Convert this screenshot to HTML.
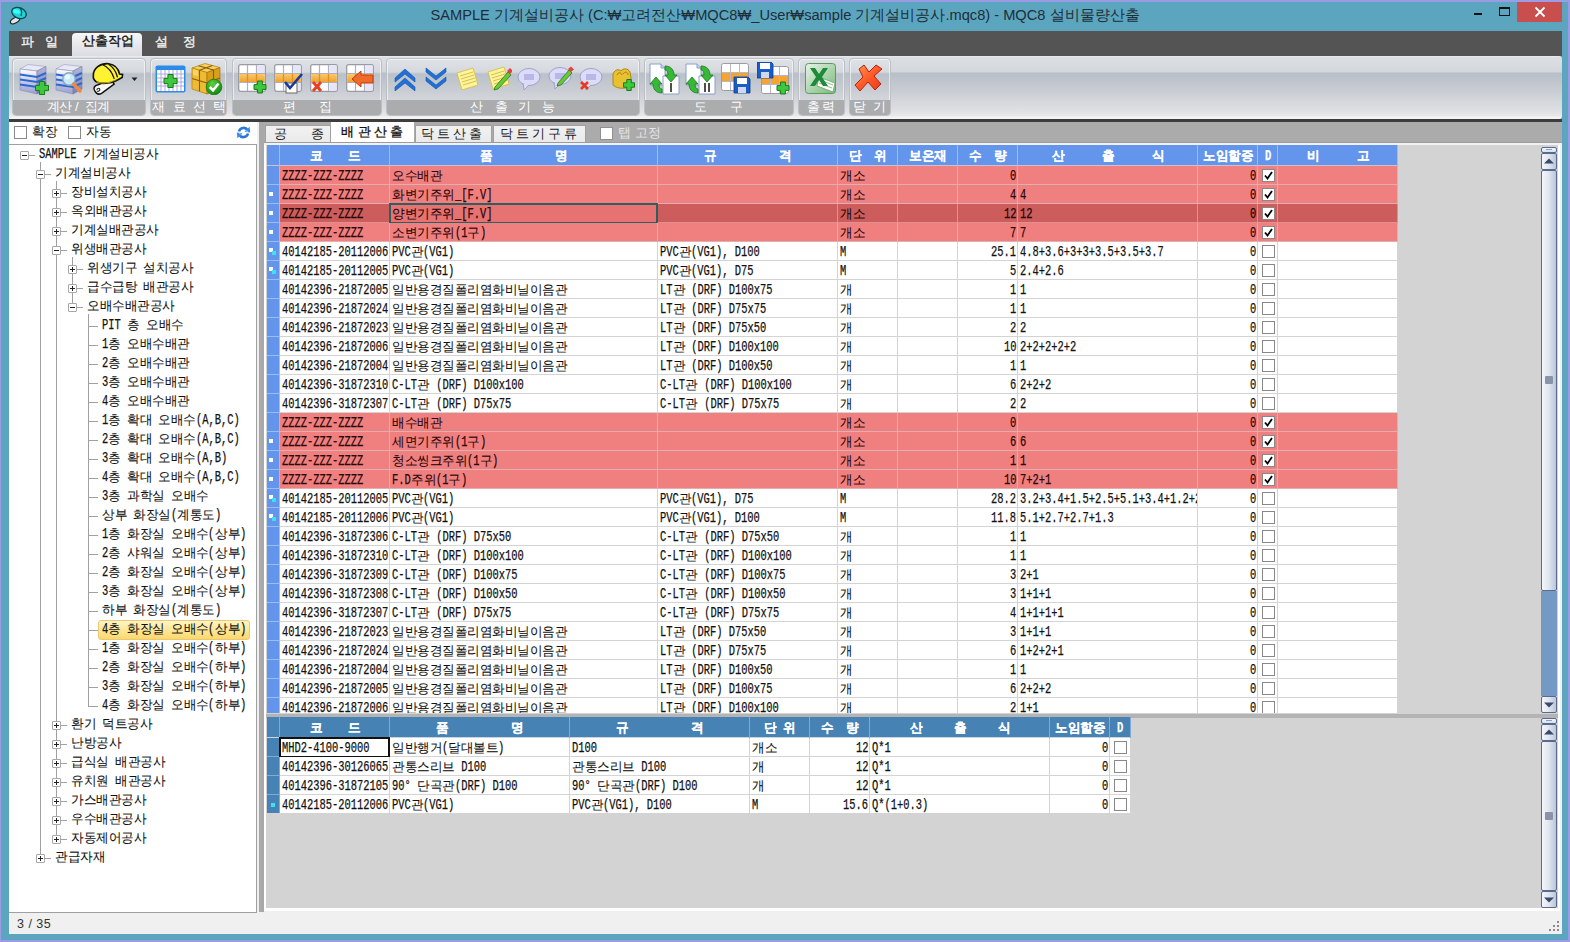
<!DOCTYPE html><html><head><meta charset="utf-8"><style>
*{margin:0;padding:0;box-sizing:border-box}
html,body{width:1570px;height:942px;overflow:hidden}
body{position:relative;background:#9c9ce6;font-family:"Liberation Sans",sans-serif;}
.abs{position:absolute}
.t{position:absolute;white-space:nowrap;line-height:1}
#frame{position:absolute;left:1px;top:2px;width:1567px;height:938px;background:#5ca5bf}
#title{position:absolute;left:0;top:8px;width:1570px;text-align:center;font-size:14.65px;color:#1e2e38}
#menubar{position:absolute;left:9px;top:31px;width:1553px;height:25px;background:#545454}
.mtab{position:absolute;top:0;height:25px;font-size:13px;color:#f4f4f4;line-height:22px}
#acttab{position:absolute;left:63px;top:2px;width:70px;height:23px;border-radius:4px 4px 0 0;background:linear-gradient(#f4f5f7,#dfe2e6);color:#111;text-align:center;font-size:13px;line-height:20px}
#ribbon{position:absolute;left:9px;top:56px;width:1553px;height:63px;border-radius:0 3px 3px 0;background:linear-gradient(#f2f3f5 0px,#dcdfe3 1px,#d3d7dc 16px,#b8bfc8 17px,#c9cdd3 35px,#dfe0e3 55px,#e9e9eb 60px,#f4f4f4 61px)}
#ribline{position:absolute;left:9px;top:119px;width:1553px;height:3px;background:#3d3d3d}
.grp{position:absolute;top:2px;height:58px;border:1px solid #bcc0c5;border-radius:4px;box-shadow:inset 0 0 0 1px rgba(255,255,255,0.55);background:linear-gradient(#dfe2e6 0px,#d5d9de 13px,#bac1ca 15px,#c8ccd2 30px,#d6d8dc 44px)}
.glab{position:absolute;left:0;right:0;bottom:0;height:15px;background:#aaacae;border-radius:0 0 3px 3px}
.ico{position:absolute}
#content{position:absolute;left:9px;top:122px;width:1553px;height:812px;background:#f0f0f0}
#lefttop{position:absolute;left:9px;top:122px;width:248px;height:23px;background:#fff}
#tree{position:absolute;left:9px;top:144px;width:248px;height:769px;background:#fff;border-top:1px solid #a0a0a0;border-right:1px solid #a0a0a0;border-bottom:1px solid #a0a0a0;overflow:hidden}
#split{position:absolute;left:259px;top:122px;width:5px;height:790px;background:#a9a9a9}
#tabstrip{position:absolute;left:264px;top:122px;width:1298px;height:23px;background:#ababab}
#gridpanel{position:absolute;left:264px;top:145px;width:1296px;height:766px;background:#fff}
#gridbg{position:absolute;left:266px;top:145px;width:1292px;height:763px;background:#d3d3d3}
.cb{position:absolute;width:13px;height:13px;border:1px solid #8a8a8a;background:#fff}
.row{position:absolute;height:19px;overflow:hidden}
.cell{position:absolute;top:0;height:19px;border-right:1px solid;border-bottom:1px solid;overflow:hidden;white-space:nowrap}
.ct{position:absolute;top:3px;font-size:13px;line-height:13px;white-space:nowrap}
#status{position:absolute;left:9px;top:913px;width:1553px;height:21px;background:#f0f0f0}
.sb{position:absolute;width:16px;border:1px solid #5a6a8a;border-radius:2px;background:linear-gradient(90deg,#f4f6fa,#dfe5ef 50%,#b9c6d8)}
</style></head><body>
<div id="frame"></div>
<svg class="abs" style="left:0;top:0" width="32" height="28" viewBox="0 0 32 28">
<ellipse cx="15" cy="20.5" rx="5" ry="2.6" transform="rotate(-28 15 20.5)" fill="#e4e4e4" stroke="#1a2a30" stroke-width="1.2"/>
<ellipse cx="19" cy="13" rx="7.6" ry="5.2" transform="rotate(22 19 13)" fill="#1ed4d4" stroke="#0e4850" stroke-width="1.3"/>
<ellipse cx="16.5" cy="11.5" rx="3.5" ry="2" transform="rotate(15 16.5 11.5)" fill="#38ffff"/>
<path d="M20 8 C22 10 22 13 21 16" stroke="#0e4850" stroke-width="1.2" fill="none"/>
</svg>
<div id="title" class="t">SAMPLE 기계설비공사 (C:₩고려전산₩MQC8₩_User₩sample 기계설비공사.mqc8) - MQC8 설비물량산출</div>
<div class="abs" style="left:1474px;top:13px;width:8px;height:2px;background:#111"></div>
<div class="abs" style="left:1499px;top:7px;width:11px;height:9px;border:1px solid #111;border-top-width:2px"></div>
<div class="abs" style="left:1517px;top:2px;width:45px;height:20px;background:#c94e4e"></div>
<svg class="abs" style="left:1534px;top:6px" width="12" height="12" viewBox="0 0 12 12"><path d="M1.5 1.5 L10.5 10.5 M10.5 1.5 L1.5 10.5" stroke="#fff" stroke-width="1.8"/></svg>
<div id="menubar"></div>
<div class="abs" style="left:72px;top:33px;width:70px;height:23px;border-radius:4px 4px 0 0;background:linear-gradient(#f6f7f9,#e4e6ea 60%,#dadde1)"></div>
<div class="t" style="left:21px;top:35px;font-size:13px;color:#f2f2f2;font-weight:normal;-webkit-text-stroke:0.35px #f2f2f2">파</div>
<div class="t" style="left:45px;top:35px;font-size:13px;color:#f2f2f2;font-weight:normal;-webkit-text-stroke:0.35px #f2f2f2">일</div>
<div class="t" style="left:82px;top:35px;font-size:12.6px;color:#111;font-weight:normal;-webkit-text-stroke:0.35px #111">산출작업</div>
<div class="t" style="left:155px;top:35px;font-size:13px;color:#f2f2f2;font-weight:normal;-webkit-text-stroke:0.35px #f2f2f2">설</div>
<div class="t" style="left:183px;top:35px;font-size:13px;color:#f2f2f2;font-weight:normal;-webkit-text-stroke:0.35px #f2f2f2">정</div>
<div id="ribbon">
<div class="grp" style="left:3px;width:134px"><div class="glab"></div></div>
<div class="grp" style="left:141px;width:77px"><div class="glab"></div></div>
<div class="grp" style="left:223px;width:150px"><div class="glab"></div></div>
<div class="grp" style="left:377px;width:254px"><div class="glab"></div></div>
<div class="grp" style="left:635px;width:150px"><div class="glab"></div></div>
<div class="grp" style="left:789px;width:47px"><div class="glab"></div></div>
<div class="grp" style="left:840px;width:42px"><div class="glab"></div></div>
</div>
<div id="ribline"></div>
<div class="t" style="left:47px;top:100px;font-size:13px;color:#ffffff;font-weight:normal;">계</div>
<div class="t" style="left:59px;top:100px;font-size:13px;color:#ffffff;font-weight:normal;">산</div>
<div class="t" style="left:75px;top:100px;font-size:13px;color:#ffffff;font-weight:normal;">/</div>
<div class="t" style="left:85px;top:100px;font-size:13px;color:#ffffff;font-weight:normal;">집</div>
<div class="t" style="left:97px;top:100px;font-size:13px;color:#ffffff;font-weight:normal;">계</div>
<div class="t" style="left:152px;top:100px;font-size:13px;color:#ffffff;font-weight:normal;">재</div>
<div class="t" style="left:173px;top:100px;font-size:13px;color:#ffffff;font-weight:normal;">료</div>
<div class="t" style="left:193px;top:100px;font-size:13px;color:#ffffff;font-weight:normal;">선</div>
<div class="t" style="left:213px;top:100px;font-size:13px;color:#ffffff;font-weight:normal;">택</div>
<div class="t" style="left:283px;top:100px;font-size:13px;color:#ffffff;font-weight:normal;">편</div>
<div class="t" style="left:319px;top:100px;font-size:13px;color:#ffffff;font-weight:normal;">집</div>
<div class="t" style="left:470px;top:100px;font-size:13px;color:#ffffff;font-weight:normal;">산</div>
<div class="t" style="left:495px;top:100px;font-size:13px;color:#ffffff;font-weight:normal;">출</div>
<div class="t" style="left:518px;top:100px;font-size:13px;color:#ffffff;font-weight:normal;">기</div>
<div class="t" style="left:542px;top:100px;font-size:13px;color:#ffffff;font-weight:normal;">능</div>
<div class="t" style="left:694px;top:100px;font-size:13px;color:#ffffff;font-weight:normal;">도</div>
<div class="t" style="left:730px;top:100px;font-size:13px;color:#ffffff;font-weight:normal;">구</div>
<div class="t" style="left:807px;top:100px;font-size:13px;color:#ffffff;font-weight:normal;">출</div>
<div class="t" style="left:822px;top:100px;font-size:13px;color:#ffffff;font-weight:normal;">력</div>
<div class="t" style="left:853px;top:100px;font-size:13px;color:#ffffff;font-weight:normal;">닫</div>
<div class="t" style="left:873px;top:100px;font-size:13px;color:#ffffff;font-weight:normal;">기</div>
<svg class="ico" style="left:19px;top:63px" width="30" height="32" viewBox="0 0 30 32"><defs><linearGradient id="dbf" x1="0" y1="0" x2="0" y2="1"><stop offset="0" stop-color="#ffffff"/><stop offset="0.5" stop-color="#c8cce8"/><stop offset="1" stop-color="#9a9ccc"/></linearGradient>
<linearGradient id="dbr" x1="0" y1="0" x2="0" y2="1"><stop offset="0" stop-color="#b8b8d8"/><stop offset="1" stop-color="#7c7cb0"/></linearGradient></defs>
<path d="M1 6 L9 1.5 L27 3.5 L18 8 Z" fill="#e8e8f6" stroke="#9a9ac0" stroke-width="0.6"/>
<path d="M1 6 L18 8 L18 31 L1 27 Z" fill="url(#dbf)" stroke="#8a8ab8" stroke-width="0.6"/>
<path d="M18 8 L27 3.5 L27 26 L18 31 Z" fill="url(#dbr)" stroke="#7a7aa8" stroke-width="0.6"/>
<path d="M1 11.5 L18 14 L27 10 M1 16.5 L18 19 L27 15 M1 21.5 L18 24 L27 20" stroke="#2a6ad0" stroke-width="2" fill="none"/><path d="M20.4 18.5 h5.2 v3.9 h3.9 v5.2 h-3.9 v3.9 h-5.2 v-3.9 h-3.9 v-5.2 h3.9 z" fill="#3ec83e" stroke="#1a7a1a" stroke-width="1"/></svg>
<svg class="ico" style="left:55px;top:63px" width="32" height="32" viewBox="0 0 32 32"><defs><linearGradient id="dbf2" x1="0" y1="0" x2="0" y2="1"><stop offset="0" stop-color="#ffffff"/><stop offset="0.5" stop-color="#c8cce8"/><stop offset="1" stop-color="#9a9ccc"/></linearGradient>
<linearGradient id="dbr2" x1="0" y1="0" x2="0" y2="1"><stop offset="0" stop-color="#b8b8d8"/><stop offset="1" stop-color="#7c7cb0"/></linearGradient></defs>
<path d="M1 6 L9 1.5 L27 3.5 L18 8 Z" fill="#e8e8f6" stroke="#9a9ac0" stroke-width="0.6"/>
<path d="M1 6 L18 8 L18 31 L1 27 Z" fill="url(#dbf2)" stroke="#8a8ab8" stroke-width="0.6"/>
<path d="M18 8 L27 3.5 L27 26 L18 31 Z" fill="url(#dbr2)" stroke="#7a7aa8" stroke-width="0.6"/>
<path d="M1 11.5 L18 14 L27 10 M1 16.5 L18 19 L27 15 M1 21.5 L18 24 L27 20" stroke="#2a6ad0" stroke-width="2" fill="none"/><circle cx="14" cy="16" r="6.2" fill="#c8e8fc" stroke="#8aa8c0" stroke-width="1.4"/><circle cx="12.5" cy="14" r="2.5" fill="#eef8ff"/><path d="M18.5 21 L25 28" stroke="#f08a40" stroke-width="3.4" stroke-linecap="round"/></svg>
<svg class="ico" style="left:90px;top:61px" width="36" height="35" viewBox="0 0 36 35"><g transform="rotate(-10 18 17)"><path d="M3 28 C1 25 3 22 7 22 L21 19 L23 24 L9 31 C6 32 4 31 3 28 Z" fill="#f8f8f8" stroke="#111" stroke-width="1.5"/>
<path d="M5 27 C5 25 8 25 8 27 C8 28 6 29 5 28" stroke="#111" stroke-width="1" fill="none"/>
<path d="M4 12 C5 5 13 1 21 3 C27 5 30 10 30 15 L33 16 L32 19 L26 21 C20 23 10 22 6 19 C4 17 3 15 4 12 Z" fill="#fff230" stroke="#111" stroke-width="1.6"/>
<path d="M15 3 C20 6 23 11 24 19 M21 3.5 C25 7 27 11 27.5 18" stroke="#111" stroke-width="1.3" fill="none"/>
<path d="M6 19 C12 22 20 22 26 20" stroke="#b8a800" stroke-width="1" fill="none"/></g></svg>
<svg class="ico" style="left:131px;top:77px" width="7" height="5" viewBox="0 0 7 5"><path d="M0.5 0.5 H6.5 L3.5 4 Z" fill="#222"/></svg>
<svg class="ico" style="left:155px;top:65px" width="31" height="28" viewBox="0 0 31 28"><rect x="0.5" y="0.5" width="30" height="27" rx="2" fill="#2a8ce8"/>
<rect x="2" y="5" width="27" height="21" fill="#fff"/>
<path d="M2 9 H29 M2 13 H29 M2 17 H29 M2 21 H29 M6 5 V26 M10 5 V26 M14 5 V26 M18 5 V26 M22 5 V26 M26 5 V26" stroke="#b0a8d8" stroke-width="1"/><path d="M12.9 9.5 h5.2 v3.9 h3.9 v5.2 h-3.9 v3.9 h-5.2 v-3.9 h-3.9 v-5.2 h3.9 z" fill="#3ec83e" stroke="#1a7a1a" stroke-width="1"/></svg>
<svg class="ico" style="left:190px;top:62px" width="33" height="33" viewBox="0 0 33 33"><path d="M2 6 L15 1.5 L30 5.5 L17 10.5 Z" fill="#f6d060" stroke="#b08010" stroke-width="0.7"/>
<path d="M2 6 L17 10.5 L17 32 L2 27 Z" fill="#eebc30" stroke="#b08010" stroke-width="0.7"/>
<path d="M17 10.5 L30 5.5 L30 27 L17 32 Z" fill="#d8a018" stroke="#a07010" stroke-width="0.7"/>
<path d="M8.5 3.8 L23.5 8 M22.5 3.5 L9.5 8.3 M9.5 8.3 V29.3 M23.5 8 V29.5 M2 16.5 L17 21 L30 16" stroke="#8a5a08" stroke-width="1.1" fill="none"/>
<path d="M3 7 L8 8.5 V14 L3 13 Z" fill="#fae080" opacity="0.7"/>
<defs><radialGradient id="gck" cx="0.4" cy="0.3" r="0.7"><stop offset="0" stop-color="#60d040"/><stop offset="1" stop-color="#108a10"/></radialGradient></defs>
<circle cx="24" cy="25" r="7.8" fill="url(#gck)" stroke="#1a7a1a" stroke-width="0.8"/>
<path d="M19.8 25 L23 28.2 L28.5 21.5" stroke="#fff" stroke-width="2.6" fill="none"/></svg>
<svg class="ico" style="left:238px;top:64px" width="30" height="30" viewBox="0 0 30 30"><defs><linearGradient id="og" x1="0" y1="0" x2="0" y2="1"><stop offset="0" stop-color="#fcc868"/><stop offset="1" stop-color="#f0a028"/></linearGradient></defs><rect x="0.7" y="0.7" width="26.6" height="26.6" rx="2" fill="#fff" stroke="#9a9aa4" stroke-width="1.3"/>
<rect x="1.3" y="10" width="25.4" height="8.5" fill="url(#og)"/>
<path d="M1 9.5 H27 M1 18.5 H27 M9.5 1 V27 M18.5 1 V27" stroke="#b0b0bc" stroke-width="1.2"/>
<path d="M9.5 10 V18.5 M18.5 10 V18.5" stroke="#e09020" stroke-width="1.2"/>
<rect x="19.2" y="1.3" width="7.5" height="7.6" fill="#e6e6f6"/><rect x="19.2" y="19.2" width="7.5" height="7.5" fill="#e6e6f6"/><path d="M19.6 17 h4.800000000000001 v3.5999999999999996 h3.5999999999999996 v4.800000000000001 h-3.5999999999999996 v3.5999999999999996 h-4.800000000000001 v-3.5999999999999996 h-3.5999999999999996 v-4.800000000000001 h3.5999999999999996 z" fill="#3ec83e" stroke="#1a7a1a" stroke-width="1"/></svg>
<svg class="ico" style="left:274px;top:64px" width="30" height="30" viewBox="0 0 30 30"><defs><linearGradient id="og" x1="0" y1="0" x2="0" y2="1"><stop offset="0" stop-color="#fcc868"/><stop offset="1" stop-color="#f0a028"/></linearGradient></defs><rect x="0.7" y="0.7" width="26.6" height="26.6" rx="2" fill="#fff" stroke="#9a9aa4" stroke-width="1.3"/>
<rect x="1.3" y="10" width="25.4" height="8.5" fill="url(#og)"/>
<path d="M1 9.5 H27 M1 18.5 H27 M9.5 1 V27 M18.5 1 V27" stroke="#b0b0bc" stroke-width="1.2"/>
<path d="M9.5 10 V18.5 M18.5 10 V18.5" stroke="#e09020" stroke-width="1.2"/>
<rect x="19.2" y="1.3" width="7.5" height="7.6" fill="#e6e6f6"/><rect x="19.2" y="19.2" width="7.5" height="7.5" fill="#e6e6f6"/><rect x="12" y="19" width="11" height="10" fill="#fff" stroke="#666"/><path d="M11 18 L16 24 L28 10" stroke="#1a3a98" stroke-width="2.6" fill="none"/></svg>
<svg class="ico" style="left:310px;top:64px" width="30" height="30" viewBox="0 0 30 30"><defs><linearGradient id="og" x1="0" y1="0" x2="0" y2="1"><stop offset="0" stop-color="#fcc868"/><stop offset="1" stop-color="#f0a028"/></linearGradient></defs><rect x="0.7" y="0.7" width="26.6" height="26.6" rx="2" fill="#fff" stroke="#9a9aa4" stroke-width="1.3"/>
<rect x="1.3" y="10" width="25.4" height="8.5" fill="url(#og)"/>
<path d="M1 9.5 H27 M1 18.5 H27 M9.5 1 V27 M18.5 1 V27" stroke="#b0b0bc" stroke-width="1.2"/>
<path d="M9.5 10 V18.5 M18.5 10 V18.5" stroke="#e09020" stroke-width="1.2"/>
<rect x="19.2" y="1.3" width="7.5" height="7.6" fill="#e6e6f6"/><rect x="19.2" y="19.2" width="7.5" height="7.5" fill="#e6e6f6"/><path d="M3 18 L11 27 M11 18 L3 27" stroke="#e84020" stroke-width="3"/></svg>
<svg class="ico" style="left:346px;top:64px" width="30" height="30" viewBox="0 0 30 30"><defs><linearGradient id="og" x1="0" y1="0" x2="0" y2="1"><stop offset="0" stop-color="#fcc868"/><stop offset="1" stop-color="#f0a028"/></linearGradient></defs><rect x="0.7" y="0.7" width="26.6" height="26.6" rx="2" fill="#fff" stroke="#9a9aa4" stroke-width="1.3"/>
<rect x="1.3" y="10" width="25.4" height="8.5" fill="url(#og)"/>
<path d="M1 9.5 H27 M1 18.5 H27 M9.5 1 V27 M18.5 1 V27" stroke="#b0b0bc" stroke-width="1.2"/>
<path d="M9.5 10 V18.5 M18.5 10 V18.5" stroke="#e09020" stroke-width="1.2"/>
<rect x="19.2" y="1.3" width="7.5" height="7.6" fill="#e6e6f6"/><rect x="19.2" y="19.2" width="7.5" height="7.5" fill="#e6e6f6"/><path d="M6 15 L15 7 L15 11 L27 11 L27 19 L15 19 L15 23 Z" fill="#f06a28" stroke="#c03a10" stroke-width="1"/></svg>
<svg class="ico" style="left:394px;top:67px" width="22" height="24" viewBox="0 0 22 24"><path d="M1 11 L11 2 L21 11 L21 15 L11 7 L1 15 Z M1 20 L11 11 L21 20 L21 24 L11 16 L1 24 Z" fill="#2070d8" stroke="#1050a8" stroke-width="0.6"/></svg>
<svg class="ico" style="left:425px;top:67px" width="22" height="24" viewBox="0 0 22 24"><path d="M1 1 L11 9 L21 1 L21 5 L11 13 L1 5 Z M1 10 L11 18 L21 10 L21 14 L11 22 L1 14 Z" fill="#2070d8" stroke="#1050a8" stroke-width="0.6"/></svg>
<svg class="ico" style="left:455px;top:67px" width="25" height="25" viewBox="0 0 25 25"><path d="M2 6 L18 1 L23 18 L7 23 Z" fill="#fdf4a0" stroke="#d8c040" stroke-width="0.9"/><path d="M5 9 L18 5 M6 12 L19 8 M7 15 L20 11 M8 18 L21 14" stroke="#d8c040" stroke-width="1"/></svg>
<svg class="ico" style="left:486px;top:66px" width="26" height="26" viewBox="0 0 26 26"><path d="M2 6 L18 1 L23 18 L7 23 Z" fill="#fdf4a0" stroke="#d8c040" stroke-width="0.9"/><path d="M5 9 L18 5 M6 12 L19 8 M7 15 L20 11 M8 18 L21 14" stroke="#d8c040" stroke-width="1"/><path d="M9 21 L22 6 L25 9 L12 23 L8 24 Z" fill="#6ac838" stroke="#287818" stroke-width="0.8"/><path d="M21 5 L24 2 L27 5 L24 8 Z" fill="#e84040"/></svg>
<svg class="ico" style="left:517px;top:67px" width="25" height="25" viewBox="0 0 25 25"><ellipse cx="12" cy="10" rx="11" ry="8.5" fill="#dcdcf8" stroke="#a0a0d0"/><path d="M6 16 L7 23 L12 18" fill="#dcdcf8" stroke="#a0a0d0"/><rect x="7" y="7" width="10" height="6" fill="#b8b8e8"/></svg>
<svg class="ico" style="left:548px;top:66px" width="26" height="26" viewBox="0 0 26 26"><ellipse cx="12" cy="10" rx="11" ry="8.5" fill="#dcdcf8" stroke="#a0a0d0"/><path d="M6 16 L7 23 L12 18" fill="#dcdcf8" stroke="#a0a0d0"/><rect x="7" y="7" width="10" height="6" fill="#b8b8e8"/><path d="M10 17 L21 4 L24 7 L13 19 L9 20 Z" fill="#6ac838" stroke="#287818" stroke-width="0.8"/><path d="M20 3 L23 0.5 L26 3.5 L23 6 Z" fill="#e84040"/></svg>
<svg class="ico" style="left:579px;top:67px" width="25" height="25" viewBox="0 0 25 25"><ellipse cx="12" cy="10" rx="11" ry="8.5" fill="#dcdcf8" stroke="#a0a0d0"/><path d="M6 16 L7 23 L12 18" fill="#dcdcf8" stroke="#a0a0d0"/><rect x="7" y="7" width="10" height="6" fill="#b8b8e8"/><path d="M2 15 L9 22 M9 15 L2 22" stroke="#e83a20" stroke-width="2.6"/></svg>
<svg class="ico" style="left:610px;top:66px" width="26" height="26" viewBox="0 0 26 26"><path d="M3 8 C5 3 9 3 11 5 C13 2 18 2 20 6 L22 18 C20 23 8 24 3 19 Z" fill="#e8c030" stroke="#a88010" stroke-width="0.9"/><path d="M7 9 C8 6 11 6 12 9 M13 8 C15 5 18 6 18 9" stroke="#a88010" fill="none"/><path d="M16.8 13.5 h4.4 v3.3 h3.3 v4.4 h-3.3 v3.3 h-4.4 v-3.3 h-3.3 v-4.4 h3.3 z" fill="#3ec83e" stroke="#1a7a1a" stroke-width="1"/></svg>
<svg class="ico" style="left:649px;top:63px" width="32" height="32" viewBox="0 0 32 32"><path d="M1 1 L12 1 L16 5 L16 22 L1 22 Z" fill="#fff" stroke="#8aa0c8"/><path d="M12 1 L12 5 L16 5" fill="#c8d4f0" stroke="#8aa0c8"/><path d="M14 13 L30 13 L30 31 L14 31 Z" fill="#fff" stroke="#8aa0c8"/><path d="M16 3 C22 3 25 7 25 12 L28 12 L22 19 L16 12 L19 12 C19 9 18 7 16 7 Z" fill="#38b838" stroke="#187818" stroke-width="0.8"/><path d="M13 30 C7 30 4 26 4 21 L1 21 L7 14 L13 21 L10 21 C10 24 11 26 13 26 Z" fill="#38b838" stroke="#187818" stroke-width="0.8"/><path d="M22 20 V29" stroke="#222" stroke-width="1.6"/></svg>
<svg class="ico" style="left:685px;top:63px" width="32" height="32" viewBox="0 0 32 32"><path d="M1 1 L12 1 L16 5 L16 22 L1 22 Z" fill="#fff" stroke="#8aa0c8"/><path d="M12 1 L12 5 L16 5" fill="#c8d4f0" stroke="#8aa0c8"/><path d="M14 13 L30 13 L30 31 L14 31 Z" fill="#fff" stroke="#8aa0c8"/><path d="M16 3 C22 3 25 7 25 12 L28 12 L22 19 L16 12 L19 12 C19 9 18 7 16 7 Z" fill="#38b838" stroke="#187818" stroke-width="0.8"/><path d="M13 30 C7 30 4 26 4 21 L1 21 L7 14 L13 21 L10 21 C10 24 11 26 13 26 Z" fill="#38b838" stroke="#187818" stroke-width="0.8"/><path d="M20 20 V29 M24 20 V29" stroke="#222" stroke-width="1.6"/></svg>
<svg class="ico" style="left:721px;top:63px" width="32" height="32" viewBox="0 0 32 32"><rect x="0.5" y="0.5" width="27" height="27" rx="2" fill="#fff" stroke="#9a9aa8"/><rect x="1" y="10" width="26" height="9" fill="#f5a332"/><path d="M1 9.5 H27 M1 18.5 H27 M9.5 1 V27 M18.5 1 V27" stroke="#b8b8c8"/><path d="M13 14 h14 l2 2 v14 h-16 z" fill="#1a5cc8" stroke="#0c3a88" stroke-width="0.8"/><rect x="16" y="15" width="10" height="6" fill="#fff"/><rect x="17" y="24" width="8" height="6" fill="#d0d8f0"/></svg>
<svg class="ico" style="left:757px;top:62px" width="33" height="33" viewBox="0 0 33 33"><rect x="4.5" y="4.5" width="27" height="27" rx="2" fill="#fff" stroke="#9a9aa8"/><rect x="5" y="14" width="26" height="9" fill="#f5a332"/><path d="M5 13.5 H31 M5 22.5 H31 M13.5 5 V31 M22.5 5 V31" stroke="#b8b8c8"/><path d="M0 0 h14 l2 2 v14 h-16 z" fill="#1a5cc8" stroke="#0c3a88" stroke-width="0.8"/><rect x="3" y="1" width="10" height="6" fill="#fff"/><rect x="4" y="10" width="8" height="6" fill="#d0d8f0"/><path d="M23.6 20 h4.800000000000001 v3.5999999999999996 h3.5999999999999996 v4.800000000000001 h-3.5999999999999996 v3.5999999999999996 h-4.800000000000001 v-3.5999999999999996 h-3.5999999999999996 v-4.800000000000001 h3.5999999999999996 z" fill="#3ec83e" stroke="#1a7a1a" stroke-width="1"/></svg>
<svg class="ico" style="left:805px;top:63px" width="32" height="31" viewBox="0 0 32 31"><defs><linearGradient id="xg" x1="0" y1="0" x2="1" y2="1"><stop offset="0" stop-color="#e8f4e8"/><stop offset="1" stop-color="#78b878"/></linearGradient></defs>
<rect x="0.5" y="0.5" width="30" height="30" rx="3" fill="url(#xg)" stroke="#5a9a5a"/>
<path d="M14 14 L30 20 L28 29 L12 23 Z" fill="#fff" stroke="#7ab07a"/>
<path d="M15 17 L28 22 M14 20 L27 25" stroke="#8ac08a"/>
<path d="M5 5 L10 5 L14 11 L18 5 L23 5 L17 14 L23 23 L18 23 L14 17 L10 23 L5 23 L11 14 Z" fill="#1e8a3a"/></svg>
<svg class="ico" style="left:854px;top:63px" width="31" height="31" viewBox="0 0 31 31"><defs><linearGradient id="xr" x1="0" y1="0" x2="1" y2="1"><stop offset="0" stop-color="#ff9a50"/><stop offset="0.5" stop-color="#ff5a28"/><stop offset="1" stop-color="#e83818"/></linearGradient></defs><path d="M5 6 L10 2 L15 9 L22 2 L28 6 L20 13 L27 21 L21 27 L14 19 L6 28 L1 22 L9 14 Z" fill="url(#xr)" stroke="#b82010" stroke-width="1" stroke-linejoin="round"/></svg>
<div id="content"></div>
<div id="lefttop"></div>
<div class="cb" style="left:14px;top:126px"></div>
<div class="t" style="left:32.00px;top:125px;font:normal 14px/1 'Liberation Sans',sans-serif;white-space:pre;color:#222;-webkit-text-stroke:0.1px #222;transform:scale(0.8929,0.92);transform-origin:0 1px">확장</div>
<div class="cb" style="left:68px;top:126px"></div>
<div class="t" style="left:86.00px;top:125px;font:normal 14px/1 'Liberation Sans',sans-serif;white-space:pre;color:#222;-webkit-text-stroke:0.1px #222;transform:scale(0.8929,0.92);transform-origin:0 1px">자동</div>
<svg class="ico" style="left:236px;top:125px" width="15" height="15" viewBox="0 0 15 15"><path d="M3 6.5 C4 2.5 9.5 1.5 11.5 5" stroke="#2a78d8" stroke-width="2.6" fill="none"/><path d="M8.5 6.8 L14.2 7.4 L13.6 1.8 Z" fill="#3a8ae8"/><path d="M12 8.5 C11 12.5 5.5 13.5 3.5 10" stroke="#2a78d8" stroke-width="2.6" fill="none"/><path d="M6.5 8.2 L0.8 7.6 L1.4 13.2 Z" fill="#3a8ae8"/><path d="M9 5.5 L12 6.5 M6 9.5 L3 8.5" stroke="#9ad8ff" stroke-width="1"/></svg>
<div id="tree"></div>
<div class="abs" style="left:40px;top:162px;width:1px;height:696px;background:#a0a0a0"></div>
<div class="abs" style="left:56px;top:181px;width:1px;height:658px;background:#a0a0a0"></div>
<div class="abs" style="left:72px;top:257px;width:1px;height:50px;background:#a0a0a0"></div>
<div class="abs" style="left:88px;top:314px;width:1px;height:393px;background:#a0a0a0"></div>
<div class="abs" style="left:29px;top:155px;width:6px;height:1px;background:#a0a0a0"></div>
<div class="abs" style="left:20px;top:151px;width:9px;height:9px;border:1px solid #a8a8a8;border-radius:1px;background:#fff"></div>
<div class="abs" style="left:22px;top:155px;width:5px;height:1px;background:#222"></div>
<div class="t" style="left:39.00px;top:147px;font:normal 14px/1 'Liberation Mono',monospace;white-space:pre;color:#111;-webkit-text-stroke:0.25px #111;transform:scaleX(0.7440);transform-origin:0 0">SAMPLE </div>
<div class="t" style="left:82.75px;top:147px;font:normal 14px/1 'Liberation Sans',sans-serif;white-space:pre;color:#111;-webkit-text-stroke:0.1px #111;transform:scale(0.8929,0.92);transform-origin:0 1px">기계설비공사</div>
<div class="abs" style="left:45px;top:174px;width:6px;height:1px;background:#a0a0a0"></div>
<div class="abs" style="left:36px;top:170px;width:9px;height:9px;border:1px solid #a8a8a8;border-radius:1px;background:#fff"></div>
<div class="abs" style="left:38px;top:174px;width:5px;height:1px;background:#222"></div>
<div class="t" style="left:55.00px;top:166px;font:normal 14px/1 'Liberation Sans',sans-serif;white-space:pre;color:#111;-webkit-text-stroke:0.1px #111;transform:scale(0.8929,0.92);transform-origin:0 1px">기계설비공사</div>
<div class="abs" style="left:61px;top:193px;width:6px;height:1px;background:#a0a0a0"></div>
<div class="abs" style="left:52px;top:189px;width:9px;height:9px;border:1px solid #a8a8a8;border-radius:1px;background:#fff"></div>
<div class="abs" style="left:54px;top:193px;width:5px;height:1px;background:#222"></div>
<div class="abs" style="left:56px;top:191px;width:1px;height:5px;background:#222"></div>
<div class="t" style="left:71.00px;top:185px;font:normal 14px/1 'Liberation Sans',sans-serif;white-space:pre;color:#111;-webkit-text-stroke:0.1px #111;transform:scale(0.8929,0.92);transform-origin:0 1px">장비설치공사</div>
<div class="abs" style="left:61px;top:212px;width:6px;height:1px;background:#a0a0a0"></div>
<div class="abs" style="left:52px;top:208px;width:9px;height:9px;border:1px solid #a8a8a8;border-radius:1px;background:#fff"></div>
<div class="abs" style="left:54px;top:212px;width:5px;height:1px;background:#222"></div>
<div class="abs" style="left:56px;top:210px;width:1px;height:5px;background:#222"></div>
<div class="t" style="left:71.00px;top:204px;font:normal 14px/1 'Liberation Sans',sans-serif;white-space:pre;color:#111;-webkit-text-stroke:0.1px #111;transform:scale(0.8929,0.92);transform-origin:0 1px">옥외배관공사</div>
<div class="abs" style="left:61px;top:231px;width:6px;height:1px;background:#a0a0a0"></div>
<div class="abs" style="left:52px;top:227px;width:9px;height:9px;border:1px solid #a8a8a8;border-radius:1px;background:#fff"></div>
<div class="abs" style="left:54px;top:231px;width:5px;height:1px;background:#222"></div>
<div class="abs" style="left:56px;top:229px;width:1px;height:5px;background:#222"></div>
<div class="t" style="left:71.00px;top:223px;font:normal 14px/1 'Liberation Sans',sans-serif;white-space:pre;color:#111;-webkit-text-stroke:0.1px #111;transform:scale(0.8929,0.92);transform-origin:0 1px">기계실배관공사</div>
<div class="abs" style="left:61px;top:250px;width:6px;height:1px;background:#a0a0a0"></div>
<div class="abs" style="left:52px;top:246px;width:9px;height:9px;border:1px solid #a8a8a8;border-radius:1px;background:#fff"></div>
<div class="abs" style="left:54px;top:250px;width:5px;height:1px;background:#222"></div>
<div class="t" style="left:71.00px;top:242px;font:normal 14px/1 'Liberation Sans',sans-serif;white-space:pre;color:#111;-webkit-text-stroke:0.1px #111;transform:scale(0.8929,0.92);transform-origin:0 1px">위생배관공사</div>
<div class="abs" style="left:77px;top:269px;width:6px;height:1px;background:#a0a0a0"></div>
<div class="abs" style="left:68px;top:265px;width:9px;height:9px;border:1px solid #a8a8a8;border-radius:1px;background:#fff"></div>
<div class="abs" style="left:70px;top:269px;width:5px;height:1px;background:#222"></div>
<div class="abs" style="left:72px;top:267px;width:1px;height:5px;background:#222"></div>
<div class="t" style="left:87.00px;top:261px;font:normal 14px/1 'Liberation Sans',sans-serif;white-space:pre;color:#111;-webkit-text-stroke:0.1px #111;transform:scale(0.8929,0.92);transform-origin:0 1px">위생기구</div>
<div class="t" style="left:137.00px;top:261px;font:normal 14px/1 'Liberation Mono',monospace;white-space:pre;color:#111;-webkit-text-stroke:0.25px #111;transform:scaleX(0.7440);transform-origin:0 0"> </div>
<div class="t" style="left:143.25px;top:261px;font:normal 14px/1 'Liberation Sans',sans-serif;white-space:pre;color:#111;-webkit-text-stroke:0.1px #111;transform:scale(0.8929,0.92);transform-origin:0 1px">설치공사</div>
<div class="abs" style="left:77px;top:288px;width:6px;height:1px;background:#a0a0a0"></div>
<div class="abs" style="left:68px;top:284px;width:9px;height:9px;border:1px solid #a8a8a8;border-radius:1px;background:#fff"></div>
<div class="abs" style="left:70px;top:288px;width:5px;height:1px;background:#222"></div>
<div class="abs" style="left:72px;top:286px;width:1px;height:5px;background:#222"></div>
<div class="t" style="left:87.00px;top:280px;font:normal 14px/1 'Liberation Sans',sans-serif;white-space:pre;color:#111;-webkit-text-stroke:0.1px #111;transform:scale(0.8929,0.92);transform-origin:0 1px">급수급탕</div>
<div class="t" style="left:137.00px;top:280px;font:normal 14px/1 'Liberation Mono',monospace;white-space:pre;color:#111;-webkit-text-stroke:0.25px #111;transform:scaleX(0.7440);transform-origin:0 0"> </div>
<div class="t" style="left:143.25px;top:280px;font:normal 14px/1 'Liberation Sans',sans-serif;white-space:pre;color:#111;-webkit-text-stroke:0.1px #111;transform:scale(0.8929,0.92);transform-origin:0 1px">배관공사</div>
<div class="abs" style="left:77px;top:307px;width:6px;height:1px;background:#a0a0a0"></div>
<div class="abs" style="left:68px;top:303px;width:9px;height:9px;border:1px solid #a8a8a8;border-radius:1px;background:#fff"></div>
<div class="abs" style="left:70px;top:307px;width:5px;height:1px;background:#222"></div>
<div class="t" style="left:87.00px;top:299px;font:normal 14px/1 'Liberation Sans',sans-serif;white-space:pre;color:#111;-webkit-text-stroke:0.1px #111;transform:scale(0.8929,0.92);transform-origin:0 1px">오배수배관공사</div>
<div class="abs" style="left:89px;top:326px;width:9px;height:1px;background:#a0a0a0"></div>
<div class="t" style="left:102.00px;top:318px;font:normal 14px/1 'Liberation Mono',monospace;white-space:pre;color:#111;-webkit-text-stroke:0.25px #111;transform:scaleX(0.7440);transform-origin:0 0">PIT </div>
<div class="t" style="left:127.00px;top:318px;font:normal 14px/1 'Liberation Sans',sans-serif;white-space:pre;color:#111;-webkit-text-stroke:0.1px #111;transform:scale(0.8929,0.92);transform-origin:0 1px">층</div>
<div class="t" style="left:139.50px;top:318px;font:normal 14px/1 'Liberation Mono',monospace;white-space:pre;color:#111;-webkit-text-stroke:0.25px #111;transform:scaleX(0.7440);transform-origin:0 0"> </div>
<div class="t" style="left:145.75px;top:318px;font:normal 14px/1 'Liberation Sans',sans-serif;white-space:pre;color:#111;-webkit-text-stroke:0.1px #111;transform:scale(0.8929,0.92);transform-origin:0 1px">오배수</div>
<div class="abs" style="left:89px;top:345px;width:9px;height:1px;background:#a0a0a0"></div>
<div class="t" style="left:102.00px;top:337px;font:normal 14px/1 'Liberation Mono',monospace;white-space:pre;color:#111;-webkit-text-stroke:0.25px #111;transform:scaleX(0.7440);transform-origin:0 0">1</div>
<div class="t" style="left:108.25px;top:337px;font:normal 14px/1 'Liberation Sans',sans-serif;white-space:pre;color:#111;-webkit-text-stroke:0.1px #111;transform:scale(0.8929,0.92);transform-origin:0 1px">층</div>
<div class="t" style="left:120.75px;top:337px;font:normal 14px/1 'Liberation Mono',monospace;white-space:pre;color:#111;-webkit-text-stroke:0.25px #111;transform:scaleX(0.7440);transform-origin:0 0"> </div>
<div class="t" style="left:127.00px;top:337px;font:normal 14px/1 'Liberation Sans',sans-serif;white-space:pre;color:#111;-webkit-text-stroke:0.1px #111;transform:scale(0.8929,0.92);transform-origin:0 1px">오배수배관</div>
<div class="abs" style="left:89px;top:364px;width:9px;height:1px;background:#a0a0a0"></div>
<div class="t" style="left:102.00px;top:356px;font:normal 14px/1 'Liberation Mono',monospace;white-space:pre;color:#111;-webkit-text-stroke:0.25px #111;transform:scaleX(0.7440);transform-origin:0 0">2</div>
<div class="t" style="left:108.25px;top:356px;font:normal 14px/1 'Liberation Sans',sans-serif;white-space:pre;color:#111;-webkit-text-stroke:0.1px #111;transform:scale(0.8929,0.92);transform-origin:0 1px">층</div>
<div class="t" style="left:120.75px;top:356px;font:normal 14px/1 'Liberation Mono',monospace;white-space:pre;color:#111;-webkit-text-stroke:0.25px #111;transform:scaleX(0.7440);transform-origin:0 0"> </div>
<div class="t" style="left:127.00px;top:356px;font:normal 14px/1 'Liberation Sans',sans-serif;white-space:pre;color:#111;-webkit-text-stroke:0.1px #111;transform:scale(0.8929,0.92);transform-origin:0 1px">오배수배관</div>
<div class="abs" style="left:89px;top:383px;width:9px;height:1px;background:#a0a0a0"></div>
<div class="t" style="left:102.00px;top:375px;font:normal 14px/1 'Liberation Mono',monospace;white-space:pre;color:#111;-webkit-text-stroke:0.25px #111;transform:scaleX(0.7440);transform-origin:0 0">3</div>
<div class="t" style="left:108.25px;top:375px;font:normal 14px/1 'Liberation Sans',sans-serif;white-space:pre;color:#111;-webkit-text-stroke:0.1px #111;transform:scale(0.8929,0.92);transform-origin:0 1px">층</div>
<div class="t" style="left:120.75px;top:375px;font:normal 14px/1 'Liberation Mono',monospace;white-space:pre;color:#111;-webkit-text-stroke:0.25px #111;transform:scaleX(0.7440);transform-origin:0 0"> </div>
<div class="t" style="left:127.00px;top:375px;font:normal 14px/1 'Liberation Sans',sans-serif;white-space:pre;color:#111;-webkit-text-stroke:0.1px #111;transform:scale(0.8929,0.92);transform-origin:0 1px">오배수배관</div>
<div class="abs" style="left:89px;top:402px;width:9px;height:1px;background:#a0a0a0"></div>
<div class="t" style="left:102.00px;top:394px;font:normal 14px/1 'Liberation Mono',monospace;white-space:pre;color:#111;-webkit-text-stroke:0.25px #111;transform:scaleX(0.7440);transform-origin:0 0">4</div>
<div class="t" style="left:108.25px;top:394px;font:normal 14px/1 'Liberation Sans',sans-serif;white-space:pre;color:#111;-webkit-text-stroke:0.1px #111;transform:scale(0.8929,0.92);transform-origin:0 1px">층</div>
<div class="t" style="left:120.75px;top:394px;font:normal 14px/1 'Liberation Mono',monospace;white-space:pre;color:#111;-webkit-text-stroke:0.25px #111;transform:scaleX(0.7440);transform-origin:0 0"> </div>
<div class="t" style="left:127.00px;top:394px;font:normal 14px/1 'Liberation Sans',sans-serif;white-space:pre;color:#111;-webkit-text-stroke:0.1px #111;transform:scale(0.8929,0.92);transform-origin:0 1px">오배수배관</div>
<div class="abs" style="left:89px;top:421px;width:9px;height:1px;background:#a0a0a0"></div>
<div class="t" style="left:102.00px;top:413px;font:normal 14px/1 'Liberation Mono',monospace;white-space:pre;color:#111;-webkit-text-stroke:0.25px #111;transform:scaleX(0.7440);transform-origin:0 0">1</div>
<div class="t" style="left:108.25px;top:413px;font:normal 14px/1 'Liberation Sans',sans-serif;white-space:pre;color:#111;-webkit-text-stroke:0.1px #111;transform:scale(0.8929,0.92);transform-origin:0 1px">층</div>
<div class="t" style="left:120.75px;top:413px;font:normal 14px/1 'Liberation Mono',monospace;white-space:pre;color:#111;-webkit-text-stroke:0.25px #111;transform:scaleX(0.7440);transform-origin:0 0"> </div>
<div class="t" style="left:127.00px;top:413px;font:normal 14px/1 'Liberation Sans',sans-serif;white-space:pre;color:#111;-webkit-text-stroke:0.1px #111;transform:scale(0.8929,0.92);transform-origin:0 1px">확대</div>
<div class="t" style="left:152.00px;top:413px;font:normal 14px/1 'Liberation Mono',monospace;white-space:pre;color:#111;-webkit-text-stroke:0.25px #111;transform:scaleX(0.7440);transform-origin:0 0"> </div>
<div class="t" style="left:158.25px;top:413px;font:normal 14px/1 'Liberation Sans',sans-serif;white-space:pre;color:#111;-webkit-text-stroke:0.1px #111;transform:scale(0.8929,0.92);transform-origin:0 1px">오배수</div>
<div class="t" style="left:195.75px;top:413px;font:normal 14px/1 'Liberation Mono',monospace;white-space:pre;color:#111;-webkit-text-stroke:0.25px #111;transform:scaleX(0.7440);transform-origin:0 0">(A,B,C)</div>
<div class="abs" style="left:89px;top:440px;width:9px;height:1px;background:#a0a0a0"></div>
<div class="t" style="left:102.00px;top:432px;font:normal 14px/1 'Liberation Mono',monospace;white-space:pre;color:#111;-webkit-text-stroke:0.25px #111;transform:scaleX(0.7440);transform-origin:0 0">2</div>
<div class="t" style="left:108.25px;top:432px;font:normal 14px/1 'Liberation Sans',sans-serif;white-space:pre;color:#111;-webkit-text-stroke:0.1px #111;transform:scale(0.8929,0.92);transform-origin:0 1px">층</div>
<div class="t" style="left:120.75px;top:432px;font:normal 14px/1 'Liberation Mono',monospace;white-space:pre;color:#111;-webkit-text-stroke:0.25px #111;transform:scaleX(0.7440);transform-origin:0 0"> </div>
<div class="t" style="left:127.00px;top:432px;font:normal 14px/1 'Liberation Sans',sans-serif;white-space:pre;color:#111;-webkit-text-stroke:0.1px #111;transform:scale(0.8929,0.92);transform-origin:0 1px">확대</div>
<div class="t" style="left:152.00px;top:432px;font:normal 14px/1 'Liberation Mono',monospace;white-space:pre;color:#111;-webkit-text-stroke:0.25px #111;transform:scaleX(0.7440);transform-origin:0 0"> </div>
<div class="t" style="left:158.25px;top:432px;font:normal 14px/1 'Liberation Sans',sans-serif;white-space:pre;color:#111;-webkit-text-stroke:0.1px #111;transform:scale(0.8929,0.92);transform-origin:0 1px">오배수</div>
<div class="t" style="left:195.75px;top:432px;font:normal 14px/1 'Liberation Mono',monospace;white-space:pre;color:#111;-webkit-text-stroke:0.25px #111;transform:scaleX(0.7440);transform-origin:0 0">(A,B,C)</div>
<div class="abs" style="left:89px;top:459px;width:9px;height:1px;background:#a0a0a0"></div>
<div class="t" style="left:102.00px;top:451px;font:normal 14px/1 'Liberation Mono',monospace;white-space:pre;color:#111;-webkit-text-stroke:0.25px #111;transform:scaleX(0.7440);transform-origin:0 0">3</div>
<div class="t" style="left:108.25px;top:451px;font:normal 14px/1 'Liberation Sans',sans-serif;white-space:pre;color:#111;-webkit-text-stroke:0.1px #111;transform:scale(0.8929,0.92);transform-origin:0 1px">층</div>
<div class="t" style="left:120.75px;top:451px;font:normal 14px/1 'Liberation Mono',monospace;white-space:pre;color:#111;-webkit-text-stroke:0.25px #111;transform:scaleX(0.7440);transform-origin:0 0"> </div>
<div class="t" style="left:127.00px;top:451px;font:normal 14px/1 'Liberation Sans',sans-serif;white-space:pre;color:#111;-webkit-text-stroke:0.1px #111;transform:scale(0.8929,0.92);transform-origin:0 1px">확대</div>
<div class="t" style="left:152.00px;top:451px;font:normal 14px/1 'Liberation Mono',monospace;white-space:pre;color:#111;-webkit-text-stroke:0.25px #111;transform:scaleX(0.7440);transform-origin:0 0"> </div>
<div class="t" style="left:158.25px;top:451px;font:normal 14px/1 'Liberation Sans',sans-serif;white-space:pre;color:#111;-webkit-text-stroke:0.1px #111;transform:scale(0.8929,0.92);transform-origin:0 1px">오배수</div>
<div class="t" style="left:195.75px;top:451px;font:normal 14px/1 'Liberation Mono',monospace;white-space:pre;color:#111;-webkit-text-stroke:0.25px #111;transform:scaleX(0.7440);transform-origin:0 0">(A,B)</div>
<div class="abs" style="left:89px;top:478px;width:9px;height:1px;background:#a0a0a0"></div>
<div class="t" style="left:102.00px;top:470px;font:normal 14px/1 'Liberation Mono',monospace;white-space:pre;color:#111;-webkit-text-stroke:0.25px #111;transform:scaleX(0.7440);transform-origin:0 0">4</div>
<div class="t" style="left:108.25px;top:470px;font:normal 14px/1 'Liberation Sans',sans-serif;white-space:pre;color:#111;-webkit-text-stroke:0.1px #111;transform:scale(0.8929,0.92);transform-origin:0 1px">층</div>
<div class="t" style="left:120.75px;top:470px;font:normal 14px/1 'Liberation Mono',monospace;white-space:pre;color:#111;-webkit-text-stroke:0.25px #111;transform:scaleX(0.7440);transform-origin:0 0"> </div>
<div class="t" style="left:127.00px;top:470px;font:normal 14px/1 'Liberation Sans',sans-serif;white-space:pre;color:#111;-webkit-text-stroke:0.1px #111;transform:scale(0.8929,0.92);transform-origin:0 1px">확대</div>
<div class="t" style="left:152.00px;top:470px;font:normal 14px/1 'Liberation Mono',monospace;white-space:pre;color:#111;-webkit-text-stroke:0.25px #111;transform:scaleX(0.7440);transform-origin:0 0"> </div>
<div class="t" style="left:158.25px;top:470px;font:normal 14px/1 'Liberation Sans',sans-serif;white-space:pre;color:#111;-webkit-text-stroke:0.1px #111;transform:scale(0.8929,0.92);transform-origin:0 1px">오배수</div>
<div class="t" style="left:195.75px;top:470px;font:normal 14px/1 'Liberation Mono',monospace;white-space:pre;color:#111;-webkit-text-stroke:0.25px #111;transform:scaleX(0.7440);transform-origin:0 0">(A,B,C)</div>
<div class="abs" style="left:89px;top:497px;width:9px;height:1px;background:#a0a0a0"></div>
<div class="t" style="left:102.00px;top:489px;font:normal 14px/1 'Liberation Mono',monospace;white-space:pre;color:#111;-webkit-text-stroke:0.25px #111;transform:scaleX(0.7440);transform-origin:0 0">3</div>
<div class="t" style="left:108.25px;top:489px;font:normal 14px/1 'Liberation Sans',sans-serif;white-space:pre;color:#111;-webkit-text-stroke:0.1px #111;transform:scale(0.8929,0.92);transform-origin:0 1px">층</div>
<div class="t" style="left:120.75px;top:489px;font:normal 14px/1 'Liberation Mono',monospace;white-space:pre;color:#111;-webkit-text-stroke:0.25px #111;transform:scaleX(0.7440);transform-origin:0 0"> </div>
<div class="t" style="left:127.00px;top:489px;font:normal 14px/1 'Liberation Sans',sans-serif;white-space:pre;color:#111;-webkit-text-stroke:0.1px #111;transform:scale(0.8929,0.92);transform-origin:0 1px">과학실</div>
<div class="t" style="left:164.50px;top:489px;font:normal 14px/1 'Liberation Mono',monospace;white-space:pre;color:#111;-webkit-text-stroke:0.25px #111;transform:scaleX(0.7440);transform-origin:0 0"> </div>
<div class="t" style="left:170.75px;top:489px;font:normal 14px/1 'Liberation Sans',sans-serif;white-space:pre;color:#111;-webkit-text-stroke:0.1px #111;transform:scale(0.8929,0.92);transform-origin:0 1px">오배수</div>
<div class="abs" style="left:89px;top:516px;width:9px;height:1px;background:#a0a0a0"></div>
<div class="t" style="left:102.00px;top:508px;font:normal 14px/1 'Liberation Sans',sans-serif;white-space:pre;color:#111;-webkit-text-stroke:0.1px #111;transform:scale(0.8929,0.92);transform-origin:0 1px">상부</div>
<div class="t" style="left:127.00px;top:508px;font:normal 14px/1 'Liberation Mono',monospace;white-space:pre;color:#111;-webkit-text-stroke:0.25px #111;transform:scaleX(0.7440);transform-origin:0 0"> </div>
<div class="t" style="left:133.25px;top:508px;font:normal 14px/1 'Liberation Sans',sans-serif;white-space:pre;color:#111;-webkit-text-stroke:0.1px #111;transform:scale(0.8929,0.92);transform-origin:0 1px">화장실</div>
<div class="t" style="left:170.75px;top:508px;font:normal 14px/1 'Liberation Mono',monospace;white-space:pre;color:#111;-webkit-text-stroke:0.25px #111;transform:scaleX(0.7440);transform-origin:0 0">(</div>
<div class="t" style="left:177.00px;top:508px;font:normal 14px/1 'Liberation Sans',sans-serif;white-space:pre;color:#111;-webkit-text-stroke:0.1px #111;transform:scale(0.8929,0.92);transform-origin:0 1px">계통도</div>
<div class="t" style="left:214.50px;top:508px;font:normal 14px/1 'Liberation Mono',monospace;white-space:pre;color:#111;-webkit-text-stroke:0.25px #111;transform:scaleX(0.7440);transform-origin:0 0">)</div>
<div class="abs" style="left:89px;top:535px;width:9px;height:1px;background:#a0a0a0"></div>
<div class="t" style="left:102.00px;top:527px;font:normal 14px/1 'Liberation Mono',monospace;white-space:pre;color:#111;-webkit-text-stroke:0.25px #111;transform:scaleX(0.7440);transform-origin:0 0">1</div>
<div class="t" style="left:108.25px;top:527px;font:normal 14px/1 'Liberation Sans',sans-serif;white-space:pre;color:#111;-webkit-text-stroke:0.1px #111;transform:scale(0.8929,0.92);transform-origin:0 1px">층</div>
<div class="t" style="left:120.75px;top:527px;font:normal 14px/1 'Liberation Mono',monospace;white-space:pre;color:#111;-webkit-text-stroke:0.25px #111;transform:scaleX(0.7440);transform-origin:0 0"> </div>
<div class="t" style="left:127.00px;top:527px;font:normal 14px/1 'Liberation Sans',sans-serif;white-space:pre;color:#111;-webkit-text-stroke:0.1px #111;transform:scale(0.8929,0.92);transform-origin:0 1px">화장실</div>
<div class="t" style="left:164.50px;top:527px;font:normal 14px/1 'Liberation Mono',monospace;white-space:pre;color:#111;-webkit-text-stroke:0.25px #111;transform:scaleX(0.7440);transform-origin:0 0"> </div>
<div class="t" style="left:170.75px;top:527px;font:normal 14px/1 'Liberation Sans',sans-serif;white-space:pre;color:#111;-webkit-text-stroke:0.1px #111;transform:scale(0.8929,0.92);transform-origin:0 1px">오배수</div>
<div class="t" style="left:208.25px;top:527px;font:normal 14px/1 'Liberation Mono',monospace;white-space:pre;color:#111;-webkit-text-stroke:0.25px #111;transform:scaleX(0.7440);transform-origin:0 0">(</div>
<div class="t" style="left:214.50px;top:527px;font:normal 14px/1 'Liberation Sans',sans-serif;white-space:pre;color:#111;-webkit-text-stroke:0.1px #111;transform:scale(0.8929,0.92);transform-origin:0 1px">상부</div>
<div class="t" style="left:239.50px;top:527px;font:normal 14px/1 'Liberation Mono',monospace;white-space:pre;color:#111;-webkit-text-stroke:0.25px #111;transform:scaleX(0.7440);transform-origin:0 0">)</div>
<div class="abs" style="left:89px;top:554px;width:9px;height:1px;background:#a0a0a0"></div>
<div class="t" style="left:102.00px;top:546px;font:normal 14px/1 'Liberation Mono',monospace;white-space:pre;color:#111;-webkit-text-stroke:0.25px #111;transform:scaleX(0.7440);transform-origin:0 0">2</div>
<div class="t" style="left:108.25px;top:546px;font:normal 14px/1 'Liberation Sans',sans-serif;white-space:pre;color:#111;-webkit-text-stroke:0.1px #111;transform:scale(0.8929,0.92);transform-origin:0 1px">층</div>
<div class="t" style="left:120.75px;top:546px;font:normal 14px/1 'Liberation Mono',monospace;white-space:pre;color:#111;-webkit-text-stroke:0.25px #111;transform:scaleX(0.7440);transform-origin:0 0"> </div>
<div class="t" style="left:127.00px;top:546px;font:normal 14px/1 'Liberation Sans',sans-serif;white-space:pre;color:#111;-webkit-text-stroke:0.1px #111;transform:scale(0.8929,0.92);transform-origin:0 1px">샤워실</div>
<div class="t" style="left:164.50px;top:546px;font:normal 14px/1 'Liberation Mono',monospace;white-space:pre;color:#111;-webkit-text-stroke:0.25px #111;transform:scaleX(0.7440);transform-origin:0 0"> </div>
<div class="t" style="left:170.75px;top:546px;font:normal 14px/1 'Liberation Sans',sans-serif;white-space:pre;color:#111;-webkit-text-stroke:0.1px #111;transform:scale(0.8929,0.92);transform-origin:0 1px">오배수</div>
<div class="t" style="left:208.25px;top:546px;font:normal 14px/1 'Liberation Mono',monospace;white-space:pre;color:#111;-webkit-text-stroke:0.25px #111;transform:scaleX(0.7440);transform-origin:0 0">(</div>
<div class="t" style="left:214.50px;top:546px;font:normal 14px/1 'Liberation Sans',sans-serif;white-space:pre;color:#111;-webkit-text-stroke:0.1px #111;transform:scale(0.8929,0.92);transform-origin:0 1px">상부</div>
<div class="t" style="left:239.50px;top:546px;font:normal 14px/1 'Liberation Mono',monospace;white-space:pre;color:#111;-webkit-text-stroke:0.25px #111;transform:scaleX(0.7440);transform-origin:0 0">)</div>
<div class="abs" style="left:89px;top:573px;width:9px;height:1px;background:#a0a0a0"></div>
<div class="t" style="left:102.00px;top:565px;font:normal 14px/1 'Liberation Mono',monospace;white-space:pre;color:#111;-webkit-text-stroke:0.25px #111;transform:scaleX(0.7440);transform-origin:0 0">2</div>
<div class="t" style="left:108.25px;top:565px;font:normal 14px/1 'Liberation Sans',sans-serif;white-space:pre;color:#111;-webkit-text-stroke:0.1px #111;transform:scale(0.8929,0.92);transform-origin:0 1px">층</div>
<div class="t" style="left:120.75px;top:565px;font:normal 14px/1 'Liberation Mono',monospace;white-space:pre;color:#111;-webkit-text-stroke:0.25px #111;transform:scaleX(0.7440);transform-origin:0 0"> </div>
<div class="t" style="left:127.00px;top:565px;font:normal 14px/1 'Liberation Sans',sans-serif;white-space:pre;color:#111;-webkit-text-stroke:0.1px #111;transform:scale(0.8929,0.92);transform-origin:0 1px">화장실</div>
<div class="t" style="left:164.50px;top:565px;font:normal 14px/1 'Liberation Mono',monospace;white-space:pre;color:#111;-webkit-text-stroke:0.25px #111;transform:scaleX(0.7440);transform-origin:0 0"> </div>
<div class="t" style="left:170.75px;top:565px;font:normal 14px/1 'Liberation Sans',sans-serif;white-space:pre;color:#111;-webkit-text-stroke:0.1px #111;transform:scale(0.8929,0.92);transform-origin:0 1px">오배수</div>
<div class="t" style="left:208.25px;top:565px;font:normal 14px/1 'Liberation Mono',monospace;white-space:pre;color:#111;-webkit-text-stroke:0.25px #111;transform:scaleX(0.7440);transform-origin:0 0">(</div>
<div class="t" style="left:214.50px;top:565px;font:normal 14px/1 'Liberation Sans',sans-serif;white-space:pre;color:#111;-webkit-text-stroke:0.1px #111;transform:scale(0.8929,0.92);transform-origin:0 1px">상부</div>
<div class="t" style="left:239.50px;top:565px;font:normal 14px/1 'Liberation Mono',monospace;white-space:pre;color:#111;-webkit-text-stroke:0.25px #111;transform:scaleX(0.7440);transform-origin:0 0">)</div>
<div class="abs" style="left:89px;top:592px;width:9px;height:1px;background:#a0a0a0"></div>
<div class="t" style="left:102.00px;top:584px;font:normal 14px/1 'Liberation Mono',monospace;white-space:pre;color:#111;-webkit-text-stroke:0.25px #111;transform:scaleX(0.7440);transform-origin:0 0">3</div>
<div class="t" style="left:108.25px;top:584px;font:normal 14px/1 'Liberation Sans',sans-serif;white-space:pre;color:#111;-webkit-text-stroke:0.1px #111;transform:scale(0.8929,0.92);transform-origin:0 1px">층</div>
<div class="t" style="left:120.75px;top:584px;font:normal 14px/1 'Liberation Mono',monospace;white-space:pre;color:#111;-webkit-text-stroke:0.25px #111;transform:scaleX(0.7440);transform-origin:0 0"> </div>
<div class="t" style="left:127.00px;top:584px;font:normal 14px/1 'Liberation Sans',sans-serif;white-space:pre;color:#111;-webkit-text-stroke:0.1px #111;transform:scale(0.8929,0.92);transform-origin:0 1px">화장실</div>
<div class="t" style="left:164.50px;top:584px;font:normal 14px/1 'Liberation Mono',monospace;white-space:pre;color:#111;-webkit-text-stroke:0.25px #111;transform:scaleX(0.7440);transform-origin:0 0"> </div>
<div class="t" style="left:170.75px;top:584px;font:normal 14px/1 'Liberation Sans',sans-serif;white-space:pre;color:#111;-webkit-text-stroke:0.1px #111;transform:scale(0.8929,0.92);transform-origin:0 1px">오배수</div>
<div class="t" style="left:208.25px;top:584px;font:normal 14px/1 'Liberation Mono',monospace;white-space:pre;color:#111;-webkit-text-stroke:0.25px #111;transform:scaleX(0.7440);transform-origin:0 0">(</div>
<div class="t" style="left:214.50px;top:584px;font:normal 14px/1 'Liberation Sans',sans-serif;white-space:pre;color:#111;-webkit-text-stroke:0.1px #111;transform:scale(0.8929,0.92);transform-origin:0 1px">상부</div>
<div class="t" style="left:239.50px;top:584px;font:normal 14px/1 'Liberation Mono',monospace;white-space:pre;color:#111;-webkit-text-stroke:0.25px #111;transform:scaleX(0.7440);transform-origin:0 0">)</div>
<div class="abs" style="left:89px;top:611px;width:9px;height:1px;background:#a0a0a0"></div>
<div class="t" style="left:102.00px;top:603px;font:normal 14px/1 'Liberation Sans',sans-serif;white-space:pre;color:#111;-webkit-text-stroke:0.1px #111;transform:scale(0.8929,0.92);transform-origin:0 1px">하부</div>
<div class="t" style="left:127.00px;top:603px;font:normal 14px/1 'Liberation Mono',monospace;white-space:pre;color:#111;-webkit-text-stroke:0.25px #111;transform:scaleX(0.7440);transform-origin:0 0"> </div>
<div class="t" style="left:133.25px;top:603px;font:normal 14px/1 'Liberation Sans',sans-serif;white-space:pre;color:#111;-webkit-text-stroke:0.1px #111;transform:scale(0.8929,0.92);transform-origin:0 1px">화장실</div>
<div class="t" style="left:170.75px;top:603px;font:normal 14px/1 'Liberation Mono',monospace;white-space:pre;color:#111;-webkit-text-stroke:0.25px #111;transform:scaleX(0.7440);transform-origin:0 0">(</div>
<div class="t" style="left:177.00px;top:603px;font:normal 14px/1 'Liberation Sans',sans-serif;white-space:pre;color:#111;-webkit-text-stroke:0.1px #111;transform:scale(0.8929,0.92);transform-origin:0 1px">계통도</div>
<div class="t" style="left:214.50px;top:603px;font:normal 14px/1 'Liberation Mono',monospace;white-space:pre;color:#111;-webkit-text-stroke:0.25px #111;transform:scaleX(0.7440);transform-origin:0 0">)</div>
<div class="abs" style="left:89px;top:630px;width:9px;height:1px;background:#a0a0a0"></div>
<div class="abs" style="left:98px;top:620px;width:152px;height:20px;border:1px solid #ecc870;border-radius:3px;background:linear-gradient(#fff5c4,#fbd86c)"></div>
<div class="t" style="left:102.00px;top:622px;font:normal 14px/1 'Liberation Mono',monospace;white-space:pre;color:#111;-webkit-text-stroke:0.25px #111;transform:scaleX(0.7440);transform-origin:0 0">4</div>
<div class="t" style="left:108.25px;top:622px;font:normal 14px/1 'Liberation Sans',sans-serif;white-space:pre;color:#111;-webkit-text-stroke:0.1px #111;transform:scale(0.8929,0.92);transform-origin:0 1px">층</div>
<div class="t" style="left:120.75px;top:622px;font:normal 14px/1 'Liberation Mono',monospace;white-space:pre;color:#111;-webkit-text-stroke:0.25px #111;transform:scaleX(0.7440);transform-origin:0 0"> </div>
<div class="t" style="left:127.00px;top:622px;font:normal 14px/1 'Liberation Sans',sans-serif;white-space:pre;color:#111;-webkit-text-stroke:0.1px #111;transform:scale(0.8929,0.92);transform-origin:0 1px">화장실</div>
<div class="t" style="left:164.50px;top:622px;font:normal 14px/1 'Liberation Mono',monospace;white-space:pre;color:#111;-webkit-text-stroke:0.25px #111;transform:scaleX(0.7440);transform-origin:0 0"> </div>
<div class="t" style="left:170.75px;top:622px;font:normal 14px/1 'Liberation Sans',sans-serif;white-space:pre;color:#111;-webkit-text-stroke:0.1px #111;transform:scale(0.8929,0.92);transform-origin:0 1px">오배수</div>
<div class="t" style="left:208.25px;top:622px;font:normal 14px/1 'Liberation Mono',monospace;white-space:pre;color:#111;-webkit-text-stroke:0.25px #111;transform:scaleX(0.7440);transform-origin:0 0">(</div>
<div class="t" style="left:214.50px;top:622px;font:normal 14px/1 'Liberation Sans',sans-serif;white-space:pre;color:#111;-webkit-text-stroke:0.1px #111;transform:scale(0.8929,0.92);transform-origin:0 1px">상부</div>
<div class="t" style="left:239.50px;top:622px;font:normal 14px/1 'Liberation Mono',monospace;white-space:pre;color:#111;-webkit-text-stroke:0.25px #111;transform:scaleX(0.7440);transform-origin:0 0">)</div>
<div class="abs" style="left:89px;top:649px;width:9px;height:1px;background:#a0a0a0"></div>
<div class="t" style="left:102.00px;top:641px;font:normal 14px/1 'Liberation Mono',monospace;white-space:pre;color:#111;-webkit-text-stroke:0.25px #111;transform:scaleX(0.7440);transform-origin:0 0">1</div>
<div class="t" style="left:108.25px;top:641px;font:normal 14px/1 'Liberation Sans',sans-serif;white-space:pre;color:#111;-webkit-text-stroke:0.1px #111;transform:scale(0.8929,0.92);transform-origin:0 1px">층</div>
<div class="t" style="left:120.75px;top:641px;font:normal 14px/1 'Liberation Mono',monospace;white-space:pre;color:#111;-webkit-text-stroke:0.25px #111;transform:scaleX(0.7440);transform-origin:0 0"> </div>
<div class="t" style="left:127.00px;top:641px;font:normal 14px/1 'Liberation Sans',sans-serif;white-space:pre;color:#111;-webkit-text-stroke:0.1px #111;transform:scale(0.8929,0.92);transform-origin:0 1px">화장실</div>
<div class="t" style="left:164.50px;top:641px;font:normal 14px/1 'Liberation Mono',monospace;white-space:pre;color:#111;-webkit-text-stroke:0.25px #111;transform:scaleX(0.7440);transform-origin:0 0"> </div>
<div class="t" style="left:170.75px;top:641px;font:normal 14px/1 'Liberation Sans',sans-serif;white-space:pre;color:#111;-webkit-text-stroke:0.1px #111;transform:scale(0.8929,0.92);transform-origin:0 1px">오배수</div>
<div class="t" style="left:208.25px;top:641px;font:normal 14px/1 'Liberation Mono',monospace;white-space:pre;color:#111;-webkit-text-stroke:0.25px #111;transform:scaleX(0.7440);transform-origin:0 0">(</div>
<div class="t" style="left:214.50px;top:641px;font:normal 14px/1 'Liberation Sans',sans-serif;white-space:pre;color:#111;-webkit-text-stroke:0.1px #111;transform:scale(0.8929,0.92);transform-origin:0 1px">하부</div>
<div class="t" style="left:239.50px;top:641px;font:normal 14px/1 'Liberation Mono',monospace;white-space:pre;color:#111;-webkit-text-stroke:0.25px #111;transform:scaleX(0.7440);transform-origin:0 0">)</div>
<div class="abs" style="left:89px;top:668px;width:9px;height:1px;background:#a0a0a0"></div>
<div class="t" style="left:102.00px;top:660px;font:normal 14px/1 'Liberation Mono',monospace;white-space:pre;color:#111;-webkit-text-stroke:0.25px #111;transform:scaleX(0.7440);transform-origin:0 0">2</div>
<div class="t" style="left:108.25px;top:660px;font:normal 14px/1 'Liberation Sans',sans-serif;white-space:pre;color:#111;-webkit-text-stroke:0.1px #111;transform:scale(0.8929,0.92);transform-origin:0 1px">층</div>
<div class="t" style="left:120.75px;top:660px;font:normal 14px/1 'Liberation Mono',monospace;white-space:pre;color:#111;-webkit-text-stroke:0.25px #111;transform:scaleX(0.7440);transform-origin:0 0"> </div>
<div class="t" style="left:127.00px;top:660px;font:normal 14px/1 'Liberation Sans',sans-serif;white-space:pre;color:#111;-webkit-text-stroke:0.1px #111;transform:scale(0.8929,0.92);transform-origin:0 1px">화장실</div>
<div class="t" style="left:164.50px;top:660px;font:normal 14px/1 'Liberation Mono',monospace;white-space:pre;color:#111;-webkit-text-stroke:0.25px #111;transform:scaleX(0.7440);transform-origin:0 0"> </div>
<div class="t" style="left:170.75px;top:660px;font:normal 14px/1 'Liberation Sans',sans-serif;white-space:pre;color:#111;-webkit-text-stroke:0.1px #111;transform:scale(0.8929,0.92);transform-origin:0 1px">오배수</div>
<div class="t" style="left:208.25px;top:660px;font:normal 14px/1 'Liberation Mono',monospace;white-space:pre;color:#111;-webkit-text-stroke:0.25px #111;transform:scaleX(0.7440);transform-origin:0 0">(</div>
<div class="t" style="left:214.50px;top:660px;font:normal 14px/1 'Liberation Sans',sans-serif;white-space:pre;color:#111;-webkit-text-stroke:0.1px #111;transform:scale(0.8929,0.92);transform-origin:0 1px">하부</div>
<div class="t" style="left:239.50px;top:660px;font:normal 14px/1 'Liberation Mono',monospace;white-space:pre;color:#111;-webkit-text-stroke:0.25px #111;transform:scaleX(0.7440);transform-origin:0 0">)</div>
<div class="abs" style="left:89px;top:687px;width:9px;height:1px;background:#a0a0a0"></div>
<div class="t" style="left:102.00px;top:679px;font:normal 14px/1 'Liberation Mono',monospace;white-space:pre;color:#111;-webkit-text-stroke:0.25px #111;transform:scaleX(0.7440);transform-origin:0 0">3</div>
<div class="t" style="left:108.25px;top:679px;font:normal 14px/1 'Liberation Sans',sans-serif;white-space:pre;color:#111;-webkit-text-stroke:0.1px #111;transform:scale(0.8929,0.92);transform-origin:0 1px">층</div>
<div class="t" style="left:120.75px;top:679px;font:normal 14px/1 'Liberation Mono',monospace;white-space:pre;color:#111;-webkit-text-stroke:0.25px #111;transform:scaleX(0.7440);transform-origin:0 0"> </div>
<div class="t" style="left:127.00px;top:679px;font:normal 14px/1 'Liberation Sans',sans-serif;white-space:pre;color:#111;-webkit-text-stroke:0.1px #111;transform:scale(0.8929,0.92);transform-origin:0 1px">화장실</div>
<div class="t" style="left:164.50px;top:679px;font:normal 14px/1 'Liberation Mono',monospace;white-space:pre;color:#111;-webkit-text-stroke:0.25px #111;transform:scaleX(0.7440);transform-origin:0 0"> </div>
<div class="t" style="left:170.75px;top:679px;font:normal 14px/1 'Liberation Sans',sans-serif;white-space:pre;color:#111;-webkit-text-stroke:0.1px #111;transform:scale(0.8929,0.92);transform-origin:0 1px">오배수</div>
<div class="t" style="left:208.25px;top:679px;font:normal 14px/1 'Liberation Mono',monospace;white-space:pre;color:#111;-webkit-text-stroke:0.25px #111;transform:scaleX(0.7440);transform-origin:0 0">(</div>
<div class="t" style="left:214.50px;top:679px;font:normal 14px/1 'Liberation Sans',sans-serif;white-space:pre;color:#111;-webkit-text-stroke:0.1px #111;transform:scale(0.8929,0.92);transform-origin:0 1px">하부</div>
<div class="t" style="left:239.50px;top:679px;font:normal 14px/1 'Liberation Mono',monospace;white-space:pre;color:#111;-webkit-text-stroke:0.25px #111;transform:scaleX(0.7440);transform-origin:0 0">)</div>
<div class="abs" style="left:89px;top:706px;width:9px;height:1px;background:#a0a0a0"></div>
<div class="t" style="left:102.00px;top:698px;font:normal 14px/1 'Liberation Mono',monospace;white-space:pre;color:#111;-webkit-text-stroke:0.25px #111;transform:scaleX(0.7440);transform-origin:0 0">4</div>
<div class="t" style="left:108.25px;top:698px;font:normal 14px/1 'Liberation Sans',sans-serif;white-space:pre;color:#111;-webkit-text-stroke:0.1px #111;transform:scale(0.8929,0.92);transform-origin:0 1px">층</div>
<div class="t" style="left:120.75px;top:698px;font:normal 14px/1 'Liberation Mono',monospace;white-space:pre;color:#111;-webkit-text-stroke:0.25px #111;transform:scaleX(0.7440);transform-origin:0 0"> </div>
<div class="t" style="left:127.00px;top:698px;font:normal 14px/1 'Liberation Sans',sans-serif;white-space:pre;color:#111;-webkit-text-stroke:0.1px #111;transform:scale(0.8929,0.92);transform-origin:0 1px">화장실</div>
<div class="t" style="left:164.50px;top:698px;font:normal 14px/1 'Liberation Mono',monospace;white-space:pre;color:#111;-webkit-text-stroke:0.25px #111;transform:scaleX(0.7440);transform-origin:0 0"> </div>
<div class="t" style="left:170.75px;top:698px;font:normal 14px/1 'Liberation Sans',sans-serif;white-space:pre;color:#111;-webkit-text-stroke:0.1px #111;transform:scale(0.8929,0.92);transform-origin:0 1px">오배수</div>
<div class="t" style="left:208.25px;top:698px;font:normal 14px/1 'Liberation Mono',monospace;white-space:pre;color:#111;-webkit-text-stroke:0.25px #111;transform:scaleX(0.7440);transform-origin:0 0">(</div>
<div class="t" style="left:214.50px;top:698px;font:normal 14px/1 'Liberation Sans',sans-serif;white-space:pre;color:#111;-webkit-text-stroke:0.1px #111;transform:scale(0.8929,0.92);transform-origin:0 1px">하부</div>
<div class="t" style="left:239.50px;top:698px;font:normal 14px/1 'Liberation Mono',monospace;white-space:pre;color:#111;-webkit-text-stroke:0.25px #111;transform:scaleX(0.7440);transform-origin:0 0">)</div>
<div class="abs" style="left:61px;top:725px;width:6px;height:1px;background:#a0a0a0"></div>
<div class="abs" style="left:52px;top:721px;width:9px;height:9px;border:1px solid #a8a8a8;border-radius:1px;background:#fff"></div>
<div class="abs" style="left:54px;top:725px;width:5px;height:1px;background:#222"></div>
<div class="abs" style="left:56px;top:723px;width:1px;height:5px;background:#222"></div>
<div class="t" style="left:71.00px;top:717px;font:normal 14px/1 'Liberation Sans',sans-serif;white-space:pre;color:#111;-webkit-text-stroke:0.1px #111;transform:scale(0.8929,0.92);transform-origin:0 1px">환기</div>
<div class="t" style="left:96.00px;top:717px;font:normal 14px/1 'Liberation Mono',monospace;white-space:pre;color:#111;-webkit-text-stroke:0.25px #111;transform:scaleX(0.7440);transform-origin:0 0"> </div>
<div class="t" style="left:102.25px;top:717px;font:normal 14px/1 'Liberation Sans',sans-serif;white-space:pre;color:#111;-webkit-text-stroke:0.1px #111;transform:scale(0.8929,0.92);transform-origin:0 1px">덕트공사</div>
<div class="abs" style="left:61px;top:744px;width:6px;height:1px;background:#a0a0a0"></div>
<div class="abs" style="left:52px;top:740px;width:9px;height:9px;border:1px solid #a8a8a8;border-radius:1px;background:#fff"></div>
<div class="abs" style="left:54px;top:744px;width:5px;height:1px;background:#222"></div>
<div class="abs" style="left:56px;top:742px;width:1px;height:5px;background:#222"></div>
<div class="t" style="left:71.00px;top:736px;font:normal 14px/1 'Liberation Sans',sans-serif;white-space:pre;color:#111;-webkit-text-stroke:0.1px #111;transform:scale(0.8929,0.92);transform-origin:0 1px">난방공사</div>
<div class="abs" style="left:61px;top:763px;width:6px;height:1px;background:#a0a0a0"></div>
<div class="abs" style="left:52px;top:759px;width:9px;height:9px;border:1px solid #a8a8a8;border-radius:1px;background:#fff"></div>
<div class="abs" style="left:54px;top:763px;width:5px;height:1px;background:#222"></div>
<div class="abs" style="left:56px;top:761px;width:1px;height:5px;background:#222"></div>
<div class="t" style="left:71.00px;top:755px;font:normal 14px/1 'Liberation Sans',sans-serif;white-space:pre;color:#111;-webkit-text-stroke:0.1px #111;transform:scale(0.8929,0.92);transform-origin:0 1px">급식실</div>
<div class="t" style="left:108.50px;top:755px;font:normal 14px/1 'Liberation Mono',monospace;white-space:pre;color:#111;-webkit-text-stroke:0.25px #111;transform:scaleX(0.7440);transform-origin:0 0"> </div>
<div class="t" style="left:114.75px;top:755px;font:normal 14px/1 'Liberation Sans',sans-serif;white-space:pre;color:#111;-webkit-text-stroke:0.1px #111;transform:scale(0.8929,0.92);transform-origin:0 1px">배관공사</div>
<div class="abs" style="left:61px;top:782px;width:6px;height:1px;background:#a0a0a0"></div>
<div class="abs" style="left:52px;top:778px;width:9px;height:9px;border:1px solid #a8a8a8;border-radius:1px;background:#fff"></div>
<div class="abs" style="left:54px;top:782px;width:5px;height:1px;background:#222"></div>
<div class="abs" style="left:56px;top:780px;width:1px;height:5px;background:#222"></div>
<div class="t" style="left:71.00px;top:774px;font:normal 14px/1 'Liberation Sans',sans-serif;white-space:pre;color:#111;-webkit-text-stroke:0.1px #111;transform:scale(0.8929,0.92);transform-origin:0 1px">유치원</div>
<div class="t" style="left:108.50px;top:774px;font:normal 14px/1 'Liberation Mono',monospace;white-space:pre;color:#111;-webkit-text-stroke:0.25px #111;transform:scaleX(0.7440);transform-origin:0 0"> </div>
<div class="t" style="left:114.75px;top:774px;font:normal 14px/1 'Liberation Sans',sans-serif;white-space:pre;color:#111;-webkit-text-stroke:0.1px #111;transform:scale(0.8929,0.92);transform-origin:0 1px">배관공사</div>
<div class="abs" style="left:61px;top:801px;width:6px;height:1px;background:#a0a0a0"></div>
<div class="abs" style="left:52px;top:797px;width:9px;height:9px;border:1px solid #a8a8a8;border-radius:1px;background:#fff"></div>
<div class="abs" style="left:54px;top:801px;width:5px;height:1px;background:#222"></div>
<div class="abs" style="left:56px;top:799px;width:1px;height:5px;background:#222"></div>
<div class="t" style="left:71.00px;top:793px;font:normal 14px/1 'Liberation Sans',sans-serif;white-space:pre;color:#111;-webkit-text-stroke:0.1px #111;transform:scale(0.8929,0.92);transform-origin:0 1px">가스배관공사</div>
<div class="abs" style="left:61px;top:820px;width:6px;height:1px;background:#a0a0a0"></div>
<div class="abs" style="left:52px;top:816px;width:9px;height:9px;border:1px solid #a8a8a8;border-radius:1px;background:#fff"></div>
<div class="abs" style="left:54px;top:820px;width:5px;height:1px;background:#222"></div>
<div class="abs" style="left:56px;top:818px;width:1px;height:5px;background:#222"></div>
<div class="t" style="left:71.00px;top:812px;font:normal 14px/1 'Liberation Sans',sans-serif;white-space:pre;color:#111;-webkit-text-stroke:0.1px #111;transform:scale(0.8929,0.92);transform-origin:0 1px">우수배관공사</div>
<div class="abs" style="left:61px;top:839px;width:6px;height:1px;background:#a0a0a0"></div>
<div class="abs" style="left:52px;top:835px;width:9px;height:9px;border:1px solid #a8a8a8;border-radius:1px;background:#fff"></div>
<div class="abs" style="left:54px;top:839px;width:5px;height:1px;background:#222"></div>
<div class="abs" style="left:56px;top:837px;width:1px;height:5px;background:#222"></div>
<div class="t" style="left:71.00px;top:831px;font:normal 14px/1 'Liberation Sans',sans-serif;white-space:pre;color:#111;-webkit-text-stroke:0.1px #111;transform:scale(0.8929,0.92);transform-origin:0 1px">자동제어공사</div>
<div class="abs" style="left:45px;top:858px;width:6px;height:1px;background:#a0a0a0"></div>
<div class="abs" style="left:36px;top:854px;width:9px;height:9px;border:1px solid #a8a8a8;border-radius:1px;background:#fff"></div>
<div class="abs" style="left:38px;top:858px;width:5px;height:1px;background:#222"></div>
<div class="abs" style="left:40px;top:856px;width:1px;height:5px;background:#222"></div>
<div class="t" style="left:55.00px;top:850px;font:normal 14px/1 'Liberation Sans',sans-serif;white-space:pre;color:#111;-webkit-text-stroke:0.1px #111;transform:scale(0.8929,0.92);transform-origin:0 1px">관급자재</div>
<div id="split"></div>
<div id="tabstrip"></div>
<div class="abs" style="left:265px;top:125px;width:66px;height:20px;background:linear-gradient(#f2f2f2,#e8e8e8);border:1px solid #a0a0a0;border-bottom:none"></div>
<div class="abs" style="left:331px;top:122px;width:83px;height:23px;background:#ffffff;border:none;border-bottom:none"></div>
<div class="abs" style="left:415px;top:125px;width:77px;height:20px;background:linear-gradient(#f2f2f2,#e8e8e8);border:1px solid #a0a0a0;border-bottom:none"></div>
<div class="abs" style="left:493px;top:125px;width:93px;height:20px;background:linear-gradient(#f2f2f2,#e8e8e8);border:1px solid #a0a0a0;border-bottom:none"></div>
<div class="t" style="left:274px;top:127px;font-size:13px;color:#1a1a1a;font-weight:normal;">공</div>
<div class="t" style="left:311px;top:127px;font-size:13px;color:#1a1a1a;font-weight:normal;">종</div>
<div class="t" style="left:341px;top:125px;font-size:13px;color:#111;font-weight:normal;-webkit-text-stroke:0.3px #111">배</div>
<div class="t" style="left:358px;top:125px;font-size:13px;color:#111;font-weight:normal;-webkit-text-stroke:0.3px #111">관</div>
<div class="t" style="left:374px;top:125px;font-size:13px;color:#111;font-weight:normal;-webkit-text-stroke:0.3px #111">산</div>
<div class="t" style="left:390px;top:125px;font-size:13px;color:#111;font-weight:normal;-webkit-text-stroke:0.3px #111">출</div>
<div class="t" style="left:421px;top:127px;font-size:13px;color:#1a1a1a;font-weight:normal;">닥</div>
<div class="t" style="left:437px;top:127px;font-size:13px;color:#1a1a1a;font-weight:normal;">트</div>
<div class="t" style="left:453px;top:127px;font-size:13px;color:#1a1a1a;font-weight:normal;">산</div>
<div class="t" style="left:469px;top:127px;font-size:13px;color:#1a1a1a;font-weight:normal;">출</div>
<div class="t" style="left:500px;top:127px;font-size:13px;color:#1a1a1a;font-weight:normal;">닥</div>
<div class="t" style="left:516px;top:127px;font-size:13px;color:#1a1a1a;font-weight:normal;">트</div>
<div class="t" style="left:532px;top:127px;font-size:13px;color:#1a1a1a;font-weight:normal;">기</div>
<div class="t" style="left:548px;top:127px;font-size:13px;color:#1a1a1a;font-weight:normal;">구</div>
<div class="t" style="left:564px;top:127px;font-size:13px;color:#1a1a1a;font-weight:normal;">류</div>
<div class="cb" style="left:600px;top:127px;border-color:#909090"></div>
<div class="t" style="left:618px;top:126px;font-size:13px;color:#e6e6e6;font-weight:normal;">탭 고정</div>
<div class="abs" style="left:264px;top:142px;width:1298px;height:1px;background:#9c9c9c"></div><div class="abs" style="left:264px;top:143px;width:1298px;height:2px;background:#f2f2f2"></div>
<div id="gridpanel"></div>
<div id="gridbg"></div>
<div class="abs" style="left:267px;top:145px;width:1131px;height:568px;overflow:hidden">
<div class="abs" style="left:0;top:0;width:1131px;height:21px;background:#6495ed;border-bottom:1px solid #d0c0d0"></div>
<div class="abs" style="left:12px;top:0;width:1px;height:21px;background:#9cbcf4"></div>
<div class="abs" style="left:122px;top:0;width:1px;height:21px;background:#9cbcf4"></div>
<div class="t" style="left:43.00px;top:4px;font:bold 14px/1 'Liberation Sans',sans-serif;white-space:pre;color:#fff;-webkit-text-stroke:0.1px #fff;transform:scale(0.8929,0.92);transform-origin:0 1px">코</div>
<div class="t" style="left:55.50px;top:4px;font:bold 14px/1 'Liberation Mono',monospace;white-space:pre;color:#fff;-webkit-text-stroke:0.25px #fff;transform:scaleX(0.7440);transform-origin:0 0">    </div>
<div class="t" style="left:80.50px;top:4px;font:bold 14px/1 'Liberation Sans',sans-serif;white-space:pre;color:#fff;-webkit-text-stroke:0.1px #fff;transform:scale(0.8929,0.92);transform-origin:0 1px">드</div>
<div class="abs" style="left:390px;top:0;width:1px;height:21px;background:#9cbcf4"></div>
<div class="t" style="left:213.25px;top:4px;font:bold 14px/1 'Liberation Sans',sans-serif;white-space:pre;color:#fff;-webkit-text-stroke:0.1px #fff;transform:scale(0.8929,0.92);transform-origin:0 1px">품</div>
<div class="t" style="left:225.75px;top:4px;font:bold 14px/1 'Liberation Mono',monospace;white-space:pre;color:#fff;-webkit-text-stroke:0.25px #fff;transform:scaleX(0.7440);transform-origin:0 0">          </div>
<div class="t" style="left:288.25px;top:4px;font:bold 14px/1 'Liberation Sans',sans-serif;white-space:pre;color:#fff;-webkit-text-stroke:0.1px #fff;transform:scale(0.8929,0.92);transform-origin:0 1px">명</div>
<div class="abs" style="left:570px;top:0;width:1px;height:21px;background:#9cbcf4"></div>
<div class="t" style="left:437.25px;top:4px;font:bold 14px/1 'Liberation Sans',sans-serif;white-space:pre;color:#fff;-webkit-text-stroke:0.1px #fff;transform:scale(0.8929,0.92);transform-origin:0 1px">규</div>
<div class="t" style="left:449.75px;top:4px;font:bold 14px/1 'Liberation Mono',monospace;white-space:pre;color:#fff;-webkit-text-stroke:0.25px #fff;transform:scaleX(0.7440);transform-origin:0 0">          </div>
<div class="t" style="left:512.25px;top:4px;font:bold 14px/1 'Liberation Sans',sans-serif;white-space:pre;color:#fff;-webkit-text-stroke:0.1px #fff;transform:scale(0.8929,0.92);transform-origin:0 1px">격</div>
<div class="abs" style="left:630px;top:0;width:1px;height:21px;background:#9cbcf4"></div>
<div class="t" style="left:582.25px;top:4px;font:bold 14px/1 'Liberation Sans',sans-serif;white-space:pre;color:#fff;-webkit-text-stroke:0.1px #fff;transform:scale(0.8929,0.92);transform-origin:0 1px">단</div>
<div class="t" style="left:594.75px;top:4px;font:bold 14px/1 'Liberation Mono',monospace;white-space:pre;color:#fff;-webkit-text-stroke:0.25px #fff;transform:scaleX(0.7440);transform-origin:0 0">  </div>
<div class="t" style="left:607.25px;top:4px;font:bold 14px/1 'Liberation Sans',sans-serif;white-space:pre;color:#fff;-webkit-text-stroke:0.1px #fff;transform:scale(0.8929,0.92);transform-origin:0 1px">위</div>
<div class="abs" style="left:690px;top:0;width:1px;height:21px;background:#9cbcf4"></div>
<div class="t" style="left:642.25px;top:4px;font:bold 14px/1 'Liberation Sans',sans-serif;white-space:pre;color:#fff;-webkit-text-stroke:0.1px #fff;transform:scale(0.8929,0.92);transform-origin:0 1px">보온재</div>
<div class="abs" style="left:750px;top:0;width:1px;height:21px;background:#9cbcf4"></div>
<div class="t" style="left:702.25px;top:4px;font:bold 14px/1 'Liberation Sans',sans-serif;white-space:pre;color:#fff;-webkit-text-stroke:0.1px #fff;transform:scale(0.8929,0.92);transform-origin:0 1px">수</div>
<div class="t" style="left:714.75px;top:4px;font:bold 14px/1 'Liberation Mono',monospace;white-space:pre;color:#fff;-webkit-text-stroke:0.25px #fff;transform:scaleX(0.7440);transform-origin:0 0">  </div>
<div class="t" style="left:727.25px;top:4px;font:bold 14px/1 'Liberation Sans',sans-serif;white-space:pre;color:#fff;-webkit-text-stroke:0.1px #fff;transform:scale(0.8929,0.92);transform-origin:0 1px">량</div>
<div class="abs" style="left:930px;top:0;width:1px;height:21px;background:#9cbcf4"></div>
<div class="t" style="left:784.75px;top:4px;font:bold 14px/1 'Liberation Sans',sans-serif;white-space:pre;color:#fff;-webkit-text-stroke:0.1px #fff;transform:scale(0.8929,0.92);transform-origin:0 1px">산</div>
<div class="t" style="left:797.25px;top:4px;font:bold 14px/1 'Liberation Mono',monospace;white-space:pre;color:#fff;-webkit-text-stroke:0.25px #fff;transform:scaleX(0.7440);transform-origin:0 0">      </div>
<div class="t" style="left:834.75px;top:4px;font:bold 14px/1 'Liberation Sans',sans-serif;white-space:pre;color:#fff;-webkit-text-stroke:0.1px #fff;transform:scale(0.8929,0.92);transform-origin:0 1px">출</div>
<div class="t" style="left:847.25px;top:4px;font:bold 14px/1 'Liberation Mono',monospace;white-space:pre;color:#fff;-webkit-text-stroke:0.25px #fff;transform:scaleX(0.7440);transform-origin:0 0">      </div>
<div class="t" style="left:884.75px;top:4px;font:bold 14px/1 'Liberation Sans',sans-serif;white-space:pre;color:#fff;-webkit-text-stroke:0.1px #fff;transform:scale(0.8929,0.92);transform-origin:0 1px">식</div>
<div class="abs" style="left:990px;top:0;width:1px;height:21px;background:#9cbcf4"></div>
<div class="t" style="left:936.00px;top:4px;font:bold 14px/1 'Liberation Sans',sans-serif;white-space:pre;color:#fff;-webkit-text-stroke:0.1px #fff;transform:scale(0.8929,0.92);transform-origin:0 1px">노임할증</div>
<div class="abs" style="left:1010px;top:0;width:1px;height:21px;background:#9cbcf4"></div>
<div class="t" style="left:997.88px;top:4px;font:bold 14px/1 'Liberation Mono',monospace;white-space:pre;color:#fff;-webkit-text-stroke:0.25px #fff;transform:scaleX(0.7440);transform-origin:0 0">D</div>
<div class="abs" style="left:1130px;top:0;width:1px;height:21px;background:#9cbcf4"></div>
<div class="t" style="left:1039.75px;top:4px;font:bold 14px/1 'Liberation Sans',sans-serif;white-space:pre;color:#fff;-webkit-text-stroke:0.1px #fff;transform:scale(0.8929,0.92);transform-origin:0 1px">비</div>
<div class="t" style="left:1052.25px;top:4px;font:bold 14px/1 'Liberation Mono',monospace;white-space:pre;color:#fff;-webkit-text-stroke:0.25px #fff;transform:scaleX(0.7440);transform-origin:0 0">      </div>
<div class="t" style="left:1089.75px;top:4px;font:bold 14px/1 'Liberation Sans',sans-serif;white-space:pre;color:#fff;-webkit-text-stroke:0.1px #fff;transform:scale(0.8929,0.92);transform-origin:0 1px">고</div>
<div class="abs" style="left:0;top:21px;width:13px;height:19px;background:#6495ed;border-bottom:1px solid #9cbcf4;border-right:1px solid #9cbcf4"></div>
<div class="abs" style="left:13px;top:21px;width:1118px;height:19px;background:#f08080;border-bottom:1px solid #e0b0b0"></div>
<div class="abs" style="left:122px;top:21px;width:1px;height:19px;background:#e0b0b0"></div>
<div class="abs" style="left:390px;top:21px;width:1px;height:19px;background:#e0b0b0"></div>
<div class="abs" style="left:570px;top:21px;width:1px;height:19px;background:#e0b0b0"></div>
<div class="abs" style="left:630px;top:21px;width:1px;height:19px;background:#e0b0b0"></div>
<div class="abs" style="left:690px;top:21px;width:1px;height:19px;background:#e0b0b0"></div>
<div class="abs" style="left:750px;top:21px;width:1px;height:19px;background:#e0b0b0"></div>
<div class="abs" style="left:930px;top:21px;width:1px;height:19px;background:#e0b0b0"></div>
<div class="abs" style="left:990px;top:21px;width:1px;height:19px;background:#e0b0b0"></div>
<div class="abs" style="left:1010px;top:21px;width:1px;height:19px;background:#e0b0b0"></div>
<div class="abs" style="left:1130px;top:21px;width:1px;height:19px;background:#e0b0b0"></div>
<div class="abs" style="left:13px;top:21px;width:109px;height:18px;overflow:hidden">
<div class="t" style="left:2.00px;top:3px;font:normal 14px/1 'Liberation Mono',monospace;white-space:pre;color:#2a0505;-webkit-text-stroke:0.25px #2a0505;transform:scaleX(0.7440);transform-origin:0 0">ZZZZ-ZZZ-ZZZZ</div>
</div>
<div class="abs" style="left:123px;top:21px;width:267px;height:18px;overflow:hidden">
<div class="t" style="left:2.00px;top:3px;font:normal 14px/1 'Liberation Sans',sans-serif;white-space:pre;color:#2a0505;-webkit-text-stroke:0.1px #2a0505;transform:scale(0.8929,0.92);transform-origin:0 1px">오수배관</div>
</div>
<div class="abs" style="left:571px;top:21px;width:59px;height:18px;overflow:hidden">
<div class="t" style="left:2.00px;top:3px;font:normal 14px/1 'Liberation Sans',sans-serif;white-space:pre;color:#2a0505;-webkit-text-stroke:0.1px #2a0505;transform:scale(0.8929,0.92);transform-origin:0 1px">개소</div>
</div>
<div class="abs" style="left:691px;top:21px;width:59px;height:18px;overflow:hidden">
<div class="t" style="left:51.75px;top:3px;font:normal 14px/1 'Liberation Mono',monospace;white-space:pre;color:#2a0505;-webkit-text-stroke:0.25px #2a0505;transform:scaleX(0.7440);transform-origin:0 0">0</div>
</div>
<div class="abs" style="left:931px;top:21px;width:59px;height:18px;overflow:hidden">
<div class="t" style="left:51.75px;top:3px;font:normal 14px/1 'Liberation Mono',monospace;white-space:pre;color:#2a0505;-webkit-text-stroke:0.25px #2a0505;transform:scaleX(0.7440);transform-origin:0 0">0</div>
</div>
<div class="abs" style="left:995px;top:24px;width:13px;height:13px;border:1px solid #888;background:#fff"></div>
<svg class="abs" style="left:997px;top:26px" width="9" height="9" viewBox="0 0 9 9"><path d="M1 4.5 L3.5 7.5 L8 1" stroke="#000" stroke-width="1.8" fill="none"/></svg>
<div class="abs" style="left:0;top:40px;width:13px;height:19px;background:#6495ed;border-bottom:1px solid #9cbcf4;border-right:1px solid #9cbcf4"></div>
<div class="abs" style="left:2px;top:47px;width:4px;height:4px;background:#fff"></div>
<div class="abs" style="left:13px;top:40px;width:1118px;height:19px;background:#f08080;border-bottom:1px solid #e0b0b0"></div>
<div class="abs" style="left:122px;top:40px;width:1px;height:19px;background:#e0b0b0"></div>
<div class="abs" style="left:390px;top:40px;width:1px;height:19px;background:#e0b0b0"></div>
<div class="abs" style="left:570px;top:40px;width:1px;height:19px;background:#e0b0b0"></div>
<div class="abs" style="left:630px;top:40px;width:1px;height:19px;background:#e0b0b0"></div>
<div class="abs" style="left:690px;top:40px;width:1px;height:19px;background:#e0b0b0"></div>
<div class="abs" style="left:750px;top:40px;width:1px;height:19px;background:#e0b0b0"></div>
<div class="abs" style="left:930px;top:40px;width:1px;height:19px;background:#e0b0b0"></div>
<div class="abs" style="left:990px;top:40px;width:1px;height:19px;background:#e0b0b0"></div>
<div class="abs" style="left:1010px;top:40px;width:1px;height:19px;background:#e0b0b0"></div>
<div class="abs" style="left:1130px;top:40px;width:1px;height:19px;background:#e0b0b0"></div>
<div class="abs" style="left:13px;top:40px;width:109px;height:18px;overflow:hidden">
<div class="t" style="left:2.00px;top:3px;font:normal 14px/1 'Liberation Mono',monospace;white-space:pre;color:#2a0505;-webkit-text-stroke:0.25px #2a0505;transform:scaleX(0.7440);transform-origin:0 0">ZZZZ-ZZZ-ZZZZ</div>
</div>
<div class="abs" style="left:123px;top:40px;width:267px;height:18px;overflow:hidden">
<div class="t" style="left:2.00px;top:3px;font:normal 14px/1 'Liberation Sans',sans-serif;white-space:pre;color:#2a0505;-webkit-text-stroke:0.1px #2a0505;transform:scale(0.8929,0.92);transform-origin:0 1px">화변기주위</div>
<div class="t" style="left:64.50px;top:3px;font:normal 14px/1 'Liberation Mono',monospace;white-space:pre;color:#2a0505;-webkit-text-stroke:0.25px #2a0505;transform:scaleX(0.7440);transform-origin:0 0">_[F.V]</div>
</div>
<div class="abs" style="left:571px;top:40px;width:59px;height:18px;overflow:hidden">
<div class="t" style="left:2.00px;top:3px;font:normal 14px/1 'Liberation Sans',sans-serif;white-space:pre;color:#2a0505;-webkit-text-stroke:0.1px #2a0505;transform:scale(0.8929,0.92);transform-origin:0 1px">개소</div>
</div>
<div class="abs" style="left:691px;top:40px;width:59px;height:18px;overflow:hidden">
<div class="t" style="left:51.75px;top:3px;font:normal 14px/1 'Liberation Mono',monospace;white-space:pre;color:#2a0505;-webkit-text-stroke:0.25px #2a0505;transform:scaleX(0.7440);transform-origin:0 0">4</div>
</div>
<div class="abs" style="left:751px;top:40px;width:179px;height:18px;overflow:hidden">
<div class="t" style="left:2.00px;top:3px;font:normal 14px/1 'Liberation Mono',monospace;white-space:pre;color:#2a0505;-webkit-text-stroke:0.25px #2a0505;transform:scaleX(0.7440);transform-origin:0 0">4</div>
</div>
<div class="abs" style="left:931px;top:40px;width:59px;height:18px;overflow:hidden">
<div class="t" style="left:51.75px;top:3px;font:normal 14px/1 'Liberation Mono',monospace;white-space:pre;color:#2a0505;-webkit-text-stroke:0.25px #2a0505;transform:scaleX(0.7440);transform-origin:0 0">0</div>
</div>
<div class="abs" style="left:995px;top:43px;width:13px;height:13px;border:1px solid #888;background:#fff"></div>
<svg class="abs" style="left:997px;top:45px" width="9" height="9" viewBox="0 0 9 9"><path d="M1 4.5 L3.5 7.5 L8 1" stroke="#000" stroke-width="1.8" fill="none"/></svg>
<div class="abs" style="left:0;top:59px;width:13px;height:19px;background:#6495ed;border-bottom:1px solid #9cbcf4;border-right:1px solid #9cbcf4"></div>
<div class="abs" style="left:2px;top:66px;width:4px;height:4px;background:#fff"></div>
<div class="abs" style="left:13px;top:59px;width:1118px;height:19px;background:#cd5c5c;border-bottom:1px solid #e09090"></div>
<div class="abs" style="left:122px;top:59px;width:1px;height:19px;background:#e09090"></div>
<div class="abs" style="left:390px;top:59px;width:1px;height:19px;background:#e09090"></div>
<div class="abs" style="left:570px;top:59px;width:1px;height:19px;background:#e09090"></div>
<div class="abs" style="left:630px;top:59px;width:1px;height:19px;background:#e09090"></div>
<div class="abs" style="left:690px;top:59px;width:1px;height:19px;background:#e09090"></div>
<div class="abs" style="left:750px;top:59px;width:1px;height:19px;background:#e09090"></div>
<div class="abs" style="left:930px;top:59px;width:1px;height:19px;background:#e09090"></div>
<div class="abs" style="left:990px;top:59px;width:1px;height:19px;background:#e09090"></div>
<div class="abs" style="left:1010px;top:59px;width:1px;height:19px;background:#e09090"></div>
<div class="abs" style="left:1130px;top:59px;width:1px;height:19px;background:#e09090"></div>
<div class="abs" style="left:13px;top:59px;width:109px;height:18px;overflow:hidden">
<div class="t" style="left:2.00px;top:3px;font:normal 14px/1 'Liberation Mono',monospace;white-space:pre;color:#220404;-webkit-text-stroke:0.25px #220404;transform:scaleX(0.7440);transform-origin:0 0">ZZZZ-ZZZ-ZZZZ</div>
</div>
<div class="abs" style="left:571px;top:59px;width:59px;height:18px;overflow:hidden">
<div class="t" style="left:2.00px;top:3px;font:normal 14px/1 'Liberation Sans',sans-serif;white-space:pre;color:#220404;-webkit-text-stroke:0.1px #220404;transform:scale(0.8929,0.92);transform-origin:0 1px">개소</div>
</div>
<div class="abs" style="left:691px;top:59px;width:59px;height:18px;overflow:hidden">
<div class="t" style="left:45.50px;top:3px;font:normal 14px/1 'Liberation Mono',monospace;white-space:pre;color:#220404;-webkit-text-stroke:0.25px #220404;transform:scaleX(0.7440);transform-origin:0 0">12</div>
</div>
<div class="abs" style="left:751px;top:59px;width:179px;height:18px;overflow:hidden">
<div class="t" style="left:2.00px;top:3px;font:normal 14px/1 'Liberation Mono',monospace;white-space:pre;color:#220404;-webkit-text-stroke:0.25px #220404;transform:scaleX(0.7440);transform-origin:0 0">12</div>
</div>
<div class="abs" style="left:931px;top:59px;width:59px;height:18px;overflow:hidden">
<div class="t" style="left:51.75px;top:3px;font:normal 14px/1 'Liberation Mono',monospace;white-space:pre;color:#220404;-webkit-text-stroke:0.25px #220404;transform:scaleX(0.7440);transform-origin:0 0">0</div>
</div>
<div class="abs" style="left:995px;top:62px;width:13px;height:13px;border:1px solid #888;background:#fff"></div>
<svg class="abs" style="left:997px;top:64px" width="9" height="9" viewBox="0 0 9 9"><path d="M1 4.5 L3.5 7.5 L8 1" stroke="#000" stroke-width="1.8" fill="none"/></svg>
<div class="abs" style="left:122px;top:58px;width:269px;height:21px;border:2px solid #2e5e5e;background:#e67272"></div>
<div class="t" style="left:125.00px;top:62px;font:normal 14px/1 'Liberation Sans',sans-serif;white-space:pre;color:#220404;-webkit-text-stroke:0.1px #220404;transform:scale(0.8929,0.92);transform-origin:0 1px">양변기주위</div>
<div class="t" style="left:187.50px;top:62px;font:normal 14px/1 'Liberation Mono',monospace;white-space:pre;color:#220404;-webkit-text-stroke:0.25px #220404;transform:scaleX(0.7440);transform-origin:0 0">_[F.V]</div>
<div class="abs" style="left:0;top:78px;width:13px;height:19px;background:#6495ed;border-bottom:1px solid #9cbcf4;border-right:1px solid #9cbcf4"></div>
<div class="abs" style="left:2px;top:85px;width:4px;height:4px;background:#fff"></div>
<div class="abs" style="left:13px;top:78px;width:1118px;height:19px;background:#f08080;border-bottom:1px solid #e0b0b0"></div>
<div class="abs" style="left:122px;top:78px;width:1px;height:19px;background:#e0b0b0"></div>
<div class="abs" style="left:390px;top:78px;width:1px;height:19px;background:#e0b0b0"></div>
<div class="abs" style="left:570px;top:78px;width:1px;height:19px;background:#e0b0b0"></div>
<div class="abs" style="left:630px;top:78px;width:1px;height:19px;background:#e0b0b0"></div>
<div class="abs" style="left:690px;top:78px;width:1px;height:19px;background:#e0b0b0"></div>
<div class="abs" style="left:750px;top:78px;width:1px;height:19px;background:#e0b0b0"></div>
<div class="abs" style="left:930px;top:78px;width:1px;height:19px;background:#e0b0b0"></div>
<div class="abs" style="left:990px;top:78px;width:1px;height:19px;background:#e0b0b0"></div>
<div class="abs" style="left:1010px;top:78px;width:1px;height:19px;background:#e0b0b0"></div>
<div class="abs" style="left:1130px;top:78px;width:1px;height:19px;background:#e0b0b0"></div>
<div class="abs" style="left:13px;top:78px;width:109px;height:18px;overflow:hidden">
<div class="t" style="left:2.00px;top:3px;font:normal 14px/1 'Liberation Mono',monospace;white-space:pre;color:#2a0505;-webkit-text-stroke:0.25px #2a0505;transform:scaleX(0.7440);transform-origin:0 0">ZZZZ-ZZZ-ZZZZ</div>
</div>
<div class="abs" style="left:123px;top:78px;width:267px;height:18px;overflow:hidden">
<div class="t" style="left:2.00px;top:3px;font:normal 14px/1 'Liberation Sans',sans-serif;white-space:pre;color:#2a0505;-webkit-text-stroke:0.1px #2a0505;transform:scale(0.8929,0.92);transform-origin:0 1px">소변기주위</div>
<div class="t" style="left:64.50px;top:3px;font:normal 14px/1 'Liberation Mono',monospace;white-space:pre;color:#2a0505;-webkit-text-stroke:0.25px #2a0505;transform:scaleX(0.7440);transform-origin:0 0">(1</div>
<div class="t" style="left:77.00px;top:3px;font:normal 14px/1 'Liberation Sans',sans-serif;white-space:pre;color:#2a0505;-webkit-text-stroke:0.1px #2a0505;transform:scale(0.8929,0.92);transform-origin:0 1px">구</div>
<div class="t" style="left:89.50px;top:3px;font:normal 14px/1 'Liberation Mono',monospace;white-space:pre;color:#2a0505;-webkit-text-stroke:0.25px #2a0505;transform:scaleX(0.7440);transform-origin:0 0">)</div>
</div>
<div class="abs" style="left:571px;top:78px;width:59px;height:18px;overflow:hidden">
<div class="t" style="left:2.00px;top:3px;font:normal 14px/1 'Liberation Sans',sans-serif;white-space:pre;color:#2a0505;-webkit-text-stroke:0.1px #2a0505;transform:scale(0.8929,0.92);transform-origin:0 1px">개소</div>
</div>
<div class="abs" style="left:691px;top:78px;width:59px;height:18px;overflow:hidden">
<div class="t" style="left:51.75px;top:3px;font:normal 14px/1 'Liberation Mono',monospace;white-space:pre;color:#2a0505;-webkit-text-stroke:0.25px #2a0505;transform:scaleX(0.7440);transform-origin:0 0">7</div>
</div>
<div class="abs" style="left:751px;top:78px;width:179px;height:18px;overflow:hidden">
<div class="t" style="left:2.00px;top:3px;font:normal 14px/1 'Liberation Mono',monospace;white-space:pre;color:#2a0505;-webkit-text-stroke:0.25px #2a0505;transform:scaleX(0.7440);transform-origin:0 0">7</div>
</div>
<div class="abs" style="left:931px;top:78px;width:59px;height:18px;overflow:hidden">
<div class="t" style="left:51.75px;top:3px;font:normal 14px/1 'Liberation Mono',monospace;white-space:pre;color:#2a0505;-webkit-text-stroke:0.25px #2a0505;transform:scaleX(0.7440);transform-origin:0 0">0</div>
</div>
<div class="abs" style="left:995px;top:81px;width:13px;height:13px;border:1px solid #888;background:#fff"></div>
<svg class="abs" style="left:997px;top:83px" width="9" height="9" viewBox="0 0 9 9"><path d="M1 4.5 L3.5 7.5 L8 1" stroke="#000" stroke-width="1.8" fill="none"/></svg>
<div class="abs" style="left:0;top:97px;width:13px;height:19px;background:#6495ed;border-bottom:1px solid #9cbcf4;border-right:1px solid #9cbcf4"></div>
<div class="abs" style="left:2px;top:103px;width:4px;height:4px;background:#fff"></div><div class="abs" style="left:5px;top:106px;width:4px;height:4px;background:#40e0f0"></div>
<div class="abs" style="left:13px;top:97px;width:1118px;height:19px;background:#ffffff;border-bottom:1px solid #d4d4d4"></div>
<div class="abs" style="left:122px;top:97px;width:1px;height:19px;background:#d4d4d4"></div>
<div class="abs" style="left:390px;top:97px;width:1px;height:19px;background:#d4d4d4"></div>
<div class="abs" style="left:570px;top:97px;width:1px;height:19px;background:#d4d4d4"></div>
<div class="abs" style="left:630px;top:97px;width:1px;height:19px;background:#d4d4d4"></div>
<div class="abs" style="left:690px;top:97px;width:1px;height:19px;background:#d4d4d4"></div>
<div class="abs" style="left:750px;top:97px;width:1px;height:19px;background:#d4d4d4"></div>
<div class="abs" style="left:930px;top:97px;width:1px;height:19px;background:#d4d4d4"></div>
<div class="abs" style="left:990px;top:97px;width:1px;height:19px;background:#d4d4d4"></div>
<div class="abs" style="left:1010px;top:97px;width:1px;height:19px;background:#d4d4d4"></div>
<div class="abs" style="left:1130px;top:97px;width:1px;height:19px;background:#d4d4d4"></div>
<div class="abs" style="left:13px;top:97px;width:109px;height:18px;overflow:hidden">
<div class="t" style="left:2.00px;top:3px;font:normal 14px/1 'Liberation Mono',monospace;white-space:pre;color:#111;-webkit-text-stroke:0.25px #111;transform:scaleX(0.7440);transform-origin:0 0">40142185-20112006</div>
</div>
<div class="abs" style="left:123px;top:97px;width:267px;height:18px;overflow:hidden">
<div class="t" style="left:2.00px;top:3px;font:normal 14px/1 'Liberation Mono',monospace;white-space:pre;color:#111;-webkit-text-stroke:0.25px #111;transform:scaleX(0.7440);transform-origin:0 0">PVC</div>
<div class="t" style="left:20.75px;top:3px;font:normal 14px/1 'Liberation Sans',sans-serif;white-space:pre;color:#111;-webkit-text-stroke:0.1px #111;transform:scale(0.8929,0.92);transform-origin:0 1px">관</div>
<div class="t" style="left:33.25px;top:3px;font:normal 14px/1 'Liberation Mono',monospace;white-space:pre;color:#111;-webkit-text-stroke:0.25px #111;transform:scaleX(0.7440);transform-origin:0 0">(VG1)</div>
</div>
<div class="abs" style="left:391px;top:97px;width:179px;height:18px;overflow:hidden">
<div class="t" style="left:2.00px;top:3px;font:normal 14px/1 'Liberation Mono',monospace;white-space:pre;color:#111;-webkit-text-stroke:0.25px #111;transform:scaleX(0.7440);transform-origin:0 0">PVC</div>
<div class="t" style="left:20.75px;top:3px;font:normal 14px/1 'Liberation Sans',sans-serif;white-space:pre;color:#111;-webkit-text-stroke:0.1px #111;transform:scale(0.8929,0.92);transform-origin:0 1px">관</div>
<div class="t" style="left:33.25px;top:3px;font:normal 14px/1 'Liberation Mono',monospace;white-space:pre;color:#111;-webkit-text-stroke:0.25px #111;transform:scaleX(0.7440);transform-origin:0 0">(VG1), D100</div>
</div>
<div class="abs" style="left:571px;top:97px;width:59px;height:18px;overflow:hidden">
<div class="t" style="left:2.00px;top:3px;font:normal 14px/1 'Liberation Mono',monospace;white-space:pre;color:#111;-webkit-text-stroke:0.25px #111;transform:scaleX(0.7440);transform-origin:0 0">M</div>
</div>
<div class="abs" style="left:691px;top:97px;width:59px;height:18px;overflow:hidden">
<div class="t" style="left:33.00px;top:3px;font:normal 14px/1 'Liberation Mono',monospace;white-space:pre;color:#111;-webkit-text-stroke:0.25px #111;transform:scaleX(0.7440);transform-origin:0 0">25.1</div>
</div>
<div class="abs" style="left:751px;top:97px;width:179px;height:18px;overflow:hidden">
<div class="t" style="left:2.00px;top:3px;font:normal 14px/1 'Liberation Mono',monospace;white-space:pre;color:#111;-webkit-text-stroke:0.25px #111;transform:scaleX(0.7440);transform-origin:0 0">4.8+3.6+3+3+3.5+3.5+3.7</div>
</div>
<div class="abs" style="left:931px;top:97px;width:59px;height:18px;overflow:hidden">
<div class="t" style="left:51.75px;top:3px;font:normal 14px/1 'Liberation Mono',monospace;white-space:pre;color:#111;-webkit-text-stroke:0.25px #111;transform:scaleX(0.7440);transform-origin:0 0">0</div>
</div>
<div class="abs" style="left:995px;top:100px;width:13px;height:13px;border:1px solid #888;background:#fff"></div>
<div class="abs" style="left:0;top:116px;width:13px;height:19px;background:#6495ed;border-bottom:1px solid #9cbcf4;border-right:1px solid #9cbcf4"></div>
<div class="abs" style="left:2px;top:122px;width:4px;height:4px;background:#fff"></div><div class="abs" style="left:5px;top:125px;width:4px;height:4px;background:#40e0f0"></div>
<div class="abs" style="left:13px;top:116px;width:1118px;height:19px;background:#ffffff;border-bottom:1px solid #d4d4d4"></div>
<div class="abs" style="left:122px;top:116px;width:1px;height:19px;background:#d4d4d4"></div>
<div class="abs" style="left:390px;top:116px;width:1px;height:19px;background:#d4d4d4"></div>
<div class="abs" style="left:570px;top:116px;width:1px;height:19px;background:#d4d4d4"></div>
<div class="abs" style="left:630px;top:116px;width:1px;height:19px;background:#d4d4d4"></div>
<div class="abs" style="left:690px;top:116px;width:1px;height:19px;background:#d4d4d4"></div>
<div class="abs" style="left:750px;top:116px;width:1px;height:19px;background:#d4d4d4"></div>
<div class="abs" style="left:930px;top:116px;width:1px;height:19px;background:#d4d4d4"></div>
<div class="abs" style="left:990px;top:116px;width:1px;height:19px;background:#d4d4d4"></div>
<div class="abs" style="left:1010px;top:116px;width:1px;height:19px;background:#d4d4d4"></div>
<div class="abs" style="left:1130px;top:116px;width:1px;height:19px;background:#d4d4d4"></div>
<div class="abs" style="left:13px;top:116px;width:109px;height:18px;overflow:hidden">
<div class="t" style="left:2.00px;top:3px;font:normal 14px/1 'Liberation Mono',monospace;white-space:pre;color:#111;-webkit-text-stroke:0.25px #111;transform:scaleX(0.7440);transform-origin:0 0">40142185-20112005</div>
</div>
<div class="abs" style="left:123px;top:116px;width:267px;height:18px;overflow:hidden">
<div class="t" style="left:2.00px;top:3px;font:normal 14px/1 'Liberation Mono',monospace;white-space:pre;color:#111;-webkit-text-stroke:0.25px #111;transform:scaleX(0.7440);transform-origin:0 0">PVC</div>
<div class="t" style="left:20.75px;top:3px;font:normal 14px/1 'Liberation Sans',sans-serif;white-space:pre;color:#111;-webkit-text-stroke:0.1px #111;transform:scale(0.8929,0.92);transform-origin:0 1px">관</div>
<div class="t" style="left:33.25px;top:3px;font:normal 14px/1 'Liberation Mono',monospace;white-space:pre;color:#111;-webkit-text-stroke:0.25px #111;transform:scaleX(0.7440);transform-origin:0 0">(VG1)</div>
</div>
<div class="abs" style="left:391px;top:116px;width:179px;height:18px;overflow:hidden">
<div class="t" style="left:2.00px;top:3px;font:normal 14px/1 'Liberation Mono',monospace;white-space:pre;color:#111;-webkit-text-stroke:0.25px #111;transform:scaleX(0.7440);transform-origin:0 0">PVC</div>
<div class="t" style="left:20.75px;top:3px;font:normal 14px/1 'Liberation Sans',sans-serif;white-space:pre;color:#111;-webkit-text-stroke:0.1px #111;transform:scale(0.8929,0.92);transform-origin:0 1px">관</div>
<div class="t" style="left:33.25px;top:3px;font:normal 14px/1 'Liberation Mono',monospace;white-space:pre;color:#111;-webkit-text-stroke:0.25px #111;transform:scaleX(0.7440);transform-origin:0 0">(VG1), D75</div>
</div>
<div class="abs" style="left:571px;top:116px;width:59px;height:18px;overflow:hidden">
<div class="t" style="left:2.00px;top:3px;font:normal 14px/1 'Liberation Mono',monospace;white-space:pre;color:#111;-webkit-text-stroke:0.25px #111;transform:scaleX(0.7440);transform-origin:0 0">M</div>
</div>
<div class="abs" style="left:691px;top:116px;width:59px;height:18px;overflow:hidden">
<div class="t" style="left:51.75px;top:3px;font:normal 14px/1 'Liberation Mono',monospace;white-space:pre;color:#111;-webkit-text-stroke:0.25px #111;transform:scaleX(0.7440);transform-origin:0 0">5</div>
</div>
<div class="abs" style="left:751px;top:116px;width:179px;height:18px;overflow:hidden">
<div class="t" style="left:2.00px;top:3px;font:normal 14px/1 'Liberation Mono',monospace;white-space:pre;color:#111;-webkit-text-stroke:0.25px #111;transform:scaleX(0.7440);transform-origin:0 0">2.4+2.6</div>
</div>
<div class="abs" style="left:931px;top:116px;width:59px;height:18px;overflow:hidden">
<div class="t" style="left:51.75px;top:3px;font:normal 14px/1 'Liberation Mono',monospace;white-space:pre;color:#111;-webkit-text-stroke:0.25px #111;transform:scaleX(0.7440);transform-origin:0 0">0</div>
</div>
<div class="abs" style="left:995px;top:119px;width:13px;height:13px;border:1px solid #888;background:#fff"></div>
<div class="abs" style="left:0;top:135px;width:13px;height:19px;background:#6495ed;border-bottom:1px solid #9cbcf4;border-right:1px solid #9cbcf4"></div>
<div class="abs" style="left:13px;top:135px;width:1118px;height:19px;background:#ffffff;border-bottom:1px solid #d4d4d4"></div>
<div class="abs" style="left:122px;top:135px;width:1px;height:19px;background:#d4d4d4"></div>
<div class="abs" style="left:390px;top:135px;width:1px;height:19px;background:#d4d4d4"></div>
<div class="abs" style="left:570px;top:135px;width:1px;height:19px;background:#d4d4d4"></div>
<div class="abs" style="left:630px;top:135px;width:1px;height:19px;background:#d4d4d4"></div>
<div class="abs" style="left:690px;top:135px;width:1px;height:19px;background:#d4d4d4"></div>
<div class="abs" style="left:750px;top:135px;width:1px;height:19px;background:#d4d4d4"></div>
<div class="abs" style="left:930px;top:135px;width:1px;height:19px;background:#d4d4d4"></div>
<div class="abs" style="left:990px;top:135px;width:1px;height:19px;background:#d4d4d4"></div>
<div class="abs" style="left:1010px;top:135px;width:1px;height:19px;background:#d4d4d4"></div>
<div class="abs" style="left:1130px;top:135px;width:1px;height:19px;background:#d4d4d4"></div>
<div class="abs" style="left:13px;top:135px;width:109px;height:18px;overflow:hidden">
<div class="t" style="left:2.00px;top:3px;font:normal 14px/1 'Liberation Mono',monospace;white-space:pre;color:#111;-webkit-text-stroke:0.25px #111;transform:scaleX(0.7440);transform-origin:0 0">40142396-21872005</div>
</div>
<div class="abs" style="left:123px;top:135px;width:267px;height:18px;overflow:hidden">
<div class="t" style="left:2.00px;top:3px;font:normal 14px/1 'Liberation Sans',sans-serif;white-space:pre;color:#111;-webkit-text-stroke:0.1px #111;transform:scale(0.8929,0.92);transform-origin:0 1px">일반용경질폴리염화비닐이음관</div>
</div>
<div class="abs" style="left:391px;top:135px;width:179px;height:18px;overflow:hidden">
<div class="t" style="left:2.00px;top:3px;font:normal 14px/1 'Liberation Mono',monospace;white-space:pre;color:#111;-webkit-text-stroke:0.25px #111;transform:scaleX(0.7440);transform-origin:0 0">LT</div>
<div class="t" style="left:14.50px;top:3px;font:normal 14px/1 'Liberation Sans',sans-serif;white-space:pre;color:#111;-webkit-text-stroke:0.1px #111;transform:scale(0.8929,0.92);transform-origin:0 1px">관</div>
<div class="t" style="left:27.00px;top:3px;font:normal 14px/1 'Liberation Mono',monospace;white-space:pre;color:#111;-webkit-text-stroke:0.25px #111;transform:scaleX(0.7440);transform-origin:0 0"> (DRF) D100x75</div>
</div>
<div class="abs" style="left:571px;top:135px;width:59px;height:18px;overflow:hidden">
<div class="t" style="left:2.00px;top:3px;font:normal 14px/1 'Liberation Sans',sans-serif;white-space:pre;color:#111;-webkit-text-stroke:0.1px #111;transform:scale(0.8929,0.92);transform-origin:0 1px">개</div>
</div>
<div class="abs" style="left:691px;top:135px;width:59px;height:18px;overflow:hidden">
<div class="t" style="left:51.75px;top:3px;font:normal 14px/1 'Liberation Mono',monospace;white-space:pre;color:#111;-webkit-text-stroke:0.25px #111;transform:scaleX(0.7440);transform-origin:0 0">1</div>
</div>
<div class="abs" style="left:751px;top:135px;width:179px;height:18px;overflow:hidden">
<div class="t" style="left:2.00px;top:3px;font:normal 14px/1 'Liberation Mono',monospace;white-space:pre;color:#111;-webkit-text-stroke:0.25px #111;transform:scaleX(0.7440);transform-origin:0 0">1</div>
</div>
<div class="abs" style="left:931px;top:135px;width:59px;height:18px;overflow:hidden">
<div class="t" style="left:51.75px;top:3px;font:normal 14px/1 'Liberation Mono',monospace;white-space:pre;color:#111;-webkit-text-stroke:0.25px #111;transform:scaleX(0.7440);transform-origin:0 0">0</div>
</div>
<div class="abs" style="left:995px;top:138px;width:13px;height:13px;border:1px solid #888;background:#fff"></div>
<div class="abs" style="left:0;top:154px;width:13px;height:19px;background:#6495ed;border-bottom:1px solid #9cbcf4;border-right:1px solid #9cbcf4"></div>
<div class="abs" style="left:13px;top:154px;width:1118px;height:19px;background:#ffffff;border-bottom:1px solid #d4d4d4"></div>
<div class="abs" style="left:122px;top:154px;width:1px;height:19px;background:#d4d4d4"></div>
<div class="abs" style="left:390px;top:154px;width:1px;height:19px;background:#d4d4d4"></div>
<div class="abs" style="left:570px;top:154px;width:1px;height:19px;background:#d4d4d4"></div>
<div class="abs" style="left:630px;top:154px;width:1px;height:19px;background:#d4d4d4"></div>
<div class="abs" style="left:690px;top:154px;width:1px;height:19px;background:#d4d4d4"></div>
<div class="abs" style="left:750px;top:154px;width:1px;height:19px;background:#d4d4d4"></div>
<div class="abs" style="left:930px;top:154px;width:1px;height:19px;background:#d4d4d4"></div>
<div class="abs" style="left:990px;top:154px;width:1px;height:19px;background:#d4d4d4"></div>
<div class="abs" style="left:1010px;top:154px;width:1px;height:19px;background:#d4d4d4"></div>
<div class="abs" style="left:1130px;top:154px;width:1px;height:19px;background:#d4d4d4"></div>
<div class="abs" style="left:13px;top:154px;width:109px;height:18px;overflow:hidden">
<div class="t" style="left:2.00px;top:3px;font:normal 14px/1 'Liberation Mono',monospace;white-space:pre;color:#111;-webkit-text-stroke:0.25px #111;transform:scaleX(0.7440);transform-origin:0 0">40142396-21872024</div>
</div>
<div class="abs" style="left:123px;top:154px;width:267px;height:18px;overflow:hidden">
<div class="t" style="left:2.00px;top:3px;font:normal 14px/1 'Liberation Sans',sans-serif;white-space:pre;color:#111;-webkit-text-stroke:0.1px #111;transform:scale(0.8929,0.92);transform-origin:0 1px">일반용경질폴리염화비닐이음관</div>
</div>
<div class="abs" style="left:391px;top:154px;width:179px;height:18px;overflow:hidden">
<div class="t" style="left:2.00px;top:3px;font:normal 14px/1 'Liberation Mono',monospace;white-space:pre;color:#111;-webkit-text-stroke:0.25px #111;transform:scaleX(0.7440);transform-origin:0 0">LT</div>
<div class="t" style="left:14.50px;top:3px;font:normal 14px/1 'Liberation Sans',sans-serif;white-space:pre;color:#111;-webkit-text-stroke:0.1px #111;transform:scale(0.8929,0.92);transform-origin:0 1px">관</div>
<div class="t" style="left:27.00px;top:3px;font:normal 14px/1 'Liberation Mono',monospace;white-space:pre;color:#111;-webkit-text-stroke:0.25px #111;transform:scaleX(0.7440);transform-origin:0 0"> (DRF) D75x75</div>
</div>
<div class="abs" style="left:571px;top:154px;width:59px;height:18px;overflow:hidden">
<div class="t" style="left:2.00px;top:3px;font:normal 14px/1 'Liberation Sans',sans-serif;white-space:pre;color:#111;-webkit-text-stroke:0.1px #111;transform:scale(0.8929,0.92);transform-origin:0 1px">개</div>
</div>
<div class="abs" style="left:691px;top:154px;width:59px;height:18px;overflow:hidden">
<div class="t" style="left:51.75px;top:3px;font:normal 14px/1 'Liberation Mono',monospace;white-space:pre;color:#111;-webkit-text-stroke:0.25px #111;transform:scaleX(0.7440);transform-origin:0 0">1</div>
</div>
<div class="abs" style="left:751px;top:154px;width:179px;height:18px;overflow:hidden">
<div class="t" style="left:2.00px;top:3px;font:normal 14px/1 'Liberation Mono',monospace;white-space:pre;color:#111;-webkit-text-stroke:0.25px #111;transform:scaleX(0.7440);transform-origin:0 0">1</div>
</div>
<div class="abs" style="left:931px;top:154px;width:59px;height:18px;overflow:hidden">
<div class="t" style="left:51.75px;top:3px;font:normal 14px/1 'Liberation Mono',monospace;white-space:pre;color:#111;-webkit-text-stroke:0.25px #111;transform:scaleX(0.7440);transform-origin:0 0">0</div>
</div>
<div class="abs" style="left:995px;top:157px;width:13px;height:13px;border:1px solid #888;background:#fff"></div>
<div class="abs" style="left:0;top:173px;width:13px;height:19px;background:#6495ed;border-bottom:1px solid #9cbcf4;border-right:1px solid #9cbcf4"></div>
<div class="abs" style="left:13px;top:173px;width:1118px;height:19px;background:#ffffff;border-bottom:1px solid #d4d4d4"></div>
<div class="abs" style="left:122px;top:173px;width:1px;height:19px;background:#d4d4d4"></div>
<div class="abs" style="left:390px;top:173px;width:1px;height:19px;background:#d4d4d4"></div>
<div class="abs" style="left:570px;top:173px;width:1px;height:19px;background:#d4d4d4"></div>
<div class="abs" style="left:630px;top:173px;width:1px;height:19px;background:#d4d4d4"></div>
<div class="abs" style="left:690px;top:173px;width:1px;height:19px;background:#d4d4d4"></div>
<div class="abs" style="left:750px;top:173px;width:1px;height:19px;background:#d4d4d4"></div>
<div class="abs" style="left:930px;top:173px;width:1px;height:19px;background:#d4d4d4"></div>
<div class="abs" style="left:990px;top:173px;width:1px;height:19px;background:#d4d4d4"></div>
<div class="abs" style="left:1010px;top:173px;width:1px;height:19px;background:#d4d4d4"></div>
<div class="abs" style="left:1130px;top:173px;width:1px;height:19px;background:#d4d4d4"></div>
<div class="abs" style="left:13px;top:173px;width:109px;height:18px;overflow:hidden">
<div class="t" style="left:2.00px;top:3px;font:normal 14px/1 'Liberation Mono',monospace;white-space:pre;color:#111;-webkit-text-stroke:0.25px #111;transform:scaleX(0.7440);transform-origin:0 0">40142396-21872023</div>
</div>
<div class="abs" style="left:123px;top:173px;width:267px;height:18px;overflow:hidden">
<div class="t" style="left:2.00px;top:3px;font:normal 14px/1 'Liberation Sans',sans-serif;white-space:pre;color:#111;-webkit-text-stroke:0.1px #111;transform:scale(0.8929,0.92);transform-origin:0 1px">일반용경질폴리염화비닐이음관</div>
</div>
<div class="abs" style="left:391px;top:173px;width:179px;height:18px;overflow:hidden">
<div class="t" style="left:2.00px;top:3px;font:normal 14px/1 'Liberation Mono',monospace;white-space:pre;color:#111;-webkit-text-stroke:0.25px #111;transform:scaleX(0.7440);transform-origin:0 0">LT</div>
<div class="t" style="left:14.50px;top:3px;font:normal 14px/1 'Liberation Sans',sans-serif;white-space:pre;color:#111;-webkit-text-stroke:0.1px #111;transform:scale(0.8929,0.92);transform-origin:0 1px">관</div>
<div class="t" style="left:27.00px;top:3px;font:normal 14px/1 'Liberation Mono',monospace;white-space:pre;color:#111;-webkit-text-stroke:0.25px #111;transform:scaleX(0.7440);transform-origin:0 0"> (DRF) D75x50</div>
</div>
<div class="abs" style="left:571px;top:173px;width:59px;height:18px;overflow:hidden">
<div class="t" style="left:2.00px;top:3px;font:normal 14px/1 'Liberation Sans',sans-serif;white-space:pre;color:#111;-webkit-text-stroke:0.1px #111;transform:scale(0.8929,0.92);transform-origin:0 1px">개</div>
</div>
<div class="abs" style="left:691px;top:173px;width:59px;height:18px;overflow:hidden">
<div class="t" style="left:51.75px;top:3px;font:normal 14px/1 'Liberation Mono',monospace;white-space:pre;color:#111;-webkit-text-stroke:0.25px #111;transform:scaleX(0.7440);transform-origin:0 0">2</div>
</div>
<div class="abs" style="left:751px;top:173px;width:179px;height:18px;overflow:hidden">
<div class="t" style="left:2.00px;top:3px;font:normal 14px/1 'Liberation Mono',monospace;white-space:pre;color:#111;-webkit-text-stroke:0.25px #111;transform:scaleX(0.7440);transform-origin:0 0">2</div>
</div>
<div class="abs" style="left:931px;top:173px;width:59px;height:18px;overflow:hidden">
<div class="t" style="left:51.75px;top:3px;font:normal 14px/1 'Liberation Mono',monospace;white-space:pre;color:#111;-webkit-text-stroke:0.25px #111;transform:scaleX(0.7440);transform-origin:0 0">0</div>
</div>
<div class="abs" style="left:995px;top:176px;width:13px;height:13px;border:1px solid #888;background:#fff"></div>
<div class="abs" style="left:0;top:192px;width:13px;height:19px;background:#6495ed;border-bottom:1px solid #9cbcf4;border-right:1px solid #9cbcf4"></div>
<div class="abs" style="left:13px;top:192px;width:1118px;height:19px;background:#ffffff;border-bottom:1px solid #d4d4d4"></div>
<div class="abs" style="left:122px;top:192px;width:1px;height:19px;background:#d4d4d4"></div>
<div class="abs" style="left:390px;top:192px;width:1px;height:19px;background:#d4d4d4"></div>
<div class="abs" style="left:570px;top:192px;width:1px;height:19px;background:#d4d4d4"></div>
<div class="abs" style="left:630px;top:192px;width:1px;height:19px;background:#d4d4d4"></div>
<div class="abs" style="left:690px;top:192px;width:1px;height:19px;background:#d4d4d4"></div>
<div class="abs" style="left:750px;top:192px;width:1px;height:19px;background:#d4d4d4"></div>
<div class="abs" style="left:930px;top:192px;width:1px;height:19px;background:#d4d4d4"></div>
<div class="abs" style="left:990px;top:192px;width:1px;height:19px;background:#d4d4d4"></div>
<div class="abs" style="left:1010px;top:192px;width:1px;height:19px;background:#d4d4d4"></div>
<div class="abs" style="left:1130px;top:192px;width:1px;height:19px;background:#d4d4d4"></div>
<div class="abs" style="left:13px;top:192px;width:109px;height:18px;overflow:hidden">
<div class="t" style="left:2.00px;top:3px;font:normal 14px/1 'Liberation Mono',monospace;white-space:pre;color:#111;-webkit-text-stroke:0.25px #111;transform:scaleX(0.7440);transform-origin:0 0">40142396-21872006</div>
</div>
<div class="abs" style="left:123px;top:192px;width:267px;height:18px;overflow:hidden">
<div class="t" style="left:2.00px;top:3px;font:normal 14px/1 'Liberation Sans',sans-serif;white-space:pre;color:#111;-webkit-text-stroke:0.1px #111;transform:scale(0.8929,0.92);transform-origin:0 1px">일반용경질폴리염화비닐이음관</div>
</div>
<div class="abs" style="left:391px;top:192px;width:179px;height:18px;overflow:hidden">
<div class="t" style="left:2.00px;top:3px;font:normal 14px/1 'Liberation Mono',monospace;white-space:pre;color:#111;-webkit-text-stroke:0.25px #111;transform:scaleX(0.7440);transform-origin:0 0">LT</div>
<div class="t" style="left:14.50px;top:3px;font:normal 14px/1 'Liberation Sans',sans-serif;white-space:pre;color:#111;-webkit-text-stroke:0.1px #111;transform:scale(0.8929,0.92);transform-origin:0 1px">관</div>
<div class="t" style="left:27.00px;top:3px;font:normal 14px/1 'Liberation Mono',monospace;white-space:pre;color:#111;-webkit-text-stroke:0.25px #111;transform:scaleX(0.7440);transform-origin:0 0"> (DRF) D100x100</div>
</div>
<div class="abs" style="left:571px;top:192px;width:59px;height:18px;overflow:hidden">
<div class="t" style="left:2.00px;top:3px;font:normal 14px/1 'Liberation Sans',sans-serif;white-space:pre;color:#111;-webkit-text-stroke:0.1px #111;transform:scale(0.8929,0.92);transform-origin:0 1px">개</div>
</div>
<div class="abs" style="left:691px;top:192px;width:59px;height:18px;overflow:hidden">
<div class="t" style="left:45.50px;top:3px;font:normal 14px/1 'Liberation Mono',monospace;white-space:pre;color:#111;-webkit-text-stroke:0.25px #111;transform:scaleX(0.7440);transform-origin:0 0">10</div>
</div>
<div class="abs" style="left:751px;top:192px;width:179px;height:18px;overflow:hidden">
<div class="t" style="left:2.00px;top:3px;font:normal 14px/1 'Liberation Mono',monospace;white-space:pre;color:#111;-webkit-text-stroke:0.25px #111;transform:scaleX(0.7440);transform-origin:0 0">2+2+2+2+2</div>
</div>
<div class="abs" style="left:931px;top:192px;width:59px;height:18px;overflow:hidden">
<div class="t" style="left:51.75px;top:3px;font:normal 14px/1 'Liberation Mono',monospace;white-space:pre;color:#111;-webkit-text-stroke:0.25px #111;transform:scaleX(0.7440);transform-origin:0 0">0</div>
</div>
<div class="abs" style="left:995px;top:195px;width:13px;height:13px;border:1px solid #888;background:#fff"></div>
<div class="abs" style="left:0;top:211px;width:13px;height:19px;background:#6495ed;border-bottom:1px solid #9cbcf4;border-right:1px solid #9cbcf4"></div>
<div class="abs" style="left:13px;top:211px;width:1118px;height:19px;background:#ffffff;border-bottom:1px solid #d4d4d4"></div>
<div class="abs" style="left:122px;top:211px;width:1px;height:19px;background:#d4d4d4"></div>
<div class="abs" style="left:390px;top:211px;width:1px;height:19px;background:#d4d4d4"></div>
<div class="abs" style="left:570px;top:211px;width:1px;height:19px;background:#d4d4d4"></div>
<div class="abs" style="left:630px;top:211px;width:1px;height:19px;background:#d4d4d4"></div>
<div class="abs" style="left:690px;top:211px;width:1px;height:19px;background:#d4d4d4"></div>
<div class="abs" style="left:750px;top:211px;width:1px;height:19px;background:#d4d4d4"></div>
<div class="abs" style="left:930px;top:211px;width:1px;height:19px;background:#d4d4d4"></div>
<div class="abs" style="left:990px;top:211px;width:1px;height:19px;background:#d4d4d4"></div>
<div class="abs" style="left:1010px;top:211px;width:1px;height:19px;background:#d4d4d4"></div>
<div class="abs" style="left:1130px;top:211px;width:1px;height:19px;background:#d4d4d4"></div>
<div class="abs" style="left:13px;top:211px;width:109px;height:18px;overflow:hidden">
<div class="t" style="left:2.00px;top:3px;font:normal 14px/1 'Liberation Mono',monospace;white-space:pre;color:#111;-webkit-text-stroke:0.25px #111;transform:scaleX(0.7440);transform-origin:0 0">40142396-21872004</div>
</div>
<div class="abs" style="left:123px;top:211px;width:267px;height:18px;overflow:hidden">
<div class="t" style="left:2.00px;top:3px;font:normal 14px/1 'Liberation Sans',sans-serif;white-space:pre;color:#111;-webkit-text-stroke:0.1px #111;transform:scale(0.8929,0.92);transform-origin:0 1px">일반용경질폴리염화비닐이음관</div>
</div>
<div class="abs" style="left:391px;top:211px;width:179px;height:18px;overflow:hidden">
<div class="t" style="left:2.00px;top:3px;font:normal 14px/1 'Liberation Mono',monospace;white-space:pre;color:#111;-webkit-text-stroke:0.25px #111;transform:scaleX(0.7440);transform-origin:0 0">LT</div>
<div class="t" style="left:14.50px;top:3px;font:normal 14px/1 'Liberation Sans',sans-serif;white-space:pre;color:#111;-webkit-text-stroke:0.1px #111;transform:scale(0.8929,0.92);transform-origin:0 1px">관</div>
<div class="t" style="left:27.00px;top:3px;font:normal 14px/1 'Liberation Mono',monospace;white-space:pre;color:#111;-webkit-text-stroke:0.25px #111;transform:scaleX(0.7440);transform-origin:0 0"> (DRF) D100x50</div>
</div>
<div class="abs" style="left:571px;top:211px;width:59px;height:18px;overflow:hidden">
<div class="t" style="left:2.00px;top:3px;font:normal 14px/1 'Liberation Sans',sans-serif;white-space:pre;color:#111;-webkit-text-stroke:0.1px #111;transform:scale(0.8929,0.92);transform-origin:0 1px">개</div>
</div>
<div class="abs" style="left:691px;top:211px;width:59px;height:18px;overflow:hidden">
<div class="t" style="left:51.75px;top:3px;font:normal 14px/1 'Liberation Mono',monospace;white-space:pre;color:#111;-webkit-text-stroke:0.25px #111;transform:scaleX(0.7440);transform-origin:0 0">1</div>
</div>
<div class="abs" style="left:751px;top:211px;width:179px;height:18px;overflow:hidden">
<div class="t" style="left:2.00px;top:3px;font:normal 14px/1 'Liberation Mono',monospace;white-space:pre;color:#111;-webkit-text-stroke:0.25px #111;transform:scaleX(0.7440);transform-origin:0 0">1</div>
</div>
<div class="abs" style="left:931px;top:211px;width:59px;height:18px;overflow:hidden">
<div class="t" style="left:51.75px;top:3px;font:normal 14px/1 'Liberation Mono',monospace;white-space:pre;color:#111;-webkit-text-stroke:0.25px #111;transform:scaleX(0.7440);transform-origin:0 0">0</div>
</div>
<div class="abs" style="left:995px;top:214px;width:13px;height:13px;border:1px solid #888;background:#fff"></div>
<div class="abs" style="left:0;top:230px;width:13px;height:19px;background:#6495ed;border-bottom:1px solid #9cbcf4;border-right:1px solid #9cbcf4"></div>
<div class="abs" style="left:13px;top:230px;width:1118px;height:19px;background:#ffffff;border-bottom:1px solid #d4d4d4"></div>
<div class="abs" style="left:122px;top:230px;width:1px;height:19px;background:#d4d4d4"></div>
<div class="abs" style="left:390px;top:230px;width:1px;height:19px;background:#d4d4d4"></div>
<div class="abs" style="left:570px;top:230px;width:1px;height:19px;background:#d4d4d4"></div>
<div class="abs" style="left:630px;top:230px;width:1px;height:19px;background:#d4d4d4"></div>
<div class="abs" style="left:690px;top:230px;width:1px;height:19px;background:#d4d4d4"></div>
<div class="abs" style="left:750px;top:230px;width:1px;height:19px;background:#d4d4d4"></div>
<div class="abs" style="left:930px;top:230px;width:1px;height:19px;background:#d4d4d4"></div>
<div class="abs" style="left:990px;top:230px;width:1px;height:19px;background:#d4d4d4"></div>
<div class="abs" style="left:1010px;top:230px;width:1px;height:19px;background:#d4d4d4"></div>
<div class="abs" style="left:1130px;top:230px;width:1px;height:19px;background:#d4d4d4"></div>
<div class="abs" style="left:13px;top:230px;width:109px;height:18px;overflow:hidden">
<div class="t" style="left:2.00px;top:3px;font:normal 14px/1 'Liberation Mono',monospace;white-space:pre;color:#111;-webkit-text-stroke:0.25px #111;transform:scaleX(0.7440);transform-origin:0 0">40142396-31872310</div>
</div>
<div class="abs" style="left:123px;top:230px;width:267px;height:18px;overflow:hidden">
<div class="t" style="left:2.00px;top:3px;font:normal 14px/1 'Liberation Mono',monospace;white-space:pre;color:#111;-webkit-text-stroke:0.25px #111;transform:scaleX(0.7440);transform-origin:0 0">C-LT</div>
<div class="t" style="left:27.00px;top:3px;font:normal 14px/1 'Liberation Sans',sans-serif;white-space:pre;color:#111;-webkit-text-stroke:0.1px #111;transform:scale(0.8929,0.92);transform-origin:0 1px">관</div>
<div class="t" style="left:39.50px;top:3px;font:normal 14px/1 'Liberation Mono',monospace;white-space:pre;color:#111;-webkit-text-stroke:0.25px #111;transform:scaleX(0.7440);transform-origin:0 0"> (DRF) D100x100</div>
</div>
<div class="abs" style="left:391px;top:230px;width:179px;height:18px;overflow:hidden">
<div class="t" style="left:2.00px;top:3px;font:normal 14px/1 'Liberation Mono',monospace;white-space:pre;color:#111;-webkit-text-stroke:0.25px #111;transform:scaleX(0.7440);transform-origin:0 0">C-LT</div>
<div class="t" style="left:27.00px;top:3px;font:normal 14px/1 'Liberation Sans',sans-serif;white-space:pre;color:#111;-webkit-text-stroke:0.1px #111;transform:scale(0.8929,0.92);transform-origin:0 1px">관</div>
<div class="t" style="left:39.50px;top:3px;font:normal 14px/1 'Liberation Mono',monospace;white-space:pre;color:#111;-webkit-text-stroke:0.25px #111;transform:scaleX(0.7440);transform-origin:0 0"> (DRF) D100x100</div>
</div>
<div class="abs" style="left:571px;top:230px;width:59px;height:18px;overflow:hidden">
<div class="t" style="left:2.00px;top:3px;font:normal 14px/1 'Liberation Sans',sans-serif;white-space:pre;color:#111;-webkit-text-stroke:0.1px #111;transform:scale(0.8929,0.92);transform-origin:0 1px">개</div>
</div>
<div class="abs" style="left:691px;top:230px;width:59px;height:18px;overflow:hidden">
<div class="t" style="left:51.75px;top:3px;font:normal 14px/1 'Liberation Mono',monospace;white-space:pre;color:#111;-webkit-text-stroke:0.25px #111;transform:scaleX(0.7440);transform-origin:0 0">6</div>
</div>
<div class="abs" style="left:751px;top:230px;width:179px;height:18px;overflow:hidden">
<div class="t" style="left:2.00px;top:3px;font:normal 14px/1 'Liberation Mono',monospace;white-space:pre;color:#111;-webkit-text-stroke:0.25px #111;transform:scaleX(0.7440);transform-origin:0 0">2+2+2</div>
</div>
<div class="abs" style="left:931px;top:230px;width:59px;height:18px;overflow:hidden">
<div class="t" style="left:51.75px;top:3px;font:normal 14px/1 'Liberation Mono',monospace;white-space:pre;color:#111;-webkit-text-stroke:0.25px #111;transform:scaleX(0.7440);transform-origin:0 0">0</div>
</div>
<div class="abs" style="left:995px;top:233px;width:13px;height:13px;border:1px solid #888;background:#fff"></div>
<div class="abs" style="left:0;top:249px;width:13px;height:19px;background:#6495ed;border-bottom:1px solid #9cbcf4;border-right:1px solid #9cbcf4"></div>
<div class="abs" style="left:13px;top:249px;width:1118px;height:19px;background:#ffffff;border-bottom:1px solid #d4d4d4"></div>
<div class="abs" style="left:122px;top:249px;width:1px;height:19px;background:#d4d4d4"></div>
<div class="abs" style="left:390px;top:249px;width:1px;height:19px;background:#d4d4d4"></div>
<div class="abs" style="left:570px;top:249px;width:1px;height:19px;background:#d4d4d4"></div>
<div class="abs" style="left:630px;top:249px;width:1px;height:19px;background:#d4d4d4"></div>
<div class="abs" style="left:690px;top:249px;width:1px;height:19px;background:#d4d4d4"></div>
<div class="abs" style="left:750px;top:249px;width:1px;height:19px;background:#d4d4d4"></div>
<div class="abs" style="left:930px;top:249px;width:1px;height:19px;background:#d4d4d4"></div>
<div class="abs" style="left:990px;top:249px;width:1px;height:19px;background:#d4d4d4"></div>
<div class="abs" style="left:1010px;top:249px;width:1px;height:19px;background:#d4d4d4"></div>
<div class="abs" style="left:1130px;top:249px;width:1px;height:19px;background:#d4d4d4"></div>
<div class="abs" style="left:13px;top:249px;width:109px;height:18px;overflow:hidden">
<div class="t" style="left:2.00px;top:3px;font:normal 14px/1 'Liberation Mono',monospace;white-space:pre;color:#111;-webkit-text-stroke:0.25px #111;transform:scaleX(0.7440);transform-origin:0 0">40142396-31872307</div>
</div>
<div class="abs" style="left:123px;top:249px;width:267px;height:18px;overflow:hidden">
<div class="t" style="left:2.00px;top:3px;font:normal 14px/1 'Liberation Mono',monospace;white-space:pre;color:#111;-webkit-text-stroke:0.25px #111;transform:scaleX(0.7440);transform-origin:0 0">C-LT</div>
<div class="t" style="left:27.00px;top:3px;font:normal 14px/1 'Liberation Sans',sans-serif;white-space:pre;color:#111;-webkit-text-stroke:0.1px #111;transform:scale(0.8929,0.92);transform-origin:0 1px">관</div>
<div class="t" style="left:39.50px;top:3px;font:normal 14px/1 'Liberation Mono',monospace;white-space:pre;color:#111;-webkit-text-stroke:0.25px #111;transform:scaleX(0.7440);transform-origin:0 0"> (DRF) D75x75</div>
</div>
<div class="abs" style="left:391px;top:249px;width:179px;height:18px;overflow:hidden">
<div class="t" style="left:2.00px;top:3px;font:normal 14px/1 'Liberation Mono',monospace;white-space:pre;color:#111;-webkit-text-stroke:0.25px #111;transform:scaleX(0.7440);transform-origin:0 0">C-LT</div>
<div class="t" style="left:27.00px;top:3px;font:normal 14px/1 'Liberation Sans',sans-serif;white-space:pre;color:#111;-webkit-text-stroke:0.1px #111;transform:scale(0.8929,0.92);transform-origin:0 1px">관</div>
<div class="t" style="left:39.50px;top:3px;font:normal 14px/1 'Liberation Mono',monospace;white-space:pre;color:#111;-webkit-text-stroke:0.25px #111;transform:scaleX(0.7440);transform-origin:0 0"> (DRF) D75x75</div>
</div>
<div class="abs" style="left:571px;top:249px;width:59px;height:18px;overflow:hidden">
<div class="t" style="left:2.00px;top:3px;font:normal 14px/1 'Liberation Sans',sans-serif;white-space:pre;color:#111;-webkit-text-stroke:0.1px #111;transform:scale(0.8929,0.92);transform-origin:0 1px">개</div>
</div>
<div class="abs" style="left:691px;top:249px;width:59px;height:18px;overflow:hidden">
<div class="t" style="left:51.75px;top:3px;font:normal 14px/1 'Liberation Mono',monospace;white-space:pre;color:#111;-webkit-text-stroke:0.25px #111;transform:scaleX(0.7440);transform-origin:0 0">2</div>
</div>
<div class="abs" style="left:751px;top:249px;width:179px;height:18px;overflow:hidden">
<div class="t" style="left:2.00px;top:3px;font:normal 14px/1 'Liberation Mono',monospace;white-space:pre;color:#111;-webkit-text-stroke:0.25px #111;transform:scaleX(0.7440);transform-origin:0 0">2</div>
</div>
<div class="abs" style="left:931px;top:249px;width:59px;height:18px;overflow:hidden">
<div class="t" style="left:51.75px;top:3px;font:normal 14px/1 'Liberation Mono',monospace;white-space:pre;color:#111;-webkit-text-stroke:0.25px #111;transform:scaleX(0.7440);transform-origin:0 0">0</div>
</div>
<div class="abs" style="left:995px;top:252px;width:13px;height:13px;border:1px solid #888;background:#fff"></div>
<div class="abs" style="left:0;top:268px;width:13px;height:19px;background:#6495ed;border-bottom:1px solid #9cbcf4;border-right:1px solid #9cbcf4"></div>
<div class="abs" style="left:13px;top:268px;width:1118px;height:19px;background:#f08080;border-bottom:1px solid #e0b0b0"></div>
<div class="abs" style="left:122px;top:268px;width:1px;height:19px;background:#e0b0b0"></div>
<div class="abs" style="left:390px;top:268px;width:1px;height:19px;background:#e0b0b0"></div>
<div class="abs" style="left:570px;top:268px;width:1px;height:19px;background:#e0b0b0"></div>
<div class="abs" style="left:630px;top:268px;width:1px;height:19px;background:#e0b0b0"></div>
<div class="abs" style="left:690px;top:268px;width:1px;height:19px;background:#e0b0b0"></div>
<div class="abs" style="left:750px;top:268px;width:1px;height:19px;background:#e0b0b0"></div>
<div class="abs" style="left:930px;top:268px;width:1px;height:19px;background:#e0b0b0"></div>
<div class="abs" style="left:990px;top:268px;width:1px;height:19px;background:#e0b0b0"></div>
<div class="abs" style="left:1010px;top:268px;width:1px;height:19px;background:#e0b0b0"></div>
<div class="abs" style="left:1130px;top:268px;width:1px;height:19px;background:#e0b0b0"></div>
<div class="abs" style="left:13px;top:268px;width:109px;height:18px;overflow:hidden">
<div class="t" style="left:2.00px;top:3px;font:normal 14px/1 'Liberation Mono',monospace;white-space:pre;color:#2a0505;-webkit-text-stroke:0.25px #2a0505;transform:scaleX(0.7440);transform-origin:0 0">ZZZZ-ZZZ-ZZZZ</div>
</div>
<div class="abs" style="left:123px;top:268px;width:267px;height:18px;overflow:hidden">
<div class="t" style="left:2.00px;top:3px;font:normal 14px/1 'Liberation Sans',sans-serif;white-space:pre;color:#2a0505;-webkit-text-stroke:0.1px #2a0505;transform:scale(0.8929,0.92);transform-origin:0 1px">배수배관</div>
</div>
<div class="abs" style="left:571px;top:268px;width:59px;height:18px;overflow:hidden">
<div class="t" style="left:2.00px;top:3px;font:normal 14px/1 'Liberation Sans',sans-serif;white-space:pre;color:#2a0505;-webkit-text-stroke:0.1px #2a0505;transform:scale(0.8929,0.92);transform-origin:0 1px">개소</div>
</div>
<div class="abs" style="left:691px;top:268px;width:59px;height:18px;overflow:hidden">
<div class="t" style="left:51.75px;top:3px;font:normal 14px/1 'Liberation Mono',monospace;white-space:pre;color:#2a0505;-webkit-text-stroke:0.25px #2a0505;transform:scaleX(0.7440);transform-origin:0 0">0</div>
</div>
<div class="abs" style="left:931px;top:268px;width:59px;height:18px;overflow:hidden">
<div class="t" style="left:51.75px;top:3px;font:normal 14px/1 'Liberation Mono',monospace;white-space:pre;color:#2a0505;-webkit-text-stroke:0.25px #2a0505;transform:scaleX(0.7440);transform-origin:0 0">0</div>
</div>
<div class="abs" style="left:995px;top:271px;width:13px;height:13px;border:1px solid #888;background:#fff"></div>
<svg class="abs" style="left:997px;top:273px" width="9" height="9" viewBox="0 0 9 9"><path d="M1 4.5 L3.5 7.5 L8 1" stroke="#000" stroke-width="1.8" fill="none"/></svg>
<div class="abs" style="left:0;top:287px;width:13px;height:19px;background:#6495ed;border-bottom:1px solid #9cbcf4;border-right:1px solid #9cbcf4"></div>
<div class="abs" style="left:2px;top:294px;width:4px;height:4px;background:#fff"></div>
<div class="abs" style="left:13px;top:287px;width:1118px;height:19px;background:#f08080;border-bottom:1px solid #e0b0b0"></div>
<div class="abs" style="left:122px;top:287px;width:1px;height:19px;background:#e0b0b0"></div>
<div class="abs" style="left:390px;top:287px;width:1px;height:19px;background:#e0b0b0"></div>
<div class="abs" style="left:570px;top:287px;width:1px;height:19px;background:#e0b0b0"></div>
<div class="abs" style="left:630px;top:287px;width:1px;height:19px;background:#e0b0b0"></div>
<div class="abs" style="left:690px;top:287px;width:1px;height:19px;background:#e0b0b0"></div>
<div class="abs" style="left:750px;top:287px;width:1px;height:19px;background:#e0b0b0"></div>
<div class="abs" style="left:930px;top:287px;width:1px;height:19px;background:#e0b0b0"></div>
<div class="abs" style="left:990px;top:287px;width:1px;height:19px;background:#e0b0b0"></div>
<div class="abs" style="left:1010px;top:287px;width:1px;height:19px;background:#e0b0b0"></div>
<div class="abs" style="left:1130px;top:287px;width:1px;height:19px;background:#e0b0b0"></div>
<div class="abs" style="left:13px;top:287px;width:109px;height:18px;overflow:hidden">
<div class="t" style="left:2.00px;top:3px;font:normal 14px/1 'Liberation Mono',monospace;white-space:pre;color:#2a0505;-webkit-text-stroke:0.25px #2a0505;transform:scaleX(0.7440);transform-origin:0 0">ZZZZ-ZZZ-ZZZZ</div>
</div>
<div class="abs" style="left:123px;top:287px;width:267px;height:18px;overflow:hidden">
<div class="t" style="left:2.00px;top:3px;font:normal 14px/1 'Liberation Sans',sans-serif;white-space:pre;color:#2a0505;-webkit-text-stroke:0.1px #2a0505;transform:scale(0.8929,0.92);transform-origin:0 1px">세면기주위</div>
<div class="t" style="left:64.50px;top:3px;font:normal 14px/1 'Liberation Mono',monospace;white-space:pre;color:#2a0505;-webkit-text-stroke:0.25px #2a0505;transform:scaleX(0.7440);transform-origin:0 0">(1</div>
<div class="t" style="left:77.00px;top:3px;font:normal 14px/1 'Liberation Sans',sans-serif;white-space:pre;color:#2a0505;-webkit-text-stroke:0.1px #2a0505;transform:scale(0.8929,0.92);transform-origin:0 1px">구</div>
<div class="t" style="left:89.50px;top:3px;font:normal 14px/1 'Liberation Mono',monospace;white-space:pre;color:#2a0505;-webkit-text-stroke:0.25px #2a0505;transform:scaleX(0.7440);transform-origin:0 0">)</div>
</div>
<div class="abs" style="left:571px;top:287px;width:59px;height:18px;overflow:hidden">
<div class="t" style="left:2.00px;top:3px;font:normal 14px/1 'Liberation Sans',sans-serif;white-space:pre;color:#2a0505;-webkit-text-stroke:0.1px #2a0505;transform:scale(0.8929,0.92);transform-origin:0 1px">개소</div>
</div>
<div class="abs" style="left:691px;top:287px;width:59px;height:18px;overflow:hidden">
<div class="t" style="left:51.75px;top:3px;font:normal 14px/1 'Liberation Mono',monospace;white-space:pre;color:#2a0505;-webkit-text-stroke:0.25px #2a0505;transform:scaleX(0.7440);transform-origin:0 0">6</div>
</div>
<div class="abs" style="left:751px;top:287px;width:179px;height:18px;overflow:hidden">
<div class="t" style="left:2.00px;top:3px;font:normal 14px/1 'Liberation Mono',monospace;white-space:pre;color:#2a0505;-webkit-text-stroke:0.25px #2a0505;transform:scaleX(0.7440);transform-origin:0 0">6</div>
</div>
<div class="abs" style="left:931px;top:287px;width:59px;height:18px;overflow:hidden">
<div class="t" style="left:51.75px;top:3px;font:normal 14px/1 'Liberation Mono',monospace;white-space:pre;color:#2a0505;-webkit-text-stroke:0.25px #2a0505;transform:scaleX(0.7440);transform-origin:0 0">0</div>
</div>
<div class="abs" style="left:995px;top:290px;width:13px;height:13px;border:1px solid #888;background:#fff"></div>
<svg class="abs" style="left:997px;top:292px" width="9" height="9" viewBox="0 0 9 9"><path d="M1 4.5 L3.5 7.5 L8 1" stroke="#000" stroke-width="1.8" fill="none"/></svg>
<div class="abs" style="left:0;top:306px;width:13px;height:19px;background:#6495ed;border-bottom:1px solid #9cbcf4;border-right:1px solid #9cbcf4"></div>
<div class="abs" style="left:2px;top:313px;width:4px;height:4px;background:#fff"></div>
<div class="abs" style="left:13px;top:306px;width:1118px;height:19px;background:#f08080;border-bottom:1px solid #e0b0b0"></div>
<div class="abs" style="left:122px;top:306px;width:1px;height:19px;background:#e0b0b0"></div>
<div class="abs" style="left:390px;top:306px;width:1px;height:19px;background:#e0b0b0"></div>
<div class="abs" style="left:570px;top:306px;width:1px;height:19px;background:#e0b0b0"></div>
<div class="abs" style="left:630px;top:306px;width:1px;height:19px;background:#e0b0b0"></div>
<div class="abs" style="left:690px;top:306px;width:1px;height:19px;background:#e0b0b0"></div>
<div class="abs" style="left:750px;top:306px;width:1px;height:19px;background:#e0b0b0"></div>
<div class="abs" style="left:930px;top:306px;width:1px;height:19px;background:#e0b0b0"></div>
<div class="abs" style="left:990px;top:306px;width:1px;height:19px;background:#e0b0b0"></div>
<div class="abs" style="left:1010px;top:306px;width:1px;height:19px;background:#e0b0b0"></div>
<div class="abs" style="left:1130px;top:306px;width:1px;height:19px;background:#e0b0b0"></div>
<div class="abs" style="left:13px;top:306px;width:109px;height:18px;overflow:hidden">
<div class="t" style="left:2.00px;top:3px;font:normal 14px/1 'Liberation Mono',monospace;white-space:pre;color:#2a0505;-webkit-text-stroke:0.25px #2a0505;transform:scaleX(0.7440);transform-origin:0 0">ZZZZ-ZZZ-ZZZZ</div>
</div>
<div class="abs" style="left:123px;top:306px;width:267px;height:18px;overflow:hidden">
<div class="t" style="left:2.00px;top:3px;font:normal 14px/1 'Liberation Sans',sans-serif;white-space:pre;color:#2a0505;-webkit-text-stroke:0.1px #2a0505;transform:scale(0.8929,0.92);transform-origin:0 1px">청소씽크주위</div>
<div class="t" style="left:77.00px;top:3px;font:normal 14px/1 'Liberation Mono',monospace;white-space:pre;color:#2a0505;-webkit-text-stroke:0.25px #2a0505;transform:scaleX(0.7440);transform-origin:0 0">(1</div>
<div class="t" style="left:89.50px;top:3px;font:normal 14px/1 'Liberation Sans',sans-serif;white-space:pre;color:#2a0505;-webkit-text-stroke:0.1px #2a0505;transform:scale(0.8929,0.92);transform-origin:0 1px">구</div>
<div class="t" style="left:102.00px;top:3px;font:normal 14px/1 'Liberation Mono',monospace;white-space:pre;color:#2a0505;-webkit-text-stroke:0.25px #2a0505;transform:scaleX(0.7440);transform-origin:0 0">)</div>
</div>
<div class="abs" style="left:571px;top:306px;width:59px;height:18px;overflow:hidden">
<div class="t" style="left:2.00px;top:3px;font:normal 14px/1 'Liberation Sans',sans-serif;white-space:pre;color:#2a0505;-webkit-text-stroke:0.1px #2a0505;transform:scale(0.8929,0.92);transform-origin:0 1px">개소</div>
</div>
<div class="abs" style="left:691px;top:306px;width:59px;height:18px;overflow:hidden">
<div class="t" style="left:51.75px;top:3px;font:normal 14px/1 'Liberation Mono',monospace;white-space:pre;color:#2a0505;-webkit-text-stroke:0.25px #2a0505;transform:scaleX(0.7440);transform-origin:0 0">1</div>
</div>
<div class="abs" style="left:751px;top:306px;width:179px;height:18px;overflow:hidden">
<div class="t" style="left:2.00px;top:3px;font:normal 14px/1 'Liberation Mono',monospace;white-space:pre;color:#2a0505;-webkit-text-stroke:0.25px #2a0505;transform:scaleX(0.7440);transform-origin:0 0">1</div>
</div>
<div class="abs" style="left:931px;top:306px;width:59px;height:18px;overflow:hidden">
<div class="t" style="left:51.75px;top:3px;font:normal 14px/1 'Liberation Mono',monospace;white-space:pre;color:#2a0505;-webkit-text-stroke:0.25px #2a0505;transform:scaleX(0.7440);transform-origin:0 0">0</div>
</div>
<div class="abs" style="left:995px;top:309px;width:13px;height:13px;border:1px solid #888;background:#fff"></div>
<svg class="abs" style="left:997px;top:311px" width="9" height="9" viewBox="0 0 9 9"><path d="M1 4.5 L3.5 7.5 L8 1" stroke="#000" stroke-width="1.8" fill="none"/></svg>
<div class="abs" style="left:0;top:325px;width:13px;height:19px;background:#6495ed;border-bottom:1px solid #9cbcf4;border-right:1px solid #9cbcf4"></div>
<div class="abs" style="left:2px;top:332px;width:4px;height:4px;background:#fff"></div>
<div class="abs" style="left:13px;top:325px;width:1118px;height:19px;background:#f08080;border-bottom:1px solid #e0b0b0"></div>
<div class="abs" style="left:122px;top:325px;width:1px;height:19px;background:#e0b0b0"></div>
<div class="abs" style="left:390px;top:325px;width:1px;height:19px;background:#e0b0b0"></div>
<div class="abs" style="left:570px;top:325px;width:1px;height:19px;background:#e0b0b0"></div>
<div class="abs" style="left:630px;top:325px;width:1px;height:19px;background:#e0b0b0"></div>
<div class="abs" style="left:690px;top:325px;width:1px;height:19px;background:#e0b0b0"></div>
<div class="abs" style="left:750px;top:325px;width:1px;height:19px;background:#e0b0b0"></div>
<div class="abs" style="left:930px;top:325px;width:1px;height:19px;background:#e0b0b0"></div>
<div class="abs" style="left:990px;top:325px;width:1px;height:19px;background:#e0b0b0"></div>
<div class="abs" style="left:1010px;top:325px;width:1px;height:19px;background:#e0b0b0"></div>
<div class="abs" style="left:1130px;top:325px;width:1px;height:19px;background:#e0b0b0"></div>
<div class="abs" style="left:13px;top:325px;width:109px;height:18px;overflow:hidden">
<div class="t" style="left:2.00px;top:3px;font:normal 14px/1 'Liberation Mono',monospace;white-space:pre;color:#2a0505;-webkit-text-stroke:0.25px #2a0505;transform:scaleX(0.7440);transform-origin:0 0">ZZZZ-ZZZ-ZZZZ</div>
</div>
<div class="abs" style="left:123px;top:325px;width:267px;height:18px;overflow:hidden">
<div class="t" style="left:2.00px;top:3px;font:normal 14px/1 'Liberation Mono',monospace;white-space:pre;color:#2a0505;-webkit-text-stroke:0.25px #2a0505;transform:scaleX(0.7440);transform-origin:0 0">F.D</div>
<div class="t" style="left:20.75px;top:3px;font:normal 14px/1 'Liberation Sans',sans-serif;white-space:pre;color:#2a0505;-webkit-text-stroke:0.1px #2a0505;transform:scale(0.8929,0.92);transform-origin:0 1px">주위</div>
<div class="t" style="left:45.75px;top:3px;font:normal 14px/1 'Liberation Mono',monospace;white-space:pre;color:#2a0505;-webkit-text-stroke:0.25px #2a0505;transform:scaleX(0.7440);transform-origin:0 0">(1</div>
<div class="t" style="left:58.25px;top:3px;font:normal 14px/1 'Liberation Sans',sans-serif;white-space:pre;color:#2a0505;-webkit-text-stroke:0.1px #2a0505;transform:scale(0.8929,0.92);transform-origin:0 1px">구</div>
<div class="t" style="left:70.75px;top:3px;font:normal 14px/1 'Liberation Mono',monospace;white-space:pre;color:#2a0505;-webkit-text-stroke:0.25px #2a0505;transform:scaleX(0.7440);transform-origin:0 0">)</div>
</div>
<div class="abs" style="left:571px;top:325px;width:59px;height:18px;overflow:hidden">
<div class="t" style="left:2.00px;top:3px;font:normal 14px/1 'Liberation Sans',sans-serif;white-space:pre;color:#2a0505;-webkit-text-stroke:0.1px #2a0505;transform:scale(0.8929,0.92);transform-origin:0 1px">개소</div>
</div>
<div class="abs" style="left:691px;top:325px;width:59px;height:18px;overflow:hidden">
<div class="t" style="left:45.50px;top:3px;font:normal 14px/1 'Liberation Mono',monospace;white-space:pre;color:#2a0505;-webkit-text-stroke:0.25px #2a0505;transform:scaleX(0.7440);transform-origin:0 0">10</div>
</div>
<div class="abs" style="left:751px;top:325px;width:179px;height:18px;overflow:hidden">
<div class="t" style="left:2.00px;top:3px;font:normal 14px/1 'Liberation Mono',monospace;white-space:pre;color:#2a0505;-webkit-text-stroke:0.25px #2a0505;transform:scaleX(0.7440);transform-origin:0 0">7+2+1</div>
</div>
<div class="abs" style="left:931px;top:325px;width:59px;height:18px;overflow:hidden">
<div class="t" style="left:51.75px;top:3px;font:normal 14px/1 'Liberation Mono',monospace;white-space:pre;color:#2a0505;-webkit-text-stroke:0.25px #2a0505;transform:scaleX(0.7440);transform-origin:0 0">0</div>
</div>
<div class="abs" style="left:995px;top:328px;width:13px;height:13px;border:1px solid #888;background:#fff"></div>
<svg class="abs" style="left:997px;top:330px" width="9" height="9" viewBox="0 0 9 9"><path d="M1 4.5 L3.5 7.5 L8 1" stroke="#000" stroke-width="1.8" fill="none"/></svg>
<div class="abs" style="left:0;top:344px;width:13px;height:19px;background:#6495ed;border-bottom:1px solid #9cbcf4;border-right:1px solid #9cbcf4"></div>
<div class="abs" style="left:2px;top:350px;width:4px;height:4px;background:#fff"></div><div class="abs" style="left:5px;top:353px;width:4px;height:4px;background:#40e0f0"></div>
<div class="abs" style="left:13px;top:344px;width:1118px;height:19px;background:#ffffff;border-bottom:1px solid #d4d4d4"></div>
<div class="abs" style="left:122px;top:344px;width:1px;height:19px;background:#d4d4d4"></div>
<div class="abs" style="left:390px;top:344px;width:1px;height:19px;background:#d4d4d4"></div>
<div class="abs" style="left:570px;top:344px;width:1px;height:19px;background:#d4d4d4"></div>
<div class="abs" style="left:630px;top:344px;width:1px;height:19px;background:#d4d4d4"></div>
<div class="abs" style="left:690px;top:344px;width:1px;height:19px;background:#d4d4d4"></div>
<div class="abs" style="left:750px;top:344px;width:1px;height:19px;background:#d4d4d4"></div>
<div class="abs" style="left:930px;top:344px;width:1px;height:19px;background:#d4d4d4"></div>
<div class="abs" style="left:990px;top:344px;width:1px;height:19px;background:#d4d4d4"></div>
<div class="abs" style="left:1010px;top:344px;width:1px;height:19px;background:#d4d4d4"></div>
<div class="abs" style="left:1130px;top:344px;width:1px;height:19px;background:#d4d4d4"></div>
<div class="abs" style="left:13px;top:344px;width:109px;height:18px;overflow:hidden">
<div class="t" style="left:2.00px;top:3px;font:normal 14px/1 'Liberation Mono',monospace;white-space:pre;color:#111;-webkit-text-stroke:0.25px #111;transform:scaleX(0.7440);transform-origin:0 0">40142185-20112005</div>
</div>
<div class="abs" style="left:123px;top:344px;width:267px;height:18px;overflow:hidden">
<div class="t" style="left:2.00px;top:3px;font:normal 14px/1 'Liberation Mono',monospace;white-space:pre;color:#111;-webkit-text-stroke:0.25px #111;transform:scaleX(0.7440);transform-origin:0 0">PVC</div>
<div class="t" style="left:20.75px;top:3px;font:normal 14px/1 'Liberation Sans',sans-serif;white-space:pre;color:#111;-webkit-text-stroke:0.1px #111;transform:scale(0.8929,0.92);transform-origin:0 1px">관</div>
<div class="t" style="left:33.25px;top:3px;font:normal 14px/1 'Liberation Mono',monospace;white-space:pre;color:#111;-webkit-text-stroke:0.25px #111;transform:scaleX(0.7440);transform-origin:0 0">(VG1)</div>
</div>
<div class="abs" style="left:391px;top:344px;width:179px;height:18px;overflow:hidden">
<div class="t" style="left:2.00px;top:3px;font:normal 14px/1 'Liberation Mono',monospace;white-space:pre;color:#111;-webkit-text-stroke:0.25px #111;transform:scaleX(0.7440);transform-origin:0 0">PVC</div>
<div class="t" style="left:20.75px;top:3px;font:normal 14px/1 'Liberation Sans',sans-serif;white-space:pre;color:#111;-webkit-text-stroke:0.1px #111;transform:scale(0.8929,0.92);transform-origin:0 1px">관</div>
<div class="t" style="left:33.25px;top:3px;font:normal 14px/1 'Liberation Mono',monospace;white-space:pre;color:#111;-webkit-text-stroke:0.25px #111;transform:scaleX(0.7440);transform-origin:0 0">(VG1), D75</div>
</div>
<div class="abs" style="left:571px;top:344px;width:59px;height:18px;overflow:hidden">
<div class="t" style="left:2.00px;top:3px;font:normal 14px/1 'Liberation Mono',monospace;white-space:pre;color:#111;-webkit-text-stroke:0.25px #111;transform:scaleX(0.7440);transform-origin:0 0">M</div>
</div>
<div class="abs" style="left:691px;top:344px;width:59px;height:18px;overflow:hidden">
<div class="t" style="left:33.00px;top:3px;font:normal 14px/1 'Liberation Mono',monospace;white-space:pre;color:#111;-webkit-text-stroke:0.25px #111;transform:scaleX(0.7440);transform-origin:0 0">28.2</div>
</div>
<div class="abs" style="left:751px;top:344px;width:179px;height:18px;overflow:hidden">
<div class="t" style="left:2.00px;top:3px;font:normal 14px/1 'Liberation Mono',monospace;white-space:pre;color:#111;-webkit-text-stroke:0.25px #111;transform:scaleX(0.7440);transform-origin:0 0">3.2+3.4+1.5+2.5+5.1+3.4+1.2+2</div>
</div>
<div class="abs" style="left:931px;top:344px;width:59px;height:18px;overflow:hidden">
<div class="t" style="left:51.75px;top:3px;font:normal 14px/1 'Liberation Mono',monospace;white-space:pre;color:#111;-webkit-text-stroke:0.25px #111;transform:scaleX(0.7440);transform-origin:0 0">0</div>
</div>
<div class="abs" style="left:995px;top:347px;width:13px;height:13px;border:1px solid #888;background:#fff"></div>
<div class="abs" style="left:0;top:363px;width:13px;height:19px;background:#6495ed;border-bottom:1px solid #9cbcf4;border-right:1px solid #9cbcf4"></div>
<div class="abs" style="left:2px;top:369px;width:4px;height:4px;background:#fff"></div><div class="abs" style="left:5px;top:372px;width:4px;height:4px;background:#40e0f0"></div>
<div class="abs" style="left:13px;top:363px;width:1118px;height:19px;background:#ffffff;border-bottom:1px solid #d4d4d4"></div>
<div class="abs" style="left:122px;top:363px;width:1px;height:19px;background:#d4d4d4"></div>
<div class="abs" style="left:390px;top:363px;width:1px;height:19px;background:#d4d4d4"></div>
<div class="abs" style="left:570px;top:363px;width:1px;height:19px;background:#d4d4d4"></div>
<div class="abs" style="left:630px;top:363px;width:1px;height:19px;background:#d4d4d4"></div>
<div class="abs" style="left:690px;top:363px;width:1px;height:19px;background:#d4d4d4"></div>
<div class="abs" style="left:750px;top:363px;width:1px;height:19px;background:#d4d4d4"></div>
<div class="abs" style="left:930px;top:363px;width:1px;height:19px;background:#d4d4d4"></div>
<div class="abs" style="left:990px;top:363px;width:1px;height:19px;background:#d4d4d4"></div>
<div class="abs" style="left:1010px;top:363px;width:1px;height:19px;background:#d4d4d4"></div>
<div class="abs" style="left:1130px;top:363px;width:1px;height:19px;background:#d4d4d4"></div>
<div class="abs" style="left:13px;top:363px;width:109px;height:18px;overflow:hidden">
<div class="t" style="left:2.00px;top:3px;font:normal 14px/1 'Liberation Mono',monospace;white-space:pre;color:#111;-webkit-text-stroke:0.25px #111;transform:scaleX(0.7440);transform-origin:0 0">40142185-20112006</div>
</div>
<div class="abs" style="left:123px;top:363px;width:267px;height:18px;overflow:hidden">
<div class="t" style="left:2.00px;top:3px;font:normal 14px/1 'Liberation Mono',monospace;white-space:pre;color:#111;-webkit-text-stroke:0.25px #111;transform:scaleX(0.7440);transform-origin:0 0">PVC</div>
<div class="t" style="left:20.75px;top:3px;font:normal 14px/1 'Liberation Sans',sans-serif;white-space:pre;color:#111;-webkit-text-stroke:0.1px #111;transform:scale(0.8929,0.92);transform-origin:0 1px">관</div>
<div class="t" style="left:33.25px;top:3px;font:normal 14px/1 'Liberation Mono',monospace;white-space:pre;color:#111;-webkit-text-stroke:0.25px #111;transform:scaleX(0.7440);transform-origin:0 0">(VG1)</div>
</div>
<div class="abs" style="left:391px;top:363px;width:179px;height:18px;overflow:hidden">
<div class="t" style="left:2.00px;top:3px;font:normal 14px/1 'Liberation Mono',monospace;white-space:pre;color:#111;-webkit-text-stroke:0.25px #111;transform:scaleX(0.7440);transform-origin:0 0">PVC</div>
<div class="t" style="left:20.75px;top:3px;font:normal 14px/1 'Liberation Sans',sans-serif;white-space:pre;color:#111;-webkit-text-stroke:0.1px #111;transform:scale(0.8929,0.92);transform-origin:0 1px">관</div>
<div class="t" style="left:33.25px;top:3px;font:normal 14px/1 'Liberation Mono',monospace;white-space:pre;color:#111;-webkit-text-stroke:0.25px #111;transform:scaleX(0.7440);transform-origin:0 0">(VG1), D100</div>
</div>
<div class="abs" style="left:571px;top:363px;width:59px;height:18px;overflow:hidden">
<div class="t" style="left:2.00px;top:3px;font:normal 14px/1 'Liberation Mono',monospace;white-space:pre;color:#111;-webkit-text-stroke:0.25px #111;transform:scaleX(0.7440);transform-origin:0 0">M</div>
</div>
<div class="abs" style="left:691px;top:363px;width:59px;height:18px;overflow:hidden">
<div class="t" style="left:33.00px;top:3px;font:normal 14px/1 'Liberation Mono',monospace;white-space:pre;color:#111;-webkit-text-stroke:0.25px #111;transform:scaleX(0.7440);transform-origin:0 0">11.8</div>
</div>
<div class="abs" style="left:751px;top:363px;width:179px;height:18px;overflow:hidden">
<div class="t" style="left:2.00px;top:3px;font:normal 14px/1 'Liberation Mono',monospace;white-space:pre;color:#111;-webkit-text-stroke:0.25px #111;transform:scaleX(0.7440);transform-origin:0 0">5.1+2.7+2.7+1.3</div>
</div>
<div class="abs" style="left:931px;top:363px;width:59px;height:18px;overflow:hidden">
<div class="t" style="left:51.75px;top:3px;font:normal 14px/1 'Liberation Mono',monospace;white-space:pre;color:#111;-webkit-text-stroke:0.25px #111;transform:scaleX(0.7440);transform-origin:0 0">0</div>
</div>
<div class="abs" style="left:995px;top:366px;width:13px;height:13px;border:1px solid #888;background:#fff"></div>
<div class="abs" style="left:0;top:382px;width:13px;height:19px;background:#6495ed;border-bottom:1px solid #9cbcf4;border-right:1px solid #9cbcf4"></div>
<div class="abs" style="left:13px;top:382px;width:1118px;height:19px;background:#ffffff;border-bottom:1px solid #d4d4d4"></div>
<div class="abs" style="left:122px;top:382px;width:1px;height:19px;background:#d4d4d4"></div>
<div class="abs" style="left:390px;top:382px;width:1px;height:19px;background:#d4d4d4"></div>
<div class="abs" style="left:570px;top:382px;width:1px;height:19px;background:#d4d4d4"></div>
<div class="abs" style="left:630px;top:382px;width:1px;height:19px;background:#d4d4d4"></div>
<div class="abs" style="left:690px;top:382px;width:1px;height:19px;background:#d4d4d4"></div>
<div class="abs" style="left:750px;top:382px;width:1px;height:19px;background:#d4d4d4"></div>
<div class="abs" style="left:930px;top:382px;width:1px;height:19px;background:#d4d4d4"></div>
<div class="abs" style="left:990px;top:382px;width:1px;height:19px;background:#d4d4d4"></div>
<div class="abs" style="left:1010px;top:382px;width:1px;height:19px;background:#d4d4d4"></div>
<div class="abs" style="left:1130px;top:382px;width:1px;height:19px;background:#d4d4d4"></div>
<div class="abs" style="left:13px;top:382px;width:109px;height:18px;overflow:hidden">
<div class="t" style="left:2.00px;top:3px;font:normal 14px/1 'Liberation Mono',monospace;white-space:pre;color:#111;-webkit-text-stroke:0.25px #111;transform:scaleX(0.7440);transform-origin:0 0">40142396-31872306</div>
</div>
<div class="abs" style="left:123px;top:382px;width:267px;height:18px;overflow:hidden">
<div class="t" style="left:2.00px;top:3px;font:normal 14px/1 'Liberation Mono',monospace;white-space:pre;color:#111;-webkit-text-stroke:0.25px #111;transform:scaleX(0.7440);transform-origin:0 0">C-LT</div>
<div class="t" style="left:27.00px;top:3px;font:normal 14px/1 'Liberation Sans',sans-serif;white-space:pre;color:#111;-webkit-text-stroke:0.1px #111;transform:scale(0.8929,0.92);transform-origin:0 1px">관</div>
<div class="t" style="left:39.50px;top:3px;font:normal 14px/1 'Liberation Mono',monospace;white-space:pre;color:#111;-webkit-text-stroke:0.25px #111;transform:scaleX(0.7440);transform-origin:0 0"> (DRF) D75x50</div>
</div>
<div class="abs" style="left:391px;top:382px;width:179px;height:18px;overflow:hidden">
<div class="t" style="left:2.00px;top:3px;font:normal 14px/1 'Liberation Mono',monospace;white-space:pre;color:#111;-webkit-text-stroke:0.25px #111;transform:scaleX(0.7440);transform-origin:0 0">C-LT</div>
<div class="t" style="left:27.00px;top:3px;font:normal 14px/1 'Liberation Sans',sans-serif;white-space:pre;color:#111;-webkit-text-stroke:0.1px #111;transform:scale(0.8929,0.92);transform-origin:0 1px">관</div>
<div class="t" style="left:39.50px;top:3px;font:normal 14px/1 'Liberation Mono',monospace;white-space:pre;color:#111;-webkit-text-stroke:0.25px #111;transform:scaleX(0.7440);transform-origin:0 0"> (DRF) D75x50</div>
</div>
<div class="abs" style="left:571px;top:382px;width:59px;height:18px;overflow:hidden">
<div class="t" style="left:2.00px;top:3px;font:normal 14px/1 'Liberation Sans',sans-serif;white-space:pre;color:#111;-webkit-text-stroke:0.1px #111;transform:scale(0.8929,0.92);transform-origin:0 1px">개</div>
</div>
<div class="abs" style="left:691px;top:382px;width:59px;height:18px;overflow:hidden">
<div class="t" style="left:51.75px;top:3px;font:normal 14px/1 'Liberation Mono',monospace;white-space:pre;color:#111;-webkit-text-stroke:0.25px #111;transform:scaleX(0.7440);transform-origin:0 0">1</div>
</div>
<div class="abs" style="left:751px;top:382px;width:179px;height:18px;overflow:hidden">
<div class="t" style="left:2.00px;top:3px;font:normal 14px/1 'Liberation Mono',monospace;white-space:pre;color:#111;-webkit-text-stroke:0.25px #111;transform:scaleX(0.7440);transform-origin:0 0">1</div>
</div>
<div class="abs" style="left:931px;top:382px;width:59px;height:18px;overflow:hidden">
<div class="t" style="left:51.75px;top:3px;font:normal 14px/1 'Liberation Mono',monospace;white-space:pre;color:#111;-webkit-text-stroke:0.25px #111;transform:scaleX(0.7440);transform-origin:0 0">0</div>
</div>
<div class="abs" style="left:995px;top:385px;width:13px;height:13px;border:1px solid #888;background:#fff"></div>
<div class="abs" style="left:0;top:401px;width:13px;height:19px;background:#6495ed;border-bottom:1px solid #9cbcf4;border-right:1px solid #9cbcf4"></div>
<div class="abs" style="left:13px;top:401px;width:1118px;height:19px;background:#ffffff;border-bottom:1px solid #d4d4d4"></div>
<div class="abs" style="left:122px;top:401px;width:1px;height:19px;background:#d4d4d4"></div>
<div class="abs" style="left:390px;top:401px;width:1px;height:19px;background:#d4d4d4"></div>
<div class="abs" style="left:570px;top:401px;width:1px;height:19px;background:#d4d4d4"></div>
<div class="abs" style="left:630px;top:401px;width:1px;height:19px;background:#d4d4d4"></div>
<div class="abs" style="left:690px;top:401px;width:1px;height:19px;background:#d4d4d4"></div>
<div class="abs" style="left:750px;top:401px;width:1px;height:19px;background:#d4d4d4"></div>
<div class="abs" style="left:930px;top:401px;width:1px;height:19px;background:#d4d4d4"></div>
<div class="abs" style="left:990px;top:401px;width:1px;height:19px;background:#d4d4d4"></div>
<div class="abs" style="left:1010px;top:401px;width:1px;height:19px;background:#d4d4d4"></div>
<div class="abs" style="left:1130px;top:401px;width:1px;height:19px;background:#d4d4d4"></div>
<div class="abs" style="left:13px;top:401px;width:109px;height:18px;overflow:hidden">
<div class="t" style="left:2.00px;top:3px;font:normal 14px/1 'Liberation Mono',monospace;white-space:pre;color:#111;-webkit-text-stroke:0.25px #111;transform:scaleX(0.7440);transform-origin:0 0">40142396-31872310</div>
</div>
<div class="abs" style="left:123px;top:401px;width:267px;height:18px;overflow:hidden">
<div class="t" style="left:2.00px;top:3px;font:normal 14px/1 'Liberation Mono',monospace;white-space:pre;color:#111;-webkit-text-stroke:0.25px #111;transform:scaleX(0.7440);transform-origin:0 0">C-LT</div>
<div class="t" style="left:27.00px;top:3px;font:normal 14px/1 'Liberation Sans',sans-serif;white-space:pre;color:#111;-webkit-text-stroke:0.1px #111;transform:scale(0.8929,0.92);transform-origin:0 1px">관</div>
<div class="t" style="left:39.50px;top:3px;font:normal 14px/1 'Liberation Mono',monospace;white-space:pre;color:#111;-webkit-text-stroke:0.25px #111;transform:scaleX(0.7440);transform-origin:0 0"> (DRF) D100x100</div>
</div>
<div class="abs" style="left:391px;top:401px;width:179px;height:18px;overflow:hidden">
<div class="t" style="left:2.00px;top:3px;font:normal 14px/1 'Liberation Mono',monospace;white-space:pre;color:#111;-webkit-text-stroke:0.25px #111;transform:scaleX(0.7440);transform-origin:0 0">C-LT</div>
<div class="t" style="left:27.00px;top:3px;font:normal 14px/1 'Liberation Sans',sans-serif;white-space:pre;color:#111;-webkit-text-stroke:0.1px #111;transform:scale(0.8929,0.92);transform-origin:0 1px">관</div>
<div class="t" style="left:39.50px;top:3px;font:normal 14px/1 'Liberation Mono',monospace;white-space:pre;color:#111;-webkit-text-stroke:0.25px #111;transform:scaleX(0.7440);transform-origin:0 0"> (DRF) D100x100</div>
</div>
<div class="abs" style="left:571px;top:401px;width:59px;height:18px;overflow:hidden">
<div class="t" style="left:2.00px;top:3px;font:normal 14px/1 'Liberation Sans',sans-serif;white-space:pre;color:#111;-webkit-text-stroke:0.1px #111;transform:scale(0.8929,0.92);transform-origin:0 1px">개</div>
</div>
<div class="abs" style="left:691px;top:401px;width:59px;height:18px;overflow:hidden">
<div class="t" style="left:51.75px;top:3px;font:normal 14px/1 'Liberation Mono',monospace;white-space:pre;color:#111;-webkit-text-stroke:0.25px #111;transform:scaleX(0.7440);transform-origin:0 0">1</div>
</div>
<div class="abs" style="left:751px;top:401px;width:179px;height:18px;overflow:hidden">
<div class="t" style="left:2.00px;top:3px;font:normal 14px/1 'Liberation Mono',monospace;white-space:pre;color:#111;-webkit-text-stroke:0.25px #111;transform:scaleX(0.7440);transform-origin:0 0">1</div>
</div>
<div class="abs" style="left:931px;top:401px;width:59px;height:18px;overflow:hidden">
<div class="t" style="left:51.75px;top:3px;font:normal 14px/1 'Liberation Mono',monospace;white-space:pre;color:#111;-webkit-text-stroke:0.25px #111;transform:scaleX(0.7440);transform-origin:0 0">0</div>
</div>
<div class="abs" style="left:995px;top:404px;width:13px;height:13px;border:1px solid #888;background:#fff"></div>
<div class="abs" style="left:0;top:420px;width:13px;height:19px;background:#6495ed;border-bottom:1px solid #9cbcf4;border-right:1px solid #9cbcf4"></div>
<div class="abs" style="left:13px;top:420px;width:1118px;height:19px;background:#ffffff;border-bottom:1px solid #d4d4d4"></div>
<div class="abs" style="left:122px;top:420px;width:1px;height:19px;background:#d4d4d4"></div>
<div class="abs" style="left:390px;top:420px;width:1px;height:19px;background:#d4d4d4"></div>
<div class="abs" style="left:570px;top:420px;width:1px;height:19px;background:#d4d4d4"></div>
<div class="abs" style="left:630px;top:420px;width:1px;height:19px;background:#d4d4d4"></div>
<div class="abs" style="left:690px;top:420px;width:1px;height:19px;background:#d4d4d4"></div>
<div class="abs" style="left:750px;top:420px;width:1px;height:19px;background:#d4d4d4"></div>
<div class="abs" style="left:930px;top:420px;width:1px;height:19px;background:#d4d4d4"></div>
<div class="abs" style="left:990px;top:420px;width:1px;height:19px;background:#d4d4d4"></div>
<div class="abs" style="left:1010px;top:420px;width:1px;height:19px;background:#d4d4d4"></div>
<div class="abs" style="left:1130px;top:420px;width:1px;height:19px;background:#d4d4d4"></div>
<div class="abs" style="left:13px;top:420px;width:109px;height:18px;overflow:hidden">
<div class="t" style="left:2.00px;top:3px;font:normal 14px/1 'Liberation Mono',monospace;white-space:pre;color:#111;-webkit-text-stroke:0.25px #111;transform:scaleX(0.7440);transform-origin:0 0">40142396-31872309</div>
</div>
<div class="abs" style="left:123px;top:420px;width:267px;height:18px;overflow:hidden">
<div class="t" style="left:2.00px;top:3px;font:normal 14px/1 'Liberation Mono',monospace;white-space:pre;color:#111;-webkit-text-stroke:0.25px #111;transform:scaleX(0.7440);transform-origin:0 0">C-LT</div>
<div class="t" style="left:27.00px;top:3px;font:normal 14px/1 'Liberation Sans',sans-serif;white-space:pre;color:#111;-webkit-text-stroke:0.1px #111;transform:scale(0.8929,0.92);transform-origin:0 1px">관</div>
<div class="t" style="left:39.50px;top:3px;font:normal 14px/1 'Liberation Mono',monospace;white-space:pre;color:#111;-webkit-text-stroke:0.25px #111;transform:scaleX(0.7440);transform-origin:0 0"> (DRF) D100x75</div>
</div>
<div class="abs" style="left:391px;top:420px;width:179px;height:18px;overflow:hidden">
<div class="t" style="left:2.00px;top:3px;font:normal 14px/1 'Liberation Mono',monospace;white-space:pre;color:#111;-webkit-text-stroke:0.25px #111;transform:scaleX(0.7440);transform-origin:0 0">C-LT</div>
<div class="t" style="left:27.00px;top:3px;font:normal 14px/1 'Liberation Sans',sans-serif;white-space:pre;color:#111;-webkit-text-stroke:0.1px #111;transform:scale(0.8929,0.92);transform-origin:0 1px">관</div>
<div class="t" style="left:39.50px;top:3px;font:normal 14px/1 'Liberation Mono',monospace;white-space:pre;color:#111;-webkit-text-stroke:0.25px #111;transform:scaleX(0.7440);transform-origin:0 0"> (DRF) D100x75</div>
</div>
<div class="abs" style="left:571px;top:420px;width:59px;height:18px;overflow:hidden">
<div class="t" style="left:2.00px;top:3px;font:normal 14px/1 'Liberation Sans',sans-serif;white-space:pre;color:#111;-webkit-text-stroke:0.1px #111;transform:scale(0.8929,0.92);transform-origin:0 1px">개</div>
</div>
<div class="abs" style="left:691px;top:420px;width:59px;height:18px;overflow:hidden">
<div class="t" style="left:51.75px;top:3px;font:normal 14px/1 'Liberation Mono',monospace;white-space:pre;color:#111;-webkit-text-stroke:0.25px #111;transform:scaleX(0.7440);transform-origin:0 0">3</div>
</div>
<div class="abs" style="left:751px;top:420px;width:179px;height:18px;overflow:hidden">
<div class="t" style="left:2.00px;top:3px;font:normal 14px/1 'Liberation Mono',monospace;white-space:pre;color:#111;-webkit-text-stroke:0.25px #111;transform:scaleX(0.7440);transform-origin:0 0">2+1</div>
</div>
<div class="abs" style="left:931px;top:420px;width:59px;height:18px;overflow:hidden">
<div class="t" style="left:51.75px;top:3px;font:normal 14px/1 'Liberation Mono',monospace;white-space:pre;color:#111;-webkit-text-stroke:0.25px #111;transform:scaleX(0.7440);transform-origin:0 0">0</div>
</div>
<div class="abs" style="left:995px;top:423px;width:13px;height:13px;border:1px solid #888;background:#fff"></div>
<div class="abs" style="left:0;top:439px;width:13px;height:19px;background:#6495ed;border-bottom:1px solid #9cbcf4;border-right:1px solid #9cbcf4"></div>
<div class="abs" style="left:13px;top:439px;width:1118px;height:19px;background:#ffffff;border-bottom:1px solid #d4d4d4"></div>
<div class="abs" style="left:122px;top:439px;width:1px;height:19px;background:#d4d4d4"></div>
<div class="abs" style="left:390px;top:439px;width:1px;height:19px;background:#d4d4d4"></div>
<div class="abs" style="left:570px;top:439px;width:1px;height:19px;background:#d4d4d4"></div>
<div class="abs" style="left:630px;top:439px;width:1px;height:19px;background:#d4d4d4"></div>
<div class="abs" style="left:690px;top:439px;width:1px;height:19px;background:#d4d4d4"></div>
<div class="abs" style="left:750px;top:439px;width:1px;height:19px;background:#d4d4d4"></div>
<div class="abs" style="left:930px;top:439px;width:1px;height:19px;background:#d4d4d4"></div>
<div class="abs" style="left:990px;top:439px;width:1px;height:19px;background:#d4d4d4"></div>
<div class="abs" style="left:1010px;top:439px;width:1px;height:19px;background:#d4d4d4"></div>
<div class="abs" style="left:1130px;top:439px;width:1px;height:19px;background:#d4d4d4"></div>
<div class="abs" style="left:13px;top:439px;width:109px;height:18px;overflow:hidden">
<div class="t" style="left:2.00px;top:3px;font:normal 14px/1 'Liberation Mono',monospace;white-space:pre;color:#111;-webkit-text-stroke:0.25px #111;transform:scaleX(0.7440);transform-origin:0 0">40142396-31872308</div>
</div>
<div class="abs" style="left:123px;top:439px;width:267px;height:18px;overflow:hidden">
<div class="t" style="left:2.00px;top:3px;font:normal 14px/1 'Liberation Mono',monospace;white-space:pre;color:#111;-webkit-text-stroke:0.25px #111;transform:scaleX(0.7440);transform-origin:0 0">C-LT</div>
<div class="t" style="left:27.00px;top:3px;font:normal 14px/1 'Liberation Sans',sans-serif;white-space:pre;color:#111;-webkit-text-stroke:0.1px #111;transform:scale(0.8929,0.92);transform-origin:0 1px">관</div>
<div class="t" style="left:39.50px;top:3px;font:normal 14px/1 'Liberation Mono',monospace;white-space:pre;color:#111;-webkit-text-stroke:0.25px #111;transform:scaleX(0.7440);transform-origin:0 0"> (DRF) D100x50</div>
</div>
<div class="abs" style="left:391px;top:439px;width:179px;height:18px;overflow:hidden">
<div class="t" style="left:2.00px;top:3px;font:normal 14px/1 'Liberation Mono',monospace;white-space:pre;color:#111;-webkit-text-stroke:0.25px #111;transform:scaleX(0.7440);transform-origin:0 0">C-LT</div>
<div class="t" style="left:27.00px;top:3px;font:normal 14px/1 'Liberation Sans',sans-serif;white-space:pre;color:#111;-webkit-text-stroke:0.1px #111;transform:scale(0.8929,0.92);transform-origin:0 1px">관</div>
<div class="t" style="left:39.50px;top:3px;font:normal 14px/1 'Liberation Mono',monospace;white-space:pre;color:#111;-webkit-text-stroke:0.25px #111;transform:scaleX(0.7440);transform-origin:0 0"> (DRF) D100x50</div>
</div>
<div class="abs" style="left:571px;top:439px;width:59px;height:18px;overflow:hidden">
<div class="t" style="left:2.00px;top:3px;font:normal 14px/1 'Liberation Sans',sans-serif;white-space:pre;color:#111;-webkit-text-stroke:0.1px #111;transform:scale(0.8929,0.92);transform-origin:0 1px">개</div>
</div>
<div class="abs" style="left:691px;top:439px;width:59px;height:18px;overflow:hidden">
<div class="t" style="left:51.75px;top:3px;font:normal 14px/1 'Liberation Mono',monospace;white-space:pre;color:#111;-webkit-text-stroke:0.25px #111;transform:scaleX(0.7440);transform-origin:0 0">3</div>
</div>
<div class="abs" style="left:751px;top:439px;width:179px;height:18px;overflow:hidden">
<div class="t" style="left:2.00px;top:3px;font:normal 14px/1 'Liberation Mono',monospace;white-space:pre;color:#111;-webkit-text-stroke:0.25px #111;transform:scaleX(0.7440);transform-origin:0 0">1+1+1</div>
</div>
<div class="abs" style="left:931px;top:439px;width:59px;height:18px;overflow:hidden">
<div class="t" style="left:51.75px;top:3px;font:normal 14px/1 'Liberation Mono',monospace;white-space:pre;color:#111;-webkit-text-stroke:0.25px #111;transform:scaleX(0.7440);transform-origin:0 0">0</div>
</div>
<div class="abs" style="left:995px;top:442px;width:13px;height:13px;border:1px solid #888;background:#fff"></div>
<div class="abs" style="left:0;top:458px;width:13px;height:19px;background:#6495ed;border-bottom:1px solid #9cbcf4;border-right:1px solid #9cbcf4"></div>
<div class="abs" style="left:13px;top:458px;width:1118px;height:19px;background:#ffffff;border-bottom:1px solid #d4d4d4"></div>
<div class="abs" style="left:122px;top:458px;width:1px;height:19px;background:#d4d4d4"></div>
<div class="abs" style="left:390px;top:458px;width:1px;height:19px;background:#d4d4d4"></div>
<div class="abs" style="left:570px;top:458px;width:1px;height:19px;background:#d4d4d4"></div>
<div class="abs" style="left:630px;top:458px;width:1px;height:19px;background:#d4d4d4"></div>
<div class="abs" style="left:690px;top:458px;width:1px;height:19px;background:#d4d4d4"></div>
<div class="abs" style="left:750px;top:458px;width:1px;height:19px;background:#d4d4d4"></div>
<div class="abs" style="left:930px;top:458px;width:1px;height:19px;background:#d4d4d4"></div>
<div class="abs" style="left:990px;top:458px;width:1px;height:19px;background:#d4d4d4"></div>
<div class="abs" style="left:1010px;top:458px;width:1px;height:19px;background:#d4d4d4"></div>
<div class="abs" style="left:1130px;top:458px;width:1px;height:19px;background:#d4d4d4"></div>
<div class="abs" style="left:13px;top:458px;width:109px;height:18px;overflow:hidden">
<div class="t" style="left:2.00px;top:3px;font:normal 14px/1 'Liberation Mono',monospace;white-space:pre;color:#111;-webkit-text-stroke:0.25px #111;transform:scaleX(0.7440);transform-origin:0 0">40142396-31872307</div>
</div>
<div class="abs" style="left:123px;top:458px;width:267px;height:18px;overflow:hidden">
<div class="t" style="left:2.00px;top:3px;font:normal 14px/1 'Liberation Mono',monospace;white-space:pre;color:#111;-webkit-text-stroke:0.25px #111;transform:scaleX(0.7440);transform-origin:0 0">C-LT</div>
<div class="t" style="left:27.00px;top:3px;font:normal 14px/1 'Liberation Sans',sans-serif;white-space:pre;color:#111;-webkit-text-stroke:0.1px #111;transform:scale(0.8929,0.92);transform-origin:0 1px">관</div>
<div class="t" style="left:39.50px;top:3px;font:normal 14px/1 'Liberation Mono',monospace;white-space:pre;color:#111;-webkit-text-stroke:0.25px #111;transform:scaleX(0.7440);transform-origin:0 0"> (DRF) D75x75</div>
</div>
<div class="abs" style="left:391px;top:458px;width:179px;height:18px;overflow:hidden">
<div class="t" style="left:2.00px;top:3px;font:normal 14px/1 'Liberation Mono',monospace;white-space:pre;color:#111;-webkit-text-stroke:0.25px #111;transform:scaleX(0.7440);transform-origin:0 0">C-LT</div>
<div class="t" style="left:27.00px;top:3px;font:normal 14px/1 'Liberation Sans',sans-serif;white-space:pre;color:#111;-webkit-text-stroke:0.1px #111;transform:scale(0.8929,0.92);transform-origin:0 1px">관</div>
<div class="t" style="left:39.50px;top:3px;font:normal 14px/1 'Liberation Mono',monospace;white-space:pre;color:#111;-webkit-text-stroke:0.25px #111;transform:scaleX(0.7440);transform-origin:0 0"> (DRF) D75x75</div>
</div>
<div class="abs" style="left:571px;top:458px;width:59px;height:18px;overflow:hidden">
<div class="t" style="left:2.00px;top:3px;font:normal 14px/1 'Liberation Sans',sans-serif;white-space:pre;color:#111;-webkit-text-stroke:0.1px #111;transform:scale(0.8929,0.92);transform-origin:0 1px">개</div>
</div>
<div class="abs" style="left:691px;top:458px;width:59px;height:18px;overflow:hidden">
<div class="t" style="left:51.75px;top:3px;font:normal 14px/1 'Liberation Mono',monospace;white-space:pre;color:#111;-webkit-text-stroke:0.25px #111;transform:scaleX(0.7440);transform-origin:0 0">4</div>
</div>
<div class="abs" style="left:751px;top:458px;width:179px;height:18px;overflow:hidden">
<div class="t" style="left:2.00px;top:3px;font:normal 14px/1 'Liberation Mono',monospace;white-space:pre;color:#111;-webkit-text-stroke:0.25px #111;transform:scaleX(0.7440);transform-origin:0 0">1+1+1+1</div>
</div>
<div class="abs" style="left:931px;top:458px;width:59px;height:18px;overflow:hidden">
<div class="t" style="left:51.75px;top:3px;font:normal 14px/1 'Liberation Mono',monospace;white-space:pre;color:#111;-webkit-text-stroke:0.25px #111;transform:scaleX(0.7440);transform-origin:0 0">0</div>
</div>
<div class="abs" style="left:995px;top:461px;width:13px;height:13px;border:1px solid #888;background:#fff"></div>
<div class="abs" style="left:0;top:477px;width:13px;height:19px;background:#6495ed;border-bottom:1px solid #9cbcf4;border-right:1px solid #9cbcf4"></div>
<div class="abs" style="left:13px;top:477px;width:1118px;height:19px;background:#ffffff;border-bottom:1px solid #d4d4d4"></div>
<div class="abs" style="left:122px;top:477px;width:1px;height:19px;background:#d4d4d4"></div>
<div class="abs" style="left:390px;top:477px;width:1px;height:19px;background:#d4d4d4"></div>
<div class="abs" style="left:570px;top:477px;width:1px;height:19px;background:#d4d4d4"></div>
<div class="abs" style="left:630px;top:477px;width:1px;height:19px;background:#d4d4d4"></div>
<div class="abs" style="left:690px;top:477px;width:1px;height:19px;background:#d4d4d4"></div>
<div class="abs" style="left:750px;top:477px;width:1px;height:19px;background:#d4d4d4"></div>
<div class="abs" style="left:930px;top:477px;width:1px;height:19px;background:#d4d4d4"></div>
<div class="abs" style="left:990px;top:477px;width:1px;height:19px;background:#d4d4d4"></div>
<div class="abs" style="left:1010px;top:477px;width:1px;height:19px;background:#d4d4d4"></div>
<div class="abs" style="left:1130px;top:477px;width:1px;height:19px;background:#d4d4d4"></div>
<div class="abs" style="left:13px;top:477px;width:109px;height:18px;overflow:hidden">
<div class="t" style="left:2.00px;top:3px;font:normal 14px/1 'Liberation Mono',monospace;white-space:pre;color:#111;-webkit-text-stroke:0.25px #111;transform:scaleX(0.7440);transform-origin:0 0">40142396-21872023</div>
</div>
<div class="abs" style="left:123px;top:477px;width:267px;height:18px;overflow:hidden">
<div class="t" style="left:2.00px;top:3px;font:normal 14px/1 'Liberation Sans',sans-serif;white-space:pre;color:#111;-webkit-text-stroke:0.1px #111;transform:scale(0.8929,0.92);transform-origin:0 1px">일반용경질폴리염화비닐이음관</div>
</div>
<div class="abs" style="left:391px;top:477px;width:179px;height:18px;overflow:hidden">
<div class="t" style="left:2.00px;top:3px;font:normal 14px/1 'Liberation Mono',monospace;white-space:pre;color:#111;-webkit-text-stroke:0.25px #111;transform:scaleX(0.7440);transform-origin:0 0">LT</div>
<div class="t" style="left:14.50px;top:3px;font:normal 14px/1 'Liberation Sans',sans-serif;white-space:pre;color:#111;-webkit-text-stroke:0.1px #111;transform:scale(0.8929,0.92);transform-origin:0 1px">관</div>
<div class="t" style="left:27.00px;top:3px;font:normal 14px/1 'Liberation Mono',monospace;white-space:pre;color:#111;-webkit-text-stroke:0.25px #111;transform:scaleX(0.7440);transform-origin:0 0"> (DRF) D75x50</div>
</div>
<div class="abs" style="left:571px;top:477px;width:59px;height:18px;overflow:hidden">
<div class="t" style="left:2.00px;top:3px;font:normal 14px/1 'Liberation Sans',sans-serif;white-space:pre;color:#111;-webkit-text-stroke:0.1px #111;transform:scale(0.8929,0.92);transform-origin:0 1px">개</div>
</div>
<div class="abs" style="left:691px;top:477px;width:59px;height:18px;overflow:hidden">
<div class="t" style="left:51.75px;top:3px;font:normal 14px/1 'Liberation Mono',monospace;white-space:pre;color:#111;-webkit-text-stroke:0.25px #111;transform:scaleX(0.7440);transform-origin:0 0">3</div>
</div>
<div class="abs" style="left:751px;top:477px;width:179px;height:18px;overflow:hidden">
<div class="t" style="left:2.00px;top:3px;font:normal 14px/1 'Liberation Mono',monospace;white-space:pre;color:#111;-webkit-text-stroke:0.25px #111;transform:scaleX(0.7440);transform-origin:0 0">1+1+1</div>
</div>
<div class="abs" style="left:931px;top:477px;width:59px;height:18px;overflow:hidden">
<div class="t" style="left:51.75px;top:3px;font:normal 14px/1 'Liberation Mono',monospace;white-space:pre;color:#111;-webkit-text-stroke:0.25px #111;transform:scaleX(0.7440);transform-origin:0 0">0</div>
</div>
<div class="abs" style="left:995px;top:480px;width:13px;height:13px;border:1px solid #888;background:#fff"></div>
<div class="abs" style="left:0;top:496px;width:13px;height:19px;background:#6495ed;border-bottom:1px solid #9cbcf4;border-right:1px solid #9cbcf4"></div>
<div class="abs" style="left:13px;top:496px;width:1118px;height:19px;background:#ffffff;border-bottom:1px solid #d4d4d4"></div>
<div class="abs" style="left:122px;top:496px;width:1px;height:19px;background:#d4d4d4"></div>
<div class="abs" style="left:390px;top:496px;width:1px;height:19px;background:#d4d4d4"></div>
<div class="abs" style="left:570px;top:496px;width:1px;height:19px;background:#d4d4d4"></div>
<div class="abs" style="left:630px;top:496px;width:1px;height:19px;background:#d4d4d4"></div>
<div class="abs" style="left:690px;top:496px;width:1px;height:19px;background:#d4d4d4"></div>
<div class="abs" style="left:750px;top:496px;width:1px;height:19px;background:#d4d4d4"></div>
<div class="abs" style="left:930px;top:496px;width:1px;height:19px;background:#d4d4d4"></div>
<div class="abs" style="left:990px;top:496px;width:1px;height:19px;background:#d4d4d4"></div>
<div class="abs" style="left:1010px;top:496px;width:1px;height:19px;background:#d4d4d4"></div>
<div class="abs" style="left:1130px;top:496px;width:1px;height:19px;background:#d4d4d4"></div>
<div class="abs" style="left:13px;top:496px;width:109px;height:18px;overflow:hidden">
<div class="t" style="left:2.00px;top:3px;font:normal 14px/1 'Liberation Mono',monospace;white-space:pre;color:#111;-webkit-text-stroke:0.25px #111;transform:scaleX(0.7440);transform-origin:0 0">40142396-21872024</div>
</div>
<div class="abs" style="left:123px;top:496px;width:267px;height:18px;overflow:hidden">
<div class="t" style="left:2.00px;top:3px;font:normal 14px/1 'Liberation Sans',sans-serif;white-space:pre;color:#111;-webkit-text-stroke:0.1px #111;transform:scale(0.8929,0.92);transform-origin:0 1px">일반용경질폴리염화비닐이음관</div>
</div>
<div class="abs" style="left:391px;top:496px;width:179px;height:18px;overflow:hidden">
<div class="t" style="left:2.00px;top:3px;font:normal 14px/1 'Liberation Mono',monospace;white-space:pre;color:#111;-webkit-text-stroke:0.25px #111;transform:scaleX(0.7440);transform-origin:0 0">LT</div>
<div class="t" style="left:14.50px;top:3px;font:normal 14px/1 'Liberation Sans',sans-serif;white-space:pre;color:#111;-webkit-text-stroke:0.1px #111;transform:scale(0.8929,0.92);transform-origin:0 1px">관</div>
<div class="t" style="left:27.00px;top:3px;font:normal 14px/1 'Liberation Mono',monospace;white-space:pre;color:#111;-webkit-text-stroke:0.25px #111;transform:scaleX(0.7440);transform-origin:0 0"> (DRF) D75x75</div>
</div>
<div class="abs" style="left:571px;top:496px;width:59px;height:18px;overflow:hidden">
<div class="t" style="left:2.00px;top:3px;font:normal 14px/1 'Liberation Sans',sans-serif;white-space:pre;color:#111;-webkit-text-stroke:0.1px #111;transform:scale(0.8929,0.92);transform-origin:0 1px">개</div>
</div>
<div class="abs" style="left:691px;top:496px;width:59px;height:18px;overflow:hidden">
<div class="t" style="left:51.75px;top:3px;font:normal 14px/1 'Liberation Mono',monospace;white-space:pre;color:#111;-webkit-text-stroke:0.25px #111;transform:scaleX(0.7440);transform-origin:0 0">6</div>
</div>
<div class="abs" style="left:751px;top:496px;width:179px;height:18px;overflow:hidden">
<div class="t" style="left:2.00px;top:3px;font:normal 14px/1 'Liberation Mono',monospace;white-space:pre;color:#111;-webkit-text-stroke:0.25px #111;transform:scaleX(0.7440);transform-origin:0 0">1+2+2+1</div>
</div>
<div class="abs" style="left:931px;top:496px;width:59px;height:18px;overflow:hidden">
<div class="t" style="left:51.75px;top:3px;font:normal 14px/1 'Liberation Mono',monospace;white-space:pre;color:#111;-webkit-text-stroke:0.25px #111;transform:scaleX(0.7440);transform-origin:0 0">0</div>
</div>
<div class="abs" style="left:995px;top:499px;width:13px;height:13px;border:1px solid #888;background:#fff"></div>
<div class="abs" style="left:0;top:515px;width:13px;height:19px;background:#6495ed;border-bottom:1px solid #9cbcf4;border-right:1px solid #9cbcf4"></div>
<div class="abs" style="left:13px;top:515px;width:1118px;height:19px;background:#ffffff;border-bottom:1px solid #d4d4d4"></div>
<div class="abs" style="left:122px;top:515px;width:1px;height:19px;background:#d4d4d4"></div>
<div class="abs" style="left:390px;top:515px;width:1px;height:19px;background:#d4d4d4"></div>
<div class="abs" style="left:570px;top:515px;width:1px;height:19px;background:#d4d4d4"></div>
<div class="abs" style="left:630px;top:515px;width:1px;height:19px;background:#d4d4d4"></div>
<div class="abs" style="left:690px;top:515px;width:1px;height:19px;background:#d4d4d4"></div>
<div class="abs" style="left:750px;top:515px;width:1px;height:19px;background:#d4d4d4"></div>
<div class="abs" style="left:930px;top:515px;width:1px;height:19px;background:#d4d4d4"></div>
<div class="abs" style="left:990px;top:515px;width:1px;height:19px;background:#d4d4d4"></div>
<div class="abs" style="left:1010px;top:515px;width:1px;height:19px;background:#d4d4d4"></div>
<div class="abs" style="left:1130px;top:515px;width:1px;height:19px;background:#d4d4d4"></div>
<div class="abs" style="left:13px;top:515px;width:109px;height:18px;overflow:hidden">
<div class="t" style="left:2.00px;top:3px;font:normal 14px/1 'Liberation Mono',monospace;white-space:pre;color:#111;-webkit-text-stroke:0.25px #111;transform:scaleX(0.7440);transform-origin:0 0">40142396-21872004</div>
</div>
<div class="abs" style="left:123px;top:515px;width:267px;height:18px;overflow:hidden">
<div class="t" style="left:2.00px;top:3px;font:normal 14px/1 'Liberation Sans',sans-serif;white-space:pre;color:#111;-webkit-text-stroke:0.1px #111;transform:scale(0.8929,0.92);transform-origin:0 1px">일반용경질폴리염화비닐이음관</div>
</div>
<div class="abs" style="left:391px;top:515px;width:179px;height:18px;overflow:hidden">
<div class="t" style="left:2.00px;top:3px;font:normal 14px/1 'Liberation Mono',monospace;white-space:pre;color:#111;-webkit-text-stroke:0.25px #111;transform:scaleX(0.7440);transform-origin:0 0">LT</div>
<div class="t" style="left:14.50px;top:3px;font:normal 14px/1 'Liberation Sans',sans-serif;white-space:pre;color:#111;-webkit-text-stroke:0.1px #111;transform:scale(0.8929,0.92);transform-origin:0 1px">관</div>
<div class="t" style="left:27.00px;top:3px;font:normal 14px/1 'Liberation Mono',monospace;white-space:pre;color:#111;-webkit-text-stroke:0.25px #111;transform:scaleX(0.7440);transform-origin:0 0"> (DRF) D100x50</div>
</div>
<div class="abs" style="left:571px;top:515px;width:59px;height:18px;overflow:hidden">
<div class="t" style="left:2.00px;top:3px;font:normal 14px/1 'Liberation Sans',sans-serif;white-space:pre;color:#111;-webkit-text-stroke:0.1px #111;transform:scale(0.8929,0.92);transform-origin:0 1px">개</div>
</div>
<div class="abs" style="left:691px;top:515px;width:59px;height:18px;overflow:hidden">
<div class="t" style="left:51.75px;top:3px;font:normal 14px/1 'Liberation Mono',monospace;white-space:pre;color:#111;-webkit-text-stroke:0.25px #111;transform:scaleX(0.7440);transform-origin:0 0">1</div>
</div>
<div class="abs" style="left:751px;top:515px;width:179px;height:18px;overflow:hidden">
<div class="t" style="left:2.00px;top:3px;font:normal 14px/1 'Liberation Mono',monospace;white-space:pre;color:#111;-webkit-text-stroke:0.25px #111;transform:scaleX(0.7440);transform-origin:0 0">1</div>
</div>
<div class="abs" style="left:931px;top:515px;width:59px;height:18px;overflow:hidden">
<div class="t" style="left:51.75px;top:3px;font:normal 14px/1 'Liberation Mono',monospace;white-space:pre;color:#111;-webkit-text-stroke:0.25px #111;transform:scaleX(0.7440);transform-origin:0 0">0</div>
</div>
<div class="abs" style="left:995px;top:518px;width:13px;height:13px;border:1px solid #888;background:#fff"></div>
<div class="abs" style="left:0;top:534px;width:13px;height:19px;background:#6495ed;border-bottom:1px solid #9cbcf4;border-right:1px solid #9cbcf4"></div>
<div class="abs" style="left:13px;top:534px;width:1118px;height:19px;background:#ffffff;border-bottom:1px solid #d4d4d4"></div>
<div class="abs" style="left:122px;top:534px;width:1px;height:19px;background:#d4d4d4"></div>
<div class="abs" style="left:390px;top:534px;width:1px;height:19px;background:#d4d4d4"></div>
<div class="abs" style="left:570px;top:534px;width:1px;height:19px;background:#d4d4d4"></div>
<div class="abs" style="left:630px;top:534px;width:1px;height:19px;background:#d4d4d4"></div>
<div class="abs" style="left:690px;top:534px;width:1px;height:19px;background:#d4d4d4"></div>
<div class="abs" style="left:750px;top:534px;width:1px;height:19px;background:#d4d4d4"></div>
<div class="abs" style="left:930px;top:534px;width:1px;height:19px;background:#d4d4d4"></div>
<div class="abs" style="left:990px;top:534px;width:1px;height:19px;background:#d4d4d4"></div>
<div class="abs" style="left:1010px;top:534px;width:1px;height:19px;background:#d4d4d4"></div>
<div class="abs" style="left:1130px;top:534px;width:1px;height:19px;background:#d4d4d4"></div>
<div class="abs" style="left:13px;top:534px;width:109px;height:18px;overflow:hidden">
<div class="t" style="left:2.00px;top:3px;font:normal 14px/1 'Liberation Mono',monospace;white-space:pre;color:#111;-webkit-text-stroke:0.25px #111;transform:scaleX(0.7440);transform-origin:0 0">40142396-21872005</div>
</div>
<div class="abs" style="left:123px;top:534px;width:267px;height:18px;overflow:hidden">
<div class="t" style="left:2.00px;top:3px;font:normal 14px/1 'Liberation Sans',sans-serif;white-space:pre;color:#111;-webkit-text-stroke:0.1px #111;transform:scale(0.8929,0.92);transform-origin:0 1px">일반용경질폴리염화비닐이음관</div>
</div>
<div class="abs" style="left:391px;top:534px;width:179px;height:18px;overflow:hidden">
<div class="t" style="left:2.00px;top:3px;font:normal 14px/1 'Liberation Mono',monospace;white-space:pre;color:#111;-webkit-text-stroke:0.25px #111;transform:scaleX(0.7440);transform-origin:0 0">LT</div>
<div class="t" style="left:14.50px;top:3px;font:normal 14px/1 'Liberation Sans',sans-serif;white-space:pre;color:#111;-webkit-text-stroke:0.1px #111;transform:scale(0.8929,0.92);transform-origin:0 1px">관</div>
<div class="t" style="left:27.00px;top:3px;font:normal 14px/1 'Liberation Mono',monospace;white-space:pre;color:#111;-webkit-text-stroke:0.25px #111;transform:scaleX(0.7440);transform-origin:0 0"> (DRF) D100x75</div>
</div>
<div class="abs" style="left:571px;top:534px;width:59px;height:18px;overflow:hidden">
<div class="t" style="left:2.00px;top:3px;font:normal 14px/1 'Liberation Sans',sans-serif;white-space:pre;color:#111;-webkit-text-stroke:0.1px #111;transform:scale(0.8929,0.92);transform-origin:0 1px">개</div>
</div>
<div class="abs" style="left:691px;top:534px;width:59px;height:18px;overflow:hidden">
<div class="t" style="left:51.75px;top:3px;font:normal 14px/1 'Liberation Mono',monospace;white-space:pre;color:#111;-webkit-text-stroke:0.25px #111;transform:scaleX(0.7440);transform-origin:0 0">6</div>
</div>
<div class="abs" style="left:751px;top:534px;width:179px;height:18px;overflow:hidden">
<div class="t" style="left:2.00px;top:3px;font:normal 14px/1 'Liberation Mono',monospace;white-space:pre;color:#111;-webkit-text-stroke:0.25px #111;transform:scaleX(0.7440);transform-origin:0 0">2+2+2</div>
</div>
<div class="abs" style="left:931px;top:534px;width:59px;height:18px;overflow:hidden">
<div class="t" style="left:51.75px;top:3px;font:normal 14px/1 'Liberation Mono',monospace;white-space:pre;color:#111;-webkit-text-stroke:0.25px #111;transform:scaleX(0.7440);transform-origin:0 0">0</div>
</div>
<div class="abs" style="left:995px;top:537px;width:13px;height:13px;border:1px solid #888;background:#fff"></div>
<div class="abs" style="left:0;top:553px;width:13px;height:19px;background:#6495ed;border-bottom:1px solid #9cbcf4;border-right:1px solid #9cbcf4"></div>
<div class="abs" style="left:13px;top:553px;width:1118px;height:19px;background:#ffffff;border-bottom:1px solid #d4d4d4"></div>
<div class="abs" style="left:122px;top:553px;width:1px;height:19px;background:#d4d4d4"></div>
<div class="abs" style="left:390px;top:553px;width:1px;height:19px;background:#d4d4d4"></div>
<div class="abs" style="left:570px;top:553px;width:1px;height:19px;background:#d4d4d4"></div>
<div class="abs" style="left:630px;top:553px;width:1px;height:19px;background:#d4d4d4"></div>
<div class="abs" style="left:690px;top:553px;width:1px;height:19px;background:#d4d4d4"></div>
<div class="abs" style="left:750px;top:553px;width:1px;height:19px;background:#d4d4d4"></div>
<div class="abs" style="left:930px;top:553px;width:1px;height:19px;background:#d4d4d4"></div>
<div class="abs" style="left:990px;top:553px;width:1px;height:19px;background:#d4d4d4"></div>
<div class="abs" style="left:1010px;top:553px;width:1px;height:19px;background:#d4d4d4"></div>
<div class="abs" style="left:1130px;top:553px;width:1px;height:19px;background:#d4d4d4"></div>
<div class="abs" style="left:13px;top:553px;width:109px;height:18px;overflow:hidden">
<div class="t" style="left:2.00px;top:3px;font:normal 14px/1 'Liberation Mono',monospace;white-space:pre;color:#111;-webkit-text-stroke:0.25px #111;transform:scaleX(0.7440);transform-origin:0 0">40142396-21872006</div>
</div>
<div class="abs" style="left:123px;top:553px;width:267px;height:18px;overflow:hidden">
<div class="t" style="left:2.00px;top:3px;font:normal 14px/1 'Liberation Sans',sans-serif;white-space:pre;color:#111;-webkit-text-stroke:0.1px #111;transform:scale(0.8929,0.92);transform-origin:0 1px">일반용경질폴리염화비닐이음관</div>
</div>
<div class="abs" style="left:391px;top:553px;width:179px;height:18px;overflow:hidden">
<div class="t" style="left:2.00px;top:3px;font:normal 14px/1 'Liberation Mono',monospace;white-space:pre;color:#111;-webkit-text-stroke:0.25px #111;transform:scaleX(0.7440);transform-origin:0 0">LT</div>
<div class="t" style="left:14.50px;top:3px;font:normal 14px/1 'Liberation Sans',sans-serif;white-space:pre;color:#111;-webkit-text-stroke:0.1px #111;transform:scale(0.8929,0.92);transform-origin:0 1px">관</div>
<div class="t" style="left:27.00px;top:3px;font:normal 14px/1 'Liberation Mono',monospace;white-space:pre;color:#111;-webkit-text-stroke:0.25px #111;transform:scaleX(0.7440);transform-origin:0 0"> (DRF) D100x100</div>
</div>
<div class="abs" style="left:571px;top:553px;width:59px;height:18px;overflow:hidden">
<div class="t" style="left:2.00px;top:3px;font:normal 14px/1 'Liberation Sans',sans-serif;white-space:pre;color:#111;-webkit-text-stroke:0.1px #111;transform:scale(0.8929,0.92);transform-origin:0 1px">개</div>
</div>
<div class="abs" style="left:691px;top:553px;width:59px;height:18px;overflow:hidden">
<div class="t" style="left:51.75px;top:3px;font:normal 14px/1 'Liberation Mono',monospace;white-space:pre;color:#111;-webkit-text-stroke:0.25px #111;transform:scaleX(0.7440);transform-origin:0 0">2</div>
</div>
<div class="abs" style="left:751px;top:553px;width:179px;height:18px;overflow:hidden">
<div class="t" style="left:2.00px;top:3px;font:normal 14px/1 'Liberation Mono',monospace;white-space:pre;color:#111;-webkit-text-stroke:0.25px #111;transform:scaleX(0.7440);transform-origin:0 0">1+1</div>
</div>
<div class="abs" style="left:931px;top:553px;width:59px;height:18px;overflow:hidden">
<div class="t" style="left:51.75px;top:3px;font:normal 14px/1 'Liberation Mono',monospace;white-space:pre;color:#111;-webkit-text-stroke:0.25px #111;transform:scaleX(0.7440);transform-origin:0 0">0</div>
</div>
<div class="abs" style="left:995px;top:556px;width:13px;height:13px;border:1px solid #888;background:#fff"></div>
</div>
<div class="abs" style="left:266px;top:714px;width:1292px;height:4px;background:#b4b4b4"></div>
<div class="abs" style="left:267px;top:717px;width:864px;height:96px;overflow:hidden">
<div class="abs" style="left:0;top:0;width:864px;height:21px;background:#4682b4;border-bottom:1px solid #c8d4e0"></div>
<div class="abs" style="left:12px;top:0;width:1px;height:21px;background:#7eaad4"></div>
<div class="abs" style="left:122px;top:0;width:1px;height:21px;background:#7eaad4"></div>
<div class="t" style="left:43.00px;top:4px;font:bold 14px/1 'Liberation Sans',sans-serif;white-space:pre;color:#fff;-webkit-text-stroke:0.1px #fff;transform:scale(0.8929,0.92);transform-origin:0 1px">코</div>
<div class="t" style="left:55.50px;top:4px;font:bold 14px/1 'Liberation Mono',monospace;white-space:pre;color:#fff;-webkit-text-stroke:0.25px #fff;transform:scaleX(0.7440);transform-origin:0 0">    </div>
<div class="t" style="left:80.50px;top:4px;font:bold 14px/1 'Liberation Sans',sans-serif;white-space:pre;color:#fff;-webkit-text-stroke:0.1px #fff;transform:scale(0.8929,0.92);transform-origin:0 1px">드</div>
<div class="abs" style="left:302px;top:0;width:1px;height:21px;background:#7eaad4"></div>
<div class="t" style="left:169.25px;top:4px;font:bold 14px/1 'Liberation Sans',sans-serif;white-space:pre;color:#fff;-webkit-text-stroke:0.1px #fff;transform:scale(0.8929,0.92);transform-origin:0 1px">품</div>
<div class="t" style="left:181.75px;top:4px;font:bold 14px/1 'Liberation Mono',monospace;white-space:pre;color:#fff;-webkit-text-stroke:0.25px #fff;transform:scaleX(0.7440);transform-origin:0 0">          </div>
<div class="t" style="left:244.25px;top:4px;font:bold 14px/1 'Liberation Sans',sans-serif;white-space:pre;color:#fff;-webkit-text-stroke:0.1px #fff;transform:scale(0.8929,0.92);transform-origin:0 1px">명</div>
<div class="abs" style="left:482px;top:0;width:1px;height:21px;background:#7eaad4"></div>
<div class="t" style="left:349.25px;top:4px;font:bold 14px/1 'Liberation Sans',sans-serif;white-space:pre;color:#fff;-webkit-text-stroke:0.1px #fff;transform:scale(0.8929,0.92);transform-origin:0 1px">규</div>
<div class="t" style="left:361.75px;top:4px;font:bold 14px/1 'Liberation Mono',monospace;white-space:pre;color:#fff;-webkit-text-stroke:0.25px #fff;transform:scaleX(0.7440);transform-origin:0 0">          </div>
<div class="t" style="left:424.25px;top:4px;font:bold 14px/1 'Liberation Sans',sans-serif;white-space:pre;color:#fff;-webkit-text-stroke:0.1px #fff;transform:scale(0.8929,0.92);transform-origin:0 1px">격</div>
<div class="abs" style="left:542px;top:0;width:1px;height:21px;background:#7eaad4"></div>
<div class="t" style="left:497.38px;top:4px;font:bold 14px/1 'Liberation Sans',sans-serif;white-space:pre;color:#fff;-webkit-text-stroke:0.1px #fff;transform:scale(0.8929,0.92);transform-origin:0 1px">단</div>
<div class="t" style="left:509.88px;top:4px;font:bold 14px/1 'Liberation Mono',monospace;white-space:pre;color:#fff;-webkit-text-stroke:0.25px #fff;transform:scaleX(0.7440);transform-origin:0 0"> </div>
<div class="t" style="left:516.12px;top:4px;font:bold 14px/1 'Liberation Sans',sans-serif;white-space:pre;color:#fff;-webkit-text-stroke:0.1px #fff;transform:scale(0.8929,0.92);transform-origin:0 1px">위</div>
<div class="abs" style="left:602px;top:0;width:1px;height:21px;background:#7eaad4"></div>
<div class="t" style="left:554.25px;top:4px;font:bold 14px/1 'Liberation Sans',sans-serif;white-space:pre;color:#fff;-webkit-text-stroke:0.1px #fff;transform:scale(0.8929,0.92);transform-origin:0 1px">수</div>
<div class="t" style="left:566.75px;top:4px;font:bold 14px/1 'Liberation Mono',monospace;white-space:pre;color:#fff;-webkit-text-stroke:0.25px #fff;transform:scaleX(0.7440);transform-origin:0 0">  </div>
<div class="t" style="left:579.25px;top:4px;font:bold 14px/1 'Liberation Sans',sans-serif;white-space:pre;color:#fff;-webkit-text-stroke:0.1px #fff;transform:scale(0.8929,0.92);transform-origin:0 1px">량</div>
<div class="abs" style="left:782px;top:0;width:1px;height:21px;background:#7eaad4"></div>
<div class="t" style="left:643.00px;top:4px;font:bold 14px/1 'Liberation Sans',sans-serif;white-space:pre;color:#fff;-webkit-text-stroke:0.1px #fff;transform:scale(0.8929,0.92);transform-origin:0 1px">산</div>
<div class="t" style="left:655.50px;top:4px;font:bold 14px/1 'Liberation Mono',monospace;white-space:pre;color:#fff;-webkit-text-stroke:0.25px #fff;transform:scaleX(0.7440);transform-origin:0 0">     </div>
<div class="t" style="left:686.75px;top:4px;font:bold 14px/1 'Liberation Sans',sans-serif;white-space:pre;color:#fff;-webkit-text-stroke:0.1px #fff;transform:scale(0.8929,0.92);transform-origin:0 1px">출</div>
<div class="t" style="left:699.25px;top:4px;font:bold 14px/1 'Liberation Mono',monospace;white-space:pre;color:#fff;-webkit-text-stroke:0.25px #fff;transform:scaleX(0.7440);transform-origin:0 0">     </div>
<div class="t" style="left:730.50px;top:4px;font:bold 14px/1 'Liberation Sans',sans-serif;white-space:pre;color:#fff;-webkit-text-stroke:0.1px #fff;transform:scale(0.8929,0.92);transform-origin:0 1px">식</div>
<div class="abs" style="left:842px;top:0;width:1px;height:21px;background:#7eaad4"></div>
<div class="t" style="left:788.00px;top:4px;font:bold 14px/1 'Liberation Sans',sans-serif;white-space:pre;color:#fff;-webkit-text-stroke:0.1px #fff;transform:scale(0.8929,0.92);transform-origin:0 1px">노임할증</div>
<div class="abs" style="left:863px;top:0;width:1px;height:21px;background:#7eaad4"></div>
<div class="t" style="left:850.38px;top:4px;font:bold 14px/1 'Liberation Mono',monospace;white-space:pre;color:#fff;-webkit-text-stroke:0.25px #fff;transform:scaleX(0.7440);transform-origin:0 0">D</div>
<div class="abs" style="left:0;top:21px;width:13px;height:19px;background:#4682b4;border-bottom:1px solid #7eaad4;border-right:1px solid #7eaad4"></div>
<div class="abs" style="left:13px;top:21px;width:851px;height:19px;background:#ffffff;border-bottom:1px solid #d4d4d4"></div>
<div class="abs" style="left:122px;top:21px;width:1px;height:19px;background:#d4d4d4"></div>
<div class="abs" style="left:302px;top:21px;width:1px;height:19px;background:#d4d4d4"></div>
<div class="abs" style="left:482px;top:21px;width:1px;height:19px;background:#d4d4d4"></div>
<div class="abs" style="left:542px;top:21px;width:1px;height:19px;background:#d4d4d4"></div>
<div class="abs" style="left:602px;top:21px;width:1px;height:19px;background:#d4d4d4"></div>
<div class="abs" style="left:782px;top:21px;width:1px;height:19px;background:#d4d4d4"></div>
<div class="abs" style="left:842px;top:21px;width:1px;height:19px;background:#d4d4d4"></div>
<div class="abs" style="left:863px;top:21px;width:1px;height:19px;background:#d4d4d4"></div>
<div class="abs" style="left:123px;top:21px;width:179px;height:18px;overflow:hidden">
<div class="t" style="left:2.00px;top:3px;font:normal 14px/1 'Liberation Sans',sans-serif;white-space:pre;color:#111;-webkit-text-stroke:0.1px #111;transform:scale(0.8929,0.92);transform-origin:0 1px">일반행거</div>
<div class="t" style="left:52.00px;top:3px;font:normal 14px/1 'Liberation Mono',monospace;white-space:pre;color:#111;-webkit-text-stroke:0.25px #111;transform:scaleX(0.7440);transform-origin:0 0">(</div>
<div class="t" style="left:58.25px;top:3px;font:normal 14px/1 'Liberation Sans',sans-serif;white-space:pre;color:#111;-webkit-text-stroke:0.1px #111;transform:scale(0.8929,0.92);transform-origin:0 1px">달대볼트</div>
<div class="t" style="left:108.25px;top:3px;font:normal 14px/1 'Liberation Mono',monospace;white-space:pre;color:#111;-webkit-text-stroke:0.25px #111;transform:scaleX(0.7440);transform-origin:0 0">)</div>
</div>
<div class="abs" style="left:303px;top:21px;width:179px;height:18px;overflow:hidden">
<div class="t" style="left:2.00px;top:3px;font:normal 14px/1 'Liberation Mono',monospace;white-space:pre;color:#111;-webkit-text-stroke:0.25px #111;transform:scaleX(0.7440);transform-origin:0 0">D100</div>
</div>
<div class="abs" style="left:483px;top:21px;width:59px;height:18px;overflow:hidden">
<div class="t" style="left:2.00px;top:3px;font:normal 14px/1 'Liberation Sans',sans-serif;white-space:pre;color:#111;-webkit-text-stroke:0.1px #111;transform:scale(0.8929,0.92);transform-origin:0 1px">개소</div>
</div>
<div class="abs" style="left:543px;top:21px;width:59px;height:18px;overflow:hidden">
<div class="t" style="left:45.50px;top:3px;font:normal 14px/1 'Liberation Mono',monospace;white-space:pre;color:#111;-webkit-text-stroke:0.25px #111;transform:scaleX(0.7440);transform-origin:0 0">12</div>
</div>
<div class="abs" style="left:603px;top:21px;width:179px;height:18px;overflow:hidden">
<div class="t" style="left:2.00px;top:3px;font:normal 14px/1 'Liberation Mono',monospace;white-space:pre;color:#111;-webkit-text-stroke:0.25px #111;transform:scaleX(0.7440);transform-origin:0 0">Q*1</div>
</div>
<div class="abs" style="left:783px;top:21px;width:59px;height:18px;overflow:hidden">
<div class="t" style="left:51.75px;top:3px;font:normal 14px/1 'Liberation Mono',monospace;white-space:pre;color:#111;-webkit-text-stroke:0.25px #111;transform:scaleX(0.7440);transform-origin:0 0">0</div>
</div>
<div class="abs" style="left:847px;top:24px;width:13px;height:13px;border:1px solid #888;background:#fff"></div>
<div class="abs" style="left:12px;top:20px;width:111px;height:21px;border:2px solid #111;background:#fff"></div>
<div class="t" style="left:15.00px;top:24px;font:normal 14px/1 'Liberation Mono',monospace;white-space:pre;color:#111;-webkit-text-stroke:0.25px #111;transform:scaleX(0.7440);transform-origin:0 0">MHD2-4100-9000</div>
<div class="abs" style="left:0;top:40px;width:13px;height:19px;background:#4682b4;border-bottom:1px solid #7eaad4;border-right:1px solid #7eaad4"></div>
<div class="abs" style="left:13px;top:40px;width:851px;height:19px;background:#ffffff;border-bottom:1px solid #d4d4d4"></div>
<div class="abs" style="left:122px;top:40px;width:1px;height:19px;background:#d4d4d4"></div>
<div class="abs" style="left:302px;top:40px;width:1px;height:19px;background:#d4d4d4"></div>
<div class="abs" style="left:482px;top:40px;width:1px;height:19px;background:#d4d4d4"></div>
<div class="abs" style="left:542px;top:40px;width:1px;height:19px;background:#d4d4d4"></div>
<div class="abs" style="left:602px;top:40px;width:1px;height:19px;background:#d4d4d4"></div>
<div class="abs" style="left:782px;top:40px;width:1px;height:19px;background:#d4d4d4"></div>
<div class="abs" style="left:842px;top:40px;width:1px;height:19px;background:#d4d4d4"></div>
<div class="abs" style="left:863px;top:40px;width:1px;height:19px;background:#d4d4d4"></div>
<div class="abs" style="left:13px;top:40px;width:109px;height:18px;overflow:hidden">
<div class="t" style="left:2.00px;top:3px;font:normal 14px/1 'Liberation Mono',monospace;white-space:pre;color:#111;-webkit-text-stroke:0.25px #111;transform:scaleX(0.7440);transform-origin:0 0">40142396-30126065</div>
</div>
<div class="abs" style="left:123px;top:40px;width:179px;height:18px;overflow:hidden">
<div class="t" style="left:2.00px;top:3px;font:normal 14px/1 'Liberation Sans',sans-serif;white-space:pre;color:#111;-webkit-text-stroke:0.1px #111;transform:scale(0.8929,0.92);transform-origin:0 1px">관통스리브</div>
<div class="t" style="left:64.50px;top:3px;font:normal 14px/1 'Liberation Mono',monospace;white-space:pre;color:#111;-webkit-text-stroke:0.25px #111;transform:scaleX(0.7440);transform-origin:0 0"> D100</div>
</div>
<div class="abs" style="left:303px;top:40px;width:179px;height:18px;overflow:hidden">
<div class="t" style="left:2.00px;top:3px;font:normal 14px/1 'Liberation Sans',sans-serif;white-space:pre;color:#111;-webkit-text-stroke:0.1px #111;transform:scale(0.8929,0.92);transform-origin:0 1px">관통스리브</div>
<div class="t" style="left:64.50px;top:3px;font:normal 14px/1 'Liberation Mono',monospace;white-space:pre;color:#111;-webkit-text-stroke:0.25px #111;transform:scaleX(0.7440);transform-origin:0 0"> D100</div>
</div>
<div class="abs" style="left:483px;top:40px;width:59px;height:18px;overflow:hidden">
<div class="t" style="left:2.00px;top:3px;font:normal 14px/1 'Liberation Sans',sans-serif;white-space:pre;color:#111;-webkit-text-stroke:0.1px #111;transform:scale(0.8929,0.92);transform-origin:0 1px">개</div>
</div>
<div class="abs" style="left:543px;top:40px;width:59px;height:18px;overflow:hidden">
<div class="t" style="left:45.50px;top:3px;font:normal 14px/1 'Liberation Mono',monospace;white-space:pre;color:#111;-webkit-text-stroke:0.25px #111;transform:scaleX(0.7440);transform-origin:0 0">12</div>
</div>
<div class="abs" style="left:603px;top:40px;width:179px;height:18px;overflow:hidden">
<div class="t" style="left:2.00px;top:3px;font:normal 14px/1 'Liberation Mono',monospace;white-space:pre;color:#111;-webkit-text-stroke:0.25px #111;transform:scaleX(0.7440);transform-origin:0 0">Q*1</div>
</div>
<div class="abs" style="left:783px;top:40px;width:59px;height:18px;overflow:hidden">
<div class="t" style="left:51.75px;top:3px;font:normal 14px/1 'Liberation Mono',monospace;white-space:pre;color:#111;-webkit-text-stroke:0.25px #111;transform:scaleX(0.7440);transform-origin:0 0">0</div>
</div>
<div class="abs" style="left:847px;top:43px;width:13px;height:13px;border:1px solid #888;background:#fff"></div>
<div class="abs" style="left:0;top:59px;width:13px;height:19px;background:#4682b4;border-bottom:1px solid #7eaad4;border-right:1px solid #7eaad4"></div>
<div class="abs" style="left:13px;top:59px;width:851px;height:19px;background:#ffffff;border-bottom:1px solid #d4d4d4"></div>
<div class="abs" style="left:122px;top:59px;width:1px;height:19px;background:#d4d4d4"></div>
<div class="abs" style="left:302px;top:59px;width:1px;height:19px;background:#d4d4d4"></div>
<div class="abs" style="left:482px;top:59px;width:1px;height:19px;background:#d4d4d4"></div>
<div class="abs" style="left:542px;top:59px;width:1px;height:19px;background:#d4d4d4"></div>
<div class="abs" style="left:602px;top:59px;width:1px;height:19px;background:#d4d4d4"></div>
<div class="abs" style="left:782px;top:59px;width:1px;height:19px;background:#d4d4d4"></div>
<div class="abs" style="left:842px;top:59px;width:1px;height:19px;background:#d4d4d4"></div>
<div class="abs" style="left:863px;top:59px;width:1px;height:19px;background:#d4d4d4"></div>
<div class="abs" style="left:13px;top:59px;width:109px;height:18px;overflow:hidden">
<div class="t" style="left:2.00px;top:3px;font:normal 14px/1 'Liberation Mono',monospace;white-space:pre;color:#111;-webkit-text-stroke:0.25px #111;transform:scaleX(0.7440);transform-origin:0 0">40142396-31872105</div>
</div>
<div class="abs" style="left:123px;top:59px;width:179px;height:18px;overflow:hidden">
<div class="t" style="left:2.00px;top:3px;font:normal 14px/1 'Liberation Mono',monospace;white-space:pre;color:#111;-webkit-text-stroke:0.25px #111;transform:scaleX(0.7440);transform-origin:0 0">90° </div>
<div class="t" style="left:27.00px;top:3px;font:normal 14px/1 'Liberation Sans',sans-serif;white-space:pre;color:#111;-webkit-text-stroke:0.1px #111;transform:scale(0.8929,0.92);transform-origin:0 1px">단곡관</div>
<div class="t" style="left:64.50px;top:3px;font:normal 14px/1 'Liberation Mono',monospace;white-space:pre;color:#111;-webkit-text-stroke:0.25px #111;transform:scaleX(0.7440);transform-origin:0 0">(DRF) D100</div>
</div>
<div class="abs" style="left:303px;top:59px;width:179px;height:18px;overflow:hidden">
<div class="t" style="left:2.00px;top:3px;font:normal 14px/1 'Liberation Mono',monospace;white-space:pre;color:#111;-webkit-text-stroke:0.25px #111;transform:scaleX(0.7440);transform-origin:0 0">90° </div>
<div class="t" style="left:27.00px;top:3px;font:normal 14px/1 'Liberation Sans',sans-serif;white-space:pre;color:#111;-webkit-text-stroke:0.1px #111;transform:scale(0.8929,0.92);transform-origin:0 1px">단곡관</div>
<div class="t" style="left:64.50px;top:3px;font:normal 14px/1 'Liberation Mono',monospace;white-space:pre;color:#111;-webkit-text-stroke:0.25px #111;transform:scaleX(0.7440);transform-origin:0 0">(DRF) D100</div>
</div>
<div class="abs" style="left:483px;top:59px;width:59px;height:18px;overflow:hidden">
<div class="t" style="left:2.00px;top:3px;font:normal 14px/1 'Liberation Sans',sans-serif;white-space:pre;color:#111;-webkit-text-stroke:0.1px #111;transform:scale(0.8929,0.92);transform-origin:0 1px">개</div>
</div>
<div class="abs" style="left:543px;top:59px;width:59px;height:18px;overflow:hidden">
<div class="t" style="left:45.50px;top:3px;font:normal 14px/1 'Liberation Mono',monospace;white-space:pre;color:#111;-webkit-text-stroke:0.25px #111;transform:scaleX(0.7440);transform-origin:0 0">12</div>
</div>
<div class="abs" style="left:603px;top:59px;width:179px;height:18px;overflow:hidden">
<div class="t" style="left:2.00px;top:3px;font:normal 14px/1 'Liberation Mono',monospace;white-space:pre;color:#111;-webkit-text-stroke:0.25px #111;transform:scaleX(0.7440);transform-origin:0 0">Q*1</div>
</div>
<div class="abs" style="left:783px;top:59px;width:59px;height:18px;overflow:hidden">
<div class="t" style="left:51.75px;top:3px;font:normal 14px/1 'Liberation Mono',monospace;white-space:pre;color:#111;-webkit-text-stroke:0.25px #111;transform:scaleX(0.7440);transform-origin:0 0">0</div>
</div>
<div class="abs" style="left:847px;top:62px;width:13px;height:13px;border:1px solid #888;background:#fff"></div>
<div class="abs" style="left:0;top:78px;width:13px;height:19px;background:#4682b4;border-bottom:1px solid #7eaad4;border-right:1px solid #7eaad4"></div>
<div class="abs" style="left:4px;top:86px;width:4px;height:4px;background:#40e0f0"></div>
<div class="abs" style="left:13px;top:78px;width:851px;height:19px;background:#ffffff;border-bottom:1px solid #d4d4d4"></div>
<div class="abs" style="left:122px;top:78px;width:1px;height:19px;background:#d4d4d4"></div>
<div class="abs" style="left:302px;top:78px;width:1px;height:19px;background:#d4d4d4"></div>
<div class="abs" style="left:482px;top:78px;width:1px;height:19px;background:#d4d4d4"></div>
<div class="abs" style="left:542px;top:78px;width:1px;height:19px;background:#d4d4d4"></div>
<div class="abs" style="left:602px;top:78px;width:1px;height:19px;background:#d4d4d4"></div>
<div class="abs" style="left:782px;top:78px;width:1px;height:19px;background:#d4d4d4"></div>
<div class="abs" style="left:842px;top:78px;width:1px;height:19px;background:#d4d4d4"></div>
<div class="abs" style="left:863px;top:78px;width:1px;height:19px;background:#d4d4d4"></div>
<div class="abs" style="left:13px;top:78px;width:109px;height:18px;overflow:hidden">
<div class="t" style="left:2.00px;top:3px;font:normal 14px/1 'Liberation Mono',monospace;white-space:pre;color:#111;-webkit-text-stroke:0.25px #111;transform:scaleX(0.7440);transform-origin:0 0">40142185-20112006</div>
</div>
<div class="abs" style="left:123px;top:78px;width:179px;height:18px;overflow:hidden">
<div class="t" style="left:2.00px;top:3px;font:normal 14px/1 'Liberation Mono',monospace;white-space:pre;color:#111;-webkit-text-stroke:0.25px #111;transform:scaleX(0.7440);transform-origin:0 0">PVC</div>
<div class="t" style="left:20.75px;top:3px;font:normal 14px/1 'Liberation Sans',sans-serif;white-space:pre;color:#111;-webkit-text-stroke:0.1px #111;transform:scale(0.8929,0.92);transform-origin:0 1px">관</div>
<div class="t" style="left:33.25px;top:3px;font:normal 14px/1 'Liberation Mono',monospace;white-space:pre;color:#111;-webkit-text-stroke:0.25px #111;transform:scaleX(0.7440);transform-origin:0 0">(VG1)</div>
</div>
<div class="abs" style="left:303px;top:78px;width:179px;height:18px;overflow:hidden">
<div class="t" style="left:2.00px;top:3px;font:normal 14px/1 'Liberation Mono',monospace;white-space:pre;color:#111;-webkit-text-stroke:0.25px #111;transform:scaleX(0.7440);transform-origin:0 0">PVC</div>
<div class="t" style="left:20.75px;top:3px;font:normal 14px/1 'Liberation Sans',sans-serif;white-space:pre;color:#111;-webkit-text-stroke:0.1px #111;transform:scale(0.8929,0.92);transform-origin:0 1px">관</div>
<div class="t" style="left:33.25px;top:3px;font:normal 14px/1 'Liberation Mono',monospace;white-space:pre;color:#111;-webkit-text-stroke:0.25px #111;transform:scaleX(0.7440);transform-origin:0 0">(VG1), D100</div>
</div>
<div class="abs" style="left:483px;top:78px;width:59px;height:18px;overflow:hidden">
<div class="t" style="left:2.00px;top:3px;font:normal 14px/1 'Liberation Mono',monospace;white-space:pre;color:#111;-webkit-text-stroke:0.25px #111;transform:scaleX(0.7440);transform-origin:0 0">M</div>
</div>
<div class="abs" style="left:543px;top:78px;width:59px;height:18px;overflow:hidden">
<div class="t" style="left:33.00px;top:3px;font:normal 14px/1 'Liberation Mono',monospace;white-space:pre;color:#111;-webkit-text-stroke:0.25px #111;transform:scaleX(0.7440);transform-origin:0 0">15.6</div>
</div>
<div class="abs" style="left:603px;top:78px;width:179px;height:18px;overflow:hidden">
<div class="t" style="left:2.00px;top:3px;font:normal 14px/1 'Liberation Mono',monospace;white-space:pre;color:#111;-webkit-text-stroke:0.25px #111;transform:scaleX(0.7440);transform-origin:0 0">Q*(1+0.3)</div>
</div>
<div class="abs" style="left:783px;top:78px;width:59px;height:18px;overflow:hidden">
<div class="t" style="left:51.75px;top:3px;font:normal 14px/1 'Liberation Mono',monospace;white-space:pre;color:#111;-webkit-text-stroke:0.25px #111;transform:scaleX(0.7440);transform-origin:0 0">0</div>
</div>
<div class="abs" style="left:847px;top:81px;width:13px;height:13px;border:1px solid #888;background:#fff"></div>
</div>
<div class="abs" style="left:1541px;top:147px;width:16px;height:6px;border:1px solid #5a6a8a;border-radius:2px;background:linear-gradient(#f4f8ff,#d4e0f0)"></div>
<div class="abs" style="left:1546px;top:149px;width:6px;height:1px;background:#8aa0c0"></div>
<div class="sb" style="left:1541px;top:153px;height:17px"></div>
<svg class="abs" style="left:1544px;top:158px" width="10" height="6"><path d="M0 5.5 L5 0.5 L10 5.5 Z" fill="#3a4a6a"/></svg>
<div class="sb" style="left:1541px;top:170px;height:421px"></div>
<div class="abs" style="left:1541px;top:591px;width:16px;height:105px;background:#7499c4"></div>
<div class="abs" style="left:1545px;top:376px;width:8px;height:8px;background:#8a94a8;border-radius:1px"></div>
<div class="sb" style="left:1541px;top:696px;height:17px"></div>
<svg class="abs" style="left:1544px;top:702px" width="10" height="6"><path d="M0 0.5 L10 0.5 L5 5.5 Z" fill="#3a4a6a"/></svg>
<div class="abs" style="left:1541px;top:718px;width:16px;height:6px;border:1px solid #5a6a8a;border-radius:2px;background:linear-gradient(#f4f8ff,#d4e0f0)"></div>
<div class="abs" style="left:1546px;top:720px;width:6px;height:1px;background:#8aa0c0"></div>
<div class="sb" style="left:1541px;top:724px;height:17px"></div>
<svg class="abs" style="left:1544px;top:729px" width="10" height="6"><path d="M0 5.5 L5 0.5 L10 5.5 Z" fill="#3a4a6a"/></svg>
<div class="sb" style="left:1541px;top:741px;height:150px"></div>
<div class="abs" style="left:1545px;top:812px;width:8px;height:8px;background:#8a94a8;border-radius:1px"></div>
<div class="sb" style="left:1541px;top:891px;height:17px"></div>
<svg class="abs" style="left:1544px;top:897px" width="10" height="6"><path d="M0 0.5 L10 0.5 L5 5.5 Z" fill="#3a4a6a"/></svg>
<div id="status"></div>
<div class="t" style="left:17px;top:918px;font-size:12.5px;letter-spacing:0.5px;color:#333">3 / 35</div>
<div class="abs" style="left:1557px;top:921px;width:2px;height:2px;background:#8a8a8a"></div>
<div class="abs" style="left:1553px;top:925px;width:2px;height:2px;background:#8a8a8a"></div>
<div class="abs" style="left:1557px;top:925px;width:2px;height:2px;background:#8a8a8a"></div>
<div class="abs" style="left:1549px;top:929px;width:2px;height:2px;background:#8a8a8a"></div>
<div class="abs" style="left:1553px;top:929px;width:2px;height:2px;background:#8a8a8a"></div>
<div class="abs" style="left:1557px;top:929px;width:2px;height:2px;background:#8a8a8a"></div>
</body></html>
